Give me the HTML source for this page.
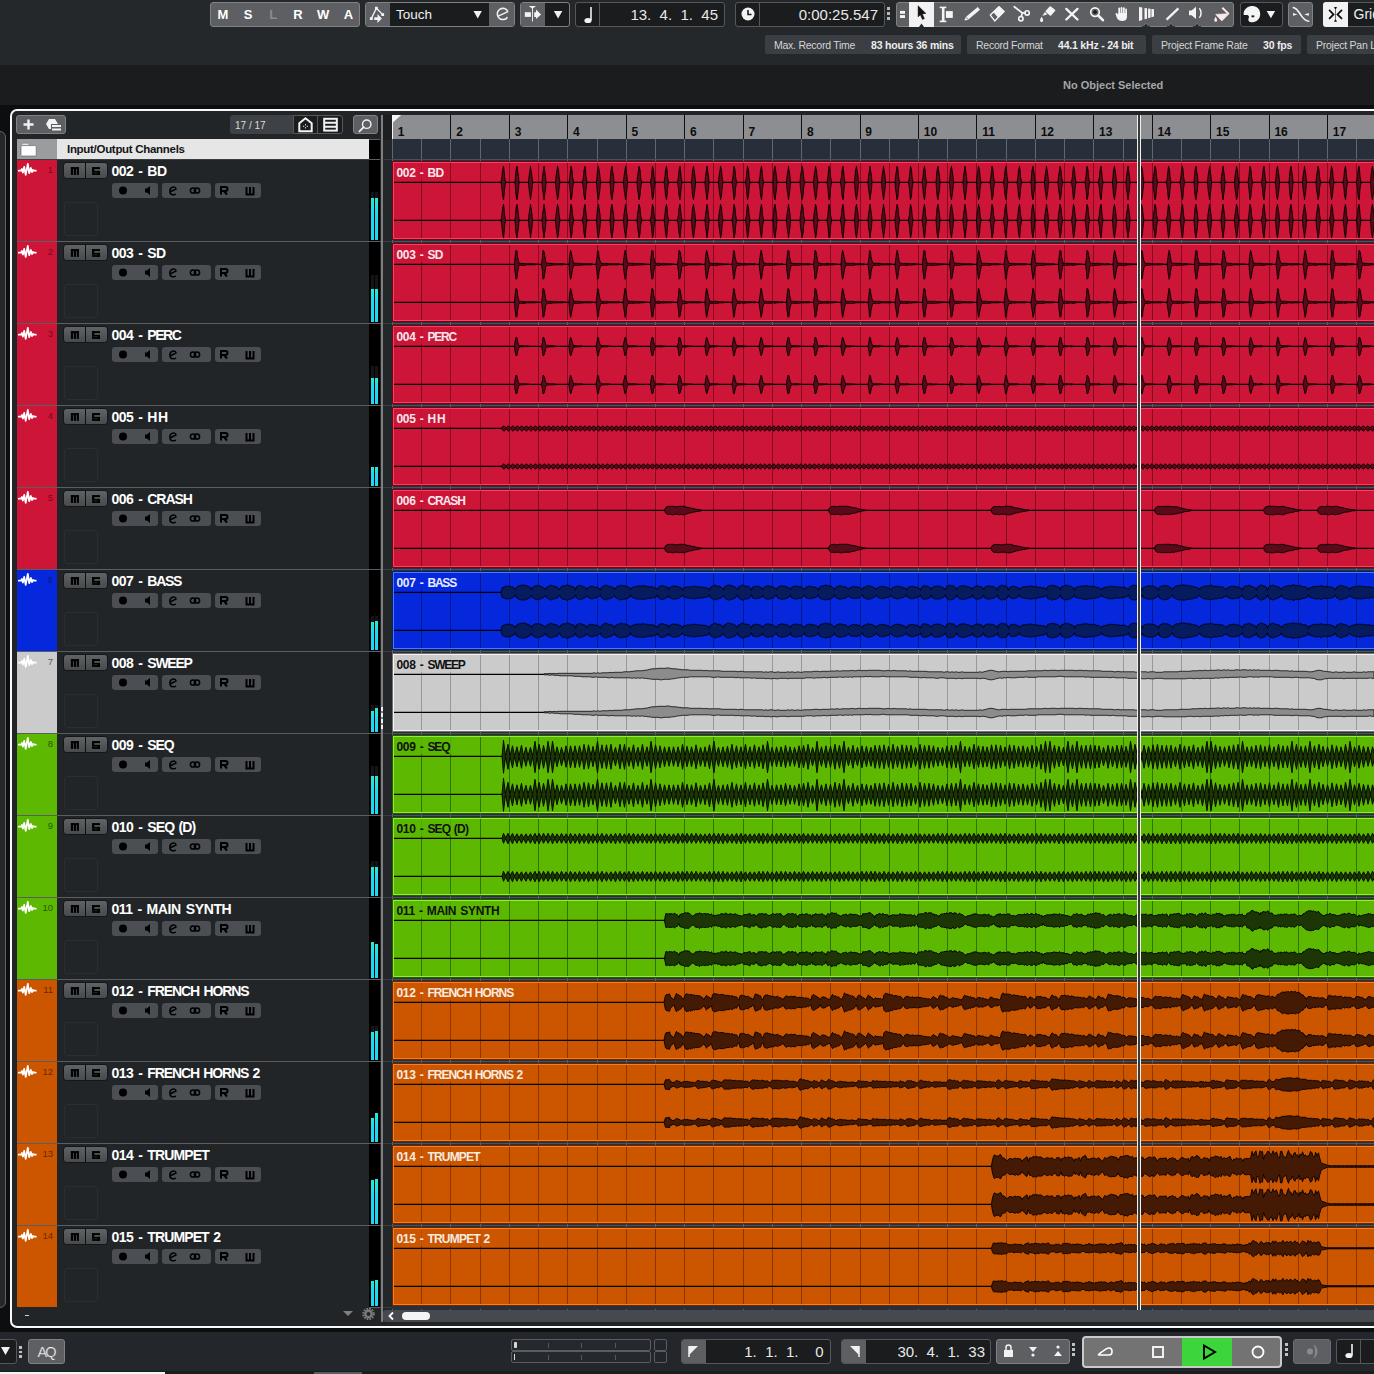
<!DOCTYPE html><html><head><meta charset="utf-8"><style>
html,body{margin:0;padding:0;}
body{width:1374px;height:1374px;position:relative;overflow:hidden;background:#25282b;font-family:"Liberation Sans",sans-serif;}
div{position:absolute;box-sizing:border-box;}
.t{white-space:nowrap;line-height:1;}
svg{position:absolute;}
</style></head><body>
<div style="left:0px;top:0px;width:1374px;height:65px;background:#25282b"></div>
<div style="left:0px;top:65px;width:1374px;height:40px;background:#1b1c1e"></div>
<div style="left:0px;top:105px;width:1374px;height:4px;background:#0d0e0f"></div>
<div class="t" style="left:1063px;top:80px;font-size:11px;font-weight:bold;color:#a6a7a9">No Object Selected</div>
<div style="left:210px;top:2px;width:150px;height:25px;background:#5e5f63;border:1px solid #808185;border-radius:3px"></div>
<div class="t" style="left:216.9px;top:8px;width:12px;text-align:center;font-size:13px;font-weight:bold;color:#fff">M</div>
<div class="t" style="left:242px;top:8px;width:12px;text-align:center;font-size:13px;font-weight:bold;color:#fff">S</div>
<div class="t" style="left:267.3px;top:8px;width:12px;text-align:center;font-size:13px;font-weight:bold;color:#8a8b8e">L</div>
<div class="t" style="left:292px;top:8px;width:12px;text-align:center;font-size:13px;font-weight:bold;color:#fff">R</div>
<div class="t" style="left:317px;top:8px;width:12px;text-align:center;font-size:13px;font-weight:bold;color:#fff">W</div>
<div class="t" style="left:342.4px;top:8px;width:12px;text-align:center;font-size:13px;font-weight:bold;color:#fff">A</div>
<div style="left:365px;top:2px;width:150px;height:25px;background:#1a1c1e;border:1px solid #808185;border-radius:3px"></div>
<div style="left:366px;top:3px;width:24px;height:23px;background:#5e5f63;border-radius:2px 0 0 2px"></div>
<div style="left:489px;top:3px;width:25px;height:23px;background:#5e5f63;border-radius:0 2px 2px 0"></div>
<div class="t" style="left:396px;top:8px;font-size:13.5px;color:#f0f0f0">Touch</div>
<svg style="left:366px;top:3px;" width="24" height="23" viewBox="0 0 24 23"><path d="M5.3 15.6 L10.4 5.2 L16.7 11.6" stroke="#f2f2f2" stroke-width="1.3" fill="none"/><rect x="9" y="3.8" width="2.8" height="2.8" fill="#f2f2f2"/><rect x="15.3" y="10.2" width="2.8" height="2.8" fill="#f2f2f2"/><rect x="3.9" y="14.2" width="2.8" height="2.8" fill="#f2f2f2"/><path d="M8.2 14.3 H11.5 V11 L15.8 15.6 L11.5 19.9 V16.9 H8.2Z" fill="#f2f2f2"/></svg>
<svg style="left:472px;top:9px;" width="12" height="10" viewBox="0 0 12 10"><path d="M1.5 2h8.4l-4.2 7.4z" fill="#f2f2f2"/></svg>
<svg style="left:489px;top:3px;" width="25" height="23" viewBox="0 0 25 23"><path d="M18.98 8.63 A5.6 5.6 0 1 0 18.49 14.21" stroke="#f2f2f2" stroke-width="1.5" fill="none"/><path d="M8.6 13.4 L18.98 8.63" stroke="#f2f2f2" stroke-width="1.5"/></svg>
<div style="left:520px;top:2px;width:50px;height:25px;background:#1a1c1e;border:1px solid #808185;border-radius:3px"></div>
<div style="left:521px;top:3px;width:24px;height:23px;background:#5e5f63;border-radius:2px 0 0 2px"></div>
<svg style="left:521px;top:3px;" width="24" height="23" viewBox="0 0 24 23"><path d="M7.8 3 H15 L11.9 5.6 V18.6 H11 V5.6Z" fill="#f2f2f2"/><rect x="3.8" y="9.2" width="6.1" height="4.7" fill="#f2f2f2"/><path d="M13.2 9.2 H15 V6.6 L20.1 11.5 L15 16.1 V13.9 H13.2Z" fill="#f2f2f2"/></svg>
<svg style="left:552px;top:9px;" width="12" height="10" viewBox="0 0 12 10"><path d="M1.9 2h8.4l-4.2 7.4z" fill="#f2f2f2"/></svg>
<div style="left:575px;top:2px;width:150px;height:25px;background:#1a1c1e;border:1px solid #55575b;border-radius:3px"></div>
<div style="left:599px;top:3px;width:1px;height:23px;background:#55575b"></div>
<svg style="left:580px;top:5px;" width="16" height="19" viewBox="0 0 16 19"><path d="M11 2 V15" stroke="#f2f2f2" stroke-width="1.6"/><ellipse cx="8" cy="15.5" rx="3.6" ry="2.6" fill="#f2f2f2"/></svg>
<div class="t" style="left:600px;top:7px;width:118px;text-align:right;font-size:15px;color:#e8e8e8">13.&nbsp;&nbsp;4.&nbsp;&nbsp;1.&nbsp;&nbsp;45</div>
<div style="left:735px;top:2px;width:150px;height:25px;background:#1a1c1e;border:1px solid #55575b;border-radius:3px"></div>
<div style="left:759px;top:3px;width:1px;height:23px;background:#55575b"></div>
<svg style="left:738px;top:4px;" width="20" height="20" viewBox="0 0 20 20"><circle cx="10" cy="10" r="6.5" fill="#f2f2f2"/><path d="M10 6v4.5h3.5" stroke="#1a1c1e" stroke-width="1.6" fill="none"/></svg>
<div class="t" style="left:760px;top:7px;width:118px;text-align:right;font-size:15px;color:#e8e8e8">0:00:25.547</div>
<div style="left:887px;top:7px;width:3px;height:3px;background:#b8b8b8"></div>
<div style="left:887px;top:12px;width:3px;height:3px;background:#b8b8b8"></div>
<div style="left:887px;top:17px;width:3px;height:3px;background:#b8b8b8"></div>
<div style="left:896px;top:2px;width:338px;height:25px;background:#5e5f63;border:1px solid #808185;border-radius:3px"></div>
<svg style="left:896px;top:2px;" width="338" height="25" viewBox="0 0 338 25"><g transform="translate(-896 -2)">
<rect x="900" y="10.9" width="5" height="2.9" fill="#f4f4f4"/><rect x="900" y="15.1" width="5" height="2.9" fill="#f4f4f4"/>
<rect x="909" y="2" width="25" height="25" fill="#f2f2f2"/>
<path d="M919 27 L921.5 23.6 L924 27Z" fill="#25272a"/>
<path d="M918.1 5.8 L925.9 13.5 L922.2 13.9 L924.4 18.6 L922.5 19.5 L920.3 14.7 L918.1 16.9Z" fill="#111" stroke="#111" stroke-width="0.5" stroke-linejoin="round"/>
<rect x="941.9" y="7.1" width="2.6" height="14.6" fill="#f4f4f4"/><rect x="939.7" y="6.6" width="6.6" height="1.6" fill="#f4f4f4"/><rect x="939.7" y="20.6" width="6.6" height="1.6" fill="#f4f4f4"/><rect x="945.9" y="11.1" width="6.9" height="6.8" fill="#f4f4f4"/>
<path d="M964.8 20.2 L968.07 19.42 L979.67 9.65 L977.73 7.35 L966.13 17.12Z" fill="#f4f4f4" stroke="#f4f4f4" stroke-width="0.6" stroke-linejoin="round"/><path d="M966.3 17.3 L968.2 19.5" stroke="#5e5f63" stroke-width="0.7"/>
<path d="M999 6.7 L1004.1 11.5 L994.7 20.9 L990.3 15.1Z" fill="none" stroke="#f4f4f4" stroke-width="1.4" stroke-linejoin="round"/><path d="M999 6.7 L1004.1 11.5 L998.3 17.3 L993.6 11.9Z" fill="#f4f4f4" stroke="#f4f4f4" stroke-width="1" stroke-linejoin="round"/>
<path d="M1014.3 6.7 L1022.3 12.9 L1025 12.9 M1022.3 12.9 L1021.2 16.5" stroke="#f4f4f4" stroke-width="1.8" stroke-linecap="round" fill="none"/><circle cx="1027.1" cy="12.9" r="2.2" stroke="#f4f4f4" stroke-width="1.6" fill="none"/><circle cx="1020.9" cy="18.7" r="2.2" stroke="#f4f4f4" stroke-width="1.6" fill="none"/>
<path d="M1041.6 16.8 C1040.3 18.8,1040 19.8,1040.1 20.6 A1.5 1.5 0 0 0 1043.1 20.6 C1043.2 19.8,1042.9 18.8,1041.6 16.8Z" fill="#f4f4f4"/><path d="M1042.4 15.9 L1044.8 11.9 L1047.4 14.2Z" fill="#f4f4f4"/><path d="M1046.4 11.3 L1050.3 7.2 L1054.4 10.5 L1050.4 14.8Z" fill="#f4f4f4" stroke="#f4f4f4" stroke-width="1.8" stroke-linejoin="round"/>
<path d="M1066.3 8.9 L1077.5 19.5 M1077.5 8.9 L1066.3 19.5" stroke="#f4f4f4" stroke-width="2.3" stroke-linecap="round"/>
<circle cx="1095" cy="12.1" r="4.3" stroke="#f4f4f4" stroke-width="1.7" fill="none"/><path d="M1098.4 15.6 L1102.9 20.2" stroke="#f4f4f4" stroke-width="2.6" stroke-linecap="round"/><path d="M1093 12.1 H1097 M1095 10.1 V14.1" stroke="#111" stroke-width="1.2"/>
<g fill="#f4f4f4"><rect x="1118.3" y="7.6" width="1.8" height="8" rx="0.9"/><rect x="1120.6" y="6.9" width="1.8" height="8" rx="0.9"/><rect x="1122.9" y="7.3" width="1.8" height="8" rx="0.9"/><rect x="1125.2" y="8.6" width="1.8" height="8" rx="0.9"/><path d="M1118.3 13 H1127 V16.5 C1127 19.5,1125.2 21,1122.3 21 C1119.5 21,1118 19.8,1117 18 L1115.6 14.2 A0.9 0.9 0 0 1 1117.3 13.6 L1118.3 15Z"/></g>
<path d="M1139 7.1 L1142.3 7.6 L1142.3 20 L1139 20.9Z M1144.5 7.9 L1147 8.3 L1147 18.7 L1144.5 19.3Z M1148.1 8.5 L1150.6 8.8 L1150.6 17.6 L1148.1 18.2Z M1151.4 9 L1154 9.3 L1154 16.6 L1151.4 17.2Z" fill="#f4f4f4"/>
<path d="M1166.6 19.6 L1178.4 8.4" stroke="#f4f4f4" stroke-width="2.3"/>
<path d="M1189 10.6 H1191.6 L1196 6.8 V19.1 L1191.6 15.3 H1189Z" fill="#f4f4f4"/><path d="M1199.3 8.3 C1201.6 10.3,1201.6 15.8,1199.3 17.8" stroke="#f4f4f4" stroke-width="1.5" fill="none"/>
<path d="M1215.8 14.4 L1228.9 13.8 L1221.8 20.9Z" fill="#fbeaea" stroke="#fbeaea" stroke-width="0.8" stroke-linejoin="round"/><path d="M1222.3 7.7 L1228.6 13.9" stroke="#fbeaea" stroke-width="2"/><path d="M1215.6 16.8 C1214.5 18.6,1214.2 19.6,1214.3 20.4 A1.4 1.4 0 0 0 1217.1 20.4 C1217.2 19.6,1216.8 18.6,1215.6 16.8Z" fill="#fbeaea"/>
</g></svg>
<svg style="left:1142.3px;top:22px;" width="8" height="5" viewBox="0 0 8 5"><path d="M0.5 5 L4 1.2 L7.5 5Z" fill="#25272a" stroke="#808185" stroke-width="0.9"/><rect x="0" y="4.2" width="8" height="1" fill="#25272a"/></svg>
<svg style="left:1167.4px;top:22px;" width="8" height="5" viewBox="0 0 8 5"><path d="M0.5 5 L4 1.2 L7.5 5Z" fill="#25272a" stroke="#808185" stroke-width="0.9"/><rect x="0" y="4.2" width="8" height="1" fill="#25272a"/></svg>
<svg style="left:1192.5px;top:22px;" width="8" height="5" viewBox="0 0 8 5"><path d="M0.5 5 L4 1.2 L7.5 5Z" fill="#25272a" stroke="#808185" stroke-width="0.9"/><rect x="0" y="4.2" width="8" height="1" fill="#25272a"/></svg>
<div style="left:1240px;top:2px;width:43px;height:25px;background:#1a1c1e;border:1px solid #55575b;border-radius:3px"></div>
<svg style="left:1240px;top:2px;" width="43" height="25" viewBox="0 0 43 25"><path d="M3.6 12.2 C3.6 6.5,8.5 3.9,12.5 3.9 C17.5 3.9,20.2 7.6,20.2 12 C20.2 17.6,15.8 20.3,11.6 20.3 C9.2 20.3,8.4 19.2,8.4 17.8 C8.4 15.8,9.8 14.8,8.2 13.4 C6.8 12.3,3.6 14,3.6 12.2Z" fill="#f4f4f4"/><ellipse cx="12.9" cy="14.3" rx="1.6" ry="1.1" fill="#1a1c1e"/><path d="M26.7 8.9 H35.1 L30.9 16.3Z" fill="#f4f4f4"/></svg>
<div style="left:1288px;top:2px;width:25px;height:25px;background:#5e5f63;border:1px solid #808185;border-radius:3px"></div>
<svg style="left:1288px;top:2px;" width="25" height="25" viewBox="0 0 25 25"><path d="M5.4 5.6 C9 6.6,10 9,12.5 12.5 C15 16,16 18.4,20.6 19.3" stroke="#f4f4f4" stroke-width="1.6" fill="none" stroke-linecap="round"/><path d="M5 10.9 L9.4 12.4 L5 13.8Z M20.8 10.9 L16.3 12.4 L20.8 13.8Z" fill="#f4f4f4"/></svg>
<div style="left:1323px;top:2px;width:60px;height:25px;background:#1a1c1e;border:1px solid #55575b;border-radius:3px"></div>
<div style="left:1323px;top:2px;width:25px;height:25px;background:#f2f2f2;border-radius:3px 0 0 3px"></div>
<svg style="left:1323px;top:2px;" width="25" height="25" viewBox="0 0 25 25"><path d="M6.1 7.9 L10.5 12.4 L6.1 16.8 M19 7.9 L14.5 12.4 L19 16.8" stroke="#111" stroke-width="1.8" fill="none"/><path d="M11 4.9 H14 L12.5 7.9Z M11 19.8 H14 L12.5 16.8Z" fill="#111"/><path d="M12.5 7.9 V16.8" stroke="#111" stroke-width="0.6"/></svg>
<div class="t" style="left:1353.5px;top:7px;font-size:14px;color:#f0f0f0">Grid</div>
<div style="left:765px;top:35px;width:196px;height:19px;background:#3b3e42;border-radius:2px"></div>
<div class="t" style="left:774px;top:39.5px;font-size:10.5px;letter-spacing:-0.25px;color:#d4d5d7">Max. Record Time</div>
<div class="t" style="left:871px;top:39.5px;font-size:10.5px;letter-spacing:-0.2px;font-weight:bold;color:#eeeeee">83 hours 36 mins</div>
<div style="left:967px;top:35px;width:179px;height:19px;background:#3b3e42;border-radius:2px"></div>
<div class="t" style="left:976px;top:39.5px;font-size:10.5px;letter-spacing:-0.25px;color:#d4d5d7">Record Format</div>
<div class="t" style="left:1058px;top:39.5px;font-size:10.5px;letter-spacing:-0.2px;font-weight:bold;color:#eeeeee">44.1 kHz - 24 bit</div>
<div style="left:1152px;top:35px;width:149px;height:19px;background:#3b3e42;border-radius:2px"></div>
<div class="t" style="left:1161px;top:39.5px;font-size:10.5px;letter-spacing:-0.25px;color:#d4d5d7">Project Frame Rate</div>
<div class="t" style="left:1263px;top:39.5px;font-size:10.5px;letter-spacing:-0.2px;font-weight:bold;color:#eeeeee">30 fps</div>
<div style="left:1307px;top:35px;width:80px;height:19px;background:#3b3e42;border-radius:2px"></div>
<div class="t" style="left:1316px;top:39.5px;font-size:10.5px;letter-spacing:-0.25px;color:#d4d5d7">Project Pan Law</div>
<div class="t" style="left:1400px;top:39.5px;font-size:10.5px;letter-spacing:-0.2px;font-weight:bold;color:#eeeeee"></div>
<div style="left:0px;top:109px;width:10px;height:1223px;background:#0d0e0f"></div>
<div style="left:10px;top:105px;width:1374px;height:12px;background:#0d0e0f"></div>
<div style="left:10px;top:1316px;width:1374px;height:16px;background:#0d0e0f"></div>
<div style="left:-20px;top:131px;width:26px;height:1177px;background:#25282b;border:1.6px solid #606266;border-radius:6px"></div>
<div style="left:10px;top:109px;width:1400px;height:1219px;background:#222528;border:2px solid #fafafa;border-radius:7px"></div>
<div style="left:0px;top:1328px;width:1374px;height:4px;background:#0d0e0f"></div>
<div style="left:16px;top:115px;width:50px;height:19px;background:#5e5f63;border:1px solid #808185;border-radius:3px"></div>
<svg style="left:16px;top:115px;" width="50" height="19" viewBox="0 0 50 19"><path d="M12.5 4.5v10M7.5 9.5h10" stroke="#f2f2f2" stroke-width="2.4"/><path d="M33 4 L39 4 L42 9 L39 14 L33 14 L30 9 Z" fill="#f2f2f2"/><rect x="35" y="9" width="12" height="6.5" fill="#5e5f63"/><rect x="36" y="10" width="9" height="2" fill="#f2f2f2"/><rect x="36" y="13.5" width="9" height="2" fill="#f2f2f2"/></svg>
<div style="left:230px;top:115px;width:63px;height:19px;background:#3e4145;border-radius:3px 0 0 3px"></div>
<div class="t" style="left:235px;top:120.5px;font-size:10px;color:#dcdcdc">17 / 17</div>
<div style="left:293px;top:115px;width:50px;height:19px;background:#1a1c1e;border:1px solid #55575b;border-radius:0 3px 3px 0"></div>
<div style="left:317px;top:116px;width:1px;height:17px;background:#55575b"></div>
<svg style="left:293px;top:115px;" width="25" height="19" viewBox="0 0 25 19"><path d="M6.3 8.2 L12.5 3.2 L18.7 8.2 V16.2 H6.3 Z" stroke="#f2f2f2" stroke-width="2" fill="none" stroke-linejoin="miter"/><path d="M12.5 9.2v1.2M12.5 12.2v1.2M10 11.3h1.2M13.8 11.3h1.2" stroke="#f2f2f2" stroke-width="1"/></svg>
<svg style="left:318px;top:115px;" width="25" height="19" viewBox="0 0 25 19"><rect x="6.2" y="3.8" width="12.6" height="11.8" stroke="#f2f2f2" stroke-width="2" fill="none"/><path d="M6.2 7.8h12.6M6.2 11.7h12.6" stroke="#f2f2f2" stroke-width="2"/></svg>
<div style="left:353px;top:115px;width:25px;height:19px;background:#5e5f63;border:1px solid #808185;border-radius:3px"></div>
<svg style="left:353px;top:115px;" width="25" height="19" viewBox="0 0 25 19"><circle cx="13.7" cy="9.2" r="4.2" stroke="#f2f2f2" stroke-width="1.4" fill="none"/><path d="M10.7 12.2 L6.4 16.4" stroke="#f2f2f2" stroke-width="1.8" stroke-linecap="round"/></svg>
<div style="left:17px;top:139px;width:40px;height:20px;background:#9b9c9e"></div>
<svg style="left:17px;top:139px;" width="40" height="20" viewBox="0 0 40 20"><rect x="4" y="6.6" width="15.2" height="10.4" rx="0.8" fill="#fff" stroke="#6a6b6d" stroke-width="0.7"/><path d="M4.8 6.2 V5.2 Q4.8 4.2 5.8 4.2 H10.8 L12 5.6 V6.2Z" fill="#fff" stroke="#6a6b6d" stroke-width="0.6"/></svg>
<div style="left:57px;top:139px;width:312px;height:20px;background:#e6e6e6"></div>
<div class="t" style="left:67px;top:144px;font-size:11.5px;letter-spacing:-0.3px;font-weight:bold;color:#141414">Input/Output Channels</div>
<div style="left:17px;top:159px;width:352px;height:1px;background:#3a3d40"></div>
<div style="left:369px;top:140px;width:11px;height:1168px;background:#000"></div>
<div style="left:381px;top:115px;width:2px;height:1207px;background:#7d7e80"></div>
<div style="left:383px;top:115px;width:9px;height:1195px;background:#23272a"></div>
<div style="left:383px;top:115px;width:9px;height:24.5px;background:#1c1e20"></div>
<div style="left:369px;top:139px;width:11px;height:1px;background:#5b5e61"></div>
<div style="left:369px;top:159px;width:11px;height:1px;background:#5b5e61"></div>
<div style="left:384px;top:159px;width:8px;height:1px;background:#3a3e42"></div>
<div style="left:392px;top:115px;width:1000px;height:25px;background:#8d8e91"></div>
<div style="left:392px;top:139px;width:1000px;height:1171px;background:#27303a"></div>
<div style="left:392.00px;top:115px;width:1px;height:24px;background:#101010"></div>
<div class="t" style="left:397.8px;top:126px;font-size:12px;font-weight:bold;color:#0c0c0c">1</div>
<div style="left:450.44px;top:115px;width:1px;height:24px;background:#101010"></div>
<div class="t" style="left:456.24px;top:126px;font-size:12px;font-weight:bold;color:#0c0c0c">2</div>
<div style="left:508.88px;top:115px;width:1px;height:24px;background:#101010"></div>
<div class="t" style="left:514.68px;top:126px;font-size:12px;font-weight:bold;color:#0c0c0c">3</div>
<div style="left:567.32px;top:115px;width:1px;height:24px;background:#101010"></div>
<div class="t" style="left:573.1199999999999px;top:126px;font-size:12px;font-weight:bold;color:#0c0c0c">4</div>
<div style="left:625.76px;top:115px;width:1px;height:24px;background:#101010"></div>
<div class="t" style="left:631.56px;top:126px;font-size:12px;font-weight:bold;color:#0c0c0c">5</div>
<div style="left:684.20px;top:115px;width:1px;height:24px;background:#101010"></div>
<div class="t" style="left:690.0px;top:126px;font-size:12px;font-weight:bold;color:#0c0c0c">6</div>
<div style="left:742.64px;top:115px;width:1px;height:24px;background:#101010"></div>
<div class="t" style="left:748.4399999999999px;top:126px;font-size:12px;font-weight:bold;color:#0c0c0c">7</div>
<div style="left:801.08px;top:115px;width:1px;height:24px;background:#101010"></div>
<div class="t" style="left:806.8799999999999px;top:126px;font-size:12px;font-weight:bold;color:#0c0c0c">8</div>
<div style="left:859.52px;top:115px;width:1px;height:24px;background:#101010"></div>
<div class="t" style="left:865.3199999999999px;top:126px;font-size:12px;font-weight:bold;color:#0c0c0c">9</div>
<div style="left:917.96px;top:115px;width:1px;height:24px;background:#101010"></div>
<div class="t" style="left:923.76px;top:126px;font-size:12px;font-weight:bold;color:#0c0c0c">10</div>
<div style="left:976.40px;top:115px;width:1px;height:24px;background:#101010"></div>
<div class="t" style="left:982.1999999999999px;top:126px;font-size:12px;font-weight:bold;color:#0c0c0c">11</div>
<div style="left:1034.84px;top:115px;width:1px;height:24px;background:#101010"></div>
<div class="t" style="left:1040.6399999999999px;top:126px;font-size:12px;font-weight:bold;color:#0c0c0c">12</div>
<div style="left:1093.28px;top:115px;width:1px;height:24px;background:#101010"></div>
<div class="t" style="left:1099.08px;top:126px;font-size:12px;font-weight:bold;color:#0c0c0c">13</div>
<div style="left:1151.72px;top:115px;width:1px;height:24px;background:#101010"></div>
<div class="t" style="left:1157.52px;top:126px;font-size:12px;font-weight:bold;color:#0c0c0c">14</div>
<div style="left:1210.16px;top:115px;width:1px;height:24px;background:#101010"></div>
<div class="t" style="left:1215.9599999999998px;top:126px;font-size:12px;font-weight:bold;color:#0c0c0c">15</div>
<div style="left:1268.60px;top:115px;width:1px;height:24px;background:#101010"></div>
<div class="t" style="left:1274.3999999999999px;top:126px;font-size:12px;font-weight:bold;color:#0c0c0c">16</div>
<div style="left:1327.04px;top:115px;width:1px;height:24px;background:#101010"></div>
<div class="t" style="left:1332.84px;top:126px;font-size:12px;font-weight:bold;color:#0c0c0c">17</div>
<div style="left:392px;top:115px;width:1px;height:24.5px;background:#f6f6f6"></div>
<svg style="left:392px;top:115px;" width="10" height="10" viewBox="0 0 10 10"><path d="M0 0 H9.2 L0 8.3 Z" fill="#f6f6f6"/></svg>
<div style="left:392.00px;top:139px;width:1px;height:1171px;background:#62676c"></div>
<div style="left:421.22px;top:139px;width:1px;height:1171px;background:#62676c"></div>
<div style="left:450.44px;top:139px;width:1px;height:1171px;background:#62676c"></div>
<div style="left:479.66px;top:139px;width:1px;height:1171px;background:#62676c"></div>
<div style="left:508.88px;top:139px;width:1px;height:1171px;background:#62676c"></div>
<div style="left:538.10px;top:139px;width:1px;height:1171px;background:#62676c"></div>
<div style="left:567.32px;top:139px;width:1px;height:1171px;background:#62676c"></div>
<div style="left:596.54px;top:139px;width:1px;height:1171px;background:#62676c"></div>
<div style="left:625.76px;top:139px;width:1px;height:1171px;background:#62676c"></div>
<div style="left:654.98px;top:139px;width:1px;height:1171px;background:#62676c"></div>
<div style="left:684.20px;top:139px;width:1px;height:1171px;background:#62676c"></div>
<div style="left:713.42px;top:139px;width:1px;height:1171px;background:#62676c"></div>
<div style="left:742.64px;top:139px;width:1px;height:1171px;background:#62676c"></div>
<div style="left:771.86px;top:139px;width:1px;height:1171px;background:#62676c"></div>
<div style="left:801.08px;top:139px;width:1px;height:1171px;background:#62676c"></div>
<div style="left:830.30px;top:139px;width:1px;height:1171px;background:#62676c"></div>
<div style="left:859.52px;top:139px;width:1px;height:1171px;background:#62676c"></div>
<div style="left:888.74px;top:139px;width:1px;height:1171px;background:#62676c"></div>
<div style="left:917.96px;top:139px;width:1px;height:1171px;background:#62676c"></div>
<div style="left:947.18px;top:139px;width:1px;height:1171px;background:#62676c"></div>
<div style="left:976.40px;top:139px;width:1px;height:1171px;background:#62676c"></div>
<div style="left:1005.62px;top:139px;width:1px;height:1171px;background:#62676c"></div>
<div style="left:1034.84px;top:139px;width:1px;height:1171px;background:#62676c"></div>
<div style="left:1064.06px;top:139px;width:1px;height:1171px;background:#62676c"></div>
<div style="left:1093.28px;top:139px;width:1px;height:1171px;background:#62676c"></div>
<div style="left:1122.50px;top:139px;width:1px;height:1171px;background:#62676c"></div>
<div style="left:1151.72px;top:139px;width:1px;height:1171px;background:#62676c"></div>
<div style="left:1180.94px;top:139px;width:1px;height:1171px;background:#62676c"></div>
<div style="left:1210.16px;top:139px;width:1px;height:1171px;background:#62676c"></div>
<div style="left:1239.38px;top:139px;width:1px;height:1171px;background:#62676c"></div>
<div style="left:1268.60px;top:139px;width:1px;height:1171px;background:#62676c"></div>
<div style="left:1297.82px;top:139px;width:1px;height:1171px;background:#62676c"></div>
<div style="left:1327.04px;top:139px;width:1px;height:1171px;background:#62676c"></div>
<div style="left:1356.26px;top:139px;width:1px;height:1171px;background:#62676c"></div>
<div style="left:392px;top:159px;width:1000px;height:1px;background:#4a5058"></div>
<div style="left:17px;top:160px;width:40px;height:81px;background:#cc1537"></div>
<svg style="left:18.2px;top:161.2px;" width="21" height="17" viewBox="0 0 21 17"><path d="M0.7 9.7H3.2L3.9 8L4.9 11.5L6.2 5.9L7.7 13.9L9.8 2.9L11.2 12.1L12.9 7L14 11.1L15.1 9L16 9.7H17.8" stroke="#fff" stroke-width="1.8" fill="none" stroke-linejoin="round" stroke-linecap="round"/></svg>
<div class="t" style="left:33px;top:165px;width:20px;text-align:right;font-size:9.5px;color:#7a0a1e">1</div>
<div style="left:63px;top:162px;width:45px;height:17px;background:linear-gradient(#606366,#484b4e);border:1px solid #141618;border-radius:3.5px"></div>
<div style="left:85px;top:163px;width:1px;height:15px;background:#0e0f10"></div>
<svg style="left:64px;top:163px;" width="43" height="15" viewBox="0 0 43 15"><g fill="#000"><rect x="6.9" y="4.1" width="8" height="2"/><rect x="6.9" y="4.1" width="2.2" height="7.8"/><rect x="9.9" y="5" width="2.1" height="6.9"/><rect x="12.8" y="4.1" width="2.1" height="7.8"/><rect x="28" y="4.1" width="8" height="2"/><rect x="28" y="4.1" width="2.3" height="5.5"/><rect x="28" y="7.9" width="8" height="1.7"/><rect x="33.7" y="7.9" width="2.3" height="4"/><rect x="28" y="10.1" width="8" height="1.8"/></g></svg>
<div class="t" style="left:111.5px;top:164.3px;font-size:14px;font-weight:bold;color:#ffffff;letter-spacing:-0.5px;word-spacing:1.5px">002 - <span style="letter-spacing:-0.500px">BD</span></div>
<div style="left:112px;top:183px;width:46px;height:15px;background:#4b4e52;border-radius:3px"></div>
<div style="left:162px;top:183px;width:49px;height:15px;background:#4b4e52;border-radius:3px"></div>
<div style="left:215px;top:183px;width:46px;height:15px;background:#4b4e52;border-radius:3px"></div>
<svg style="left:112px;top:183px;" width="150" height="15" viewBox="0 0 150 15"><circle cx="11" cy="7.5" r="4" fill="#000"/><path d="M33 5.5h2l3-2.5v9l-3-2.5h-2z" fill="#000"/><path d="M58 9.5 C57 3,64 3,64 6 L58 9 C58 12,62 12.5,64 11" stroke="#000" stroke-width="1.5" fill="none"/><circle cx="81" cy="7.5" r="2.6" stroke="#000" stroke-width="1.5" fill="none"/><circle cx="85" cy="7.5" r="2.6" stroke="#000" stroke-width="1.5" fill="none"/><path d="M109 11.5V4h4.5a2 2 0 0 1 0 4h-4.5M112 8l3 3.5" stroke="#000" stroke-width="2" fill="none"/><path d="M134.5 4v7.5h7V4M138 4v7" stroke="#000" stroke-width="2" fill="none"/></svg>
<div style="left:64px;top:202px;width:34px;height:34px;border:1px solid #2b2e31;border-radius:3px"></div>
<div style="left:17px;top:241px;width:364px;height:1px;background:#5b5e61"></div>
<div style="left:371px;top:192px;width:3px;height:5.700000000000003px;background:#151515"></div>
<div style="left:375px;top:192px;width:3px;height:5.700000000000003px;background:#151515"></div>
<div style="left:371px;top:197.7px;width:3px;height:42.3px;background:linear-gradient(#2ae8d0,#1ed8f2 40%)"></div>
<div style="left:375px;top:197.7px;width:3px;height:42.3px;background:linear-gradient(#2ae8d0,#1ed8f2 40%)"></div>
<div style="left:383px;top:241px;width:9px;height:1px;background:#3a3e42"></div>
<div style="left:392px;top:241px;width:1000px;height:1px;background:#4a535c"></div>
<div style="left:392px;top:161px;width:1000px;height:79px;background:#6e0618"></div>
<div style="left:393px;top:162px;width:1000px;height:77px;background:#ff3c62"></div>
<div style="left:394px;top:163px;width:1000px;height:75px;background:#cc1537"></div>
<div style="left:421.22px;top:163px;width:1px;height:75px;background:rgba(60,0,10,0.5)"></div>
<div style="left:450.44px;top:163px;width:1px;height:75px;background:rgba(60,0,10,0.5)"></div>
<div style="left:479.66px;top:163px;width:1px;height:75px;background:rgba(60,0,10,0.5)"></div>
<div style="left:508.88px;top:163px;width:1px;height:75px;background:rgba(60,0,10,0.5)"></div>
<div style="left:538.10px;top:163px;width:1px;height:75px;background:rgba(60,0,10,0.5)"></div>
<div style="left:567.32px;top:163px;width:1px;height:75px;background:rgba(60,0,10,0.5)"></div>
<div style="left:596.54px;top:163px;width:1px;height:75px;background:rgba(60,0,10,0.5)"></div>
<div style="left:625.76px;top:163px;width:1px;height:75px;background:rgba(60,0,10,0.5)"></div>
<div style="left:654.98px;top:163px;width:1px;height:75px;background:rgba(60,0,10,0.5)"></div>
<div style="left:684.20px;top:163px;width:1px;height:75px;background:rgba(60,0,10,0.5)"></div>
<div style="left:713.42px;top:163px;width:1px;height:75px;background:rgba(60,0,10,0.5)"></div>
<div style="left:742.64px;top:163px;width:1px;height:75px;background:rgba(60,0,10,0.5)"></div>
<div style="left:771.86px;top:163px;width:1px;height:75px;background:rgba(60,0,10,0.5)"></div>
<div style="left:801.08px;top:163px;width:1px;height:75px;background:rgba(60,0,10,0.5)"></div>
<div style="left:830.30px;top:163px;width:1px;height:75px;background:rgba(60,0,10,0.5)"></div>
<div style="left:859.52px;top:163px;width:1px;height:75px;background:rgba(60,0,10,0.5)"></div>
<div style="left:888.74px;top:163px;width:1px;height:75px;background:rgba(60,0,10,0.5)"></div>
<div style="left:917.96px;top:163px;width:1px;height:75px;background:rgba(60,0,10,0.5)"></div>
<div style="left:947.18px;top:163px;width:1px;height:75px;background:rgba(60,0,10,0.5)"></div>
<div style="left:976.40px;top:163px;width:1px;height:75px;background:rgba(60,0,10,0.5)"></div>
<div style="left:1005.62px;top:163px;width:1px;height:75px;background:rgba(60,0,10,0.5)"></div>
<div style="left:1034.84px;top:163px;width:1px;height:75px;background:rgba(60,0,10,0.5)"></div>
<div style="left:1064.06px;top:163px;width:1px;height:75px;background:rgba(60,0,10,0.5)"></div>
<div style="left:1093.28px;top:163px;width:1px;height:75px;background:rgba(60,0,10,0.5)"></div>
<div style="left:1122.50px;top:163px;width:1px;height:75px;background:rgba(60,0,10,0.5)"></div>
<div style="left:1151.72px;top:163px;width:1px;height:75px;background:rgba(60,0,10,0.5)"></div>
<div style="left:1180.94px;top:163px;width:1px;height:75px;background:rgba(60,0,10,0.5)"></div>
<div style="left:1210.16px;top:163px;width:1px;height:75px;background:rgba(60,0,10,0.5)"></div>
<div style="left:1239.38px;top:163px;width:1px;height:75px;background:rgba(60,0,10,0.5)"></div>
<div style="left:1268.60px;top:163px;width:1px;height:75px;background:rgba(60,0,10,0.5)"></div>
<div style="left:1297.82px;top:163px;width:1px;height:75px;background:rgba(60,0,10,0.5)"></div>
<div style="left:1327.04px;top:163px;width:1px;height:75px;background:rgba(60,0,10,0.5)"></div>
<div style="left:1356.26px;top:163px;width:1px;height:75px;background:rgba(60,0,10,0.5)"></div>
<svg style="left:392px;top:160px;" width="982" height="82" viewBox="0 0 982 82"><defs><path id="w0" d="M501 0l1 -6l.5 -6l1 -4l.5 3.5l.5 6.5l1 6l-1 6.5l-.5 7l-.5 4l-1 -4.5l-.5 -6.5l-1 -6.5ZM515 0l.5 -6l.5 -6l1 -4l.5 3.5l1 6.5l.5 6l-.5 6.5l-1 7l-.5 4l-1 -4.5l-.5 -6.5l-.5 -6.5ZM528.5 0l.5 -6l1 -6l.5 -4l.5 3.5l1 6.5l.5 6l-.5 6.5l-1 7l-.5 4l-.5 -4.5l-1 -6.5l-.5 -6.5ZM542 0l.5 -6l1 -6l.5 -4l.5 3.5l1 6.5l.5 6l-.5 6.5l-1 7l-.5 4l-.5 -4.5l-1 -6.5l-.5 -6.5ZM555.5 0l.5 -6l1 -6l.5 -4l1 3.5l.5 6.5l1 6l-1 6.5l-.5 7l-1 4l-.5 -4.5l-1 -6.5l-.5 -6.5ZM569 0l1 -6l.5 -6l.5 -4l1 3.5l.5 6.5l1 6l-1 6.5l-.5 7l-1 4l-.5 -4.5l-.5 -6.5l-1 -6.5ZM582.5 0l1 -6l.5 -6l1 -4l.5 3.5l.5 6.5l1 6l-1 6.5l-.5 7l-.5 4l-1 -4.5l-.5 -6.5l-1 -6.5ZM596.5 0l.5 -6l.5 -6l1 -4l.5 3.5l1 6.5l.5 6l-.5 6.5l-1 7l-.5 4l-1 -4.5l-.5 -6.5l-.5 -6.5ZM610 0l.5 -6l.5 -6l1 -4l.5 3.5l1 6.5l.5 6l-.5 6.5l-1 7l-.5 4l-1 -4.5l-.5 -6.5l-.5 -6.5ZM623.5 0l.5 -6l1 -6l.5 -4l.5 3.5l1 6.5l.5 6l-.5 6.5l-1 7l-.5 4l-.5 -4.5l-1 -6.5l-.5 -6.5ZM637 0l.5 -6l1 -6l.5 -4l1 3.5l.5 6.5l1 6l-1 6.5l-.5 7l-1 4l-.5 -4.5l-1 -6.5l-.5 -6.5ZM650.5 0l1 -6l.5 -6l.5 -4l1 3.5l.5 6.5l1 6l-1 6.5l-.5 7l-1 4l-.5 -4.5l-.5 -6.5l-1 -6.5ZM664 0l1 -6l.5 -6l1 -4l.5 3.5l.5 6.5l1 6l-1 6.5l-.5 7l-.5 4l-1 -4.5l-.5 -6.5l-1 -6.5ZM677.5 0l1 -6l.5 -6l1 -4l.5 3.5l.5 6.5l1 6l-1 6.5l-.5 7l-.5 4l-1 -4.5l-.5 -6.5l-1 -6.5ZM691.5 0l.5 -6l.5 -6l1 -4l.5 3.5l1 6.5l.5 6l-.5 6.5l-1 7l-.5 4l-1 -4.5l-.5 -6.5l-.5 -6.5ZM705 0l.5 -6l1 -6l.5 -4l.5 3.5l1 6.5l.5 6l-.5 6.5l-1 7l-.5 4l-.5 -4.5l-1 -6.5l-.5 -6.5ZM718.5 0l.5 -6l1 -6l.5 -4l1 3.5l.5 6.5l1 6l-1 6.5l-.5 7l-1 4l-.5 -4.5l-1 -6.5l-.5 -6.5ZM732 0l1 -6l.5 -6l.5 -4l1 3.5l.5 6.5l1 6l-1 6.5l-.5 7l-1 4l-.5 -4.5l-.5 -6.5l-1 -6.5ZM745.5 0l1 -6l.5 -6l.5 -4l1 3.5l.5 6.5l1 6l-1 6.5l-.5 7l-1 4l-.5 -4.5l-.5 -6.5l-1 -6.5ZM759 0l1 -6l.5 -6l1 -4l.5 3.5l.5 6.5l1 6l-1 6.5l-.5 7l-.5 4l-1 -4.5l-.5 -6.5l-1 -6.5ZM773 0l.5 -6l.5 -6l1 -4l.5 3.5l1 6.5l.5 6l-.5 6.5l-1 7l-.5 4l-1 -4.5l-.5 -6.5l-.5 -6.5ZM786.5 0l.5 -6l1 -6l.5 -4l.5 3.5l1 6.5l.5 6l-.5 6.5l-1 7l-.5 4l-.5 -4.5l-1 -6.5l-.5 -6.5ZM800 0l.5 -6l1 -6l.5 -4l1 3.5l.5 6.5l1 6l-1 6.5l-.5 7l-1 4l-.5 -4.5l-1 -6.5l-.5 -6.5ZM813.5 0l.5 -6l1 -6l.5 -4l1 3.5l.5 6.5l1 6l-1 6.5l-.5 7l-1 4l-.5 -4.5l-1 -6.5l-.5 -6.5ZM827 0l1 -6l.5 -6l.5 -4l1 3.5l.5 6.5l1 6l-1 6.5l-.5 7l-1 4l-.5 -4.5l-.5 -6.5l-1 -6.5ZM840.5 0l1 -6l.5 -6l1 -4l.5 3.5l.5 6.5l1 6l-1 6.5l-.5 7l-.5 4l-1 -4.5l-.5 -6.5l-1 -6.5ZM854.5 0l.5 -6l.5 -6l1 -4l.5 3.5l1 6.5l.5 6l-.5 6.5l-1 7l-.5 4l-1 -4.5l-.5 -6.5l-.5 -6.5ZM868 0l.5 -6l1 -6l.5 -4l.5 3.5l1 6.5l.5 6l-.5 6.5l-1 7l-.5 4l-.5 -4.5l-1 -6.5l-.5 -6.5ZM881.5 0l.5 -6l1 -6l.5 -4l.5 3.5l1 6.5l.5 6l-.5 6.5l-1 7l-.5 4l-.5 -4.5l-1 -6.5l-.5 -6.5ZM895 0l.5 -6l1 -6l.5 -4l1 3.5l.5 6.5l1 6l-1 6.5l-.5 7l-1 4l-.5 -4.5l-1 -6.5l-.5 -6.5ZM908.5 0l1 -6l.5 -6l.5 -4l1 3.5l.5 6.5l1 6l-1 6.5l-.5 7l-1 4l-.5 -4.5l-.5 -6.5l-1 -6.5ZM922 0l1 -6l.5 -6l1 -4l.5 3.5l.5 6.5l1 6l-1 6.5l-.5 7l-.5 4l-1 -4.5l-.5 -6.5l-1 -6.5ZM936 0l.5 -6l.5 -6l1 -4l.5 3.5l1 6.5l.5 6l-.5 6.5l-1 7l-.5 4l-1 -4.5l-.5 -6.5l-.5 -6.5ZM949.5 0l.5 -6l.5 -6l1 -4l.5 3.5l1 6.5l.5 6l-.5 6.5l-1 7l-.5 4l-1 -4.5l-.5 -6.5l-.5 -6.5ZM963 0l.5 -6l1 -6l.5 -4l.5 3.5l1 6.5l.5 6l-.5 6.5l-1 7l-.5 4l-.5 -4.5l-1 -6.5l-.5 -6.5ZM976.5 0l.5 -6l1 -6l.5 -4l1 3.5l.5 6.5l1 6l-1 6.5l-.5 7l-1 4l-.5 -4.5l-1 -6.5l-.5 -6.5ZM990 0l1 -6l.5 -6l.5 -4l1 3.5l.5 6.5l1 6l-1 6.5l-.5 7l-1 4l-.5 -4.5l-.5 -6.5l-1 -6.5ZM1003.5 0l1 -6l.5 -6l1 -4l.5 3.5l.5 6.5l1 6l-1 6.5l-.5 7l-.5 4l-1 -4.5l-.5 -6.5l-1 -6.5ZM1017 0l1 -6l.5 -6l1 -4l.5 3.5l.5 6.5l1 6l-1 6.5l-.5 7l-.5 4l-1 -4.5l-.5 -6.5l-1 -6.5ZM1031 0l.5 -6l.5 -6l1 -4l.5 3.5l1 6.5l.5 6l-.5 6.5l-1 7l-.5 4l-1 -4.5l-.5 -6.5l-.5 -6.5ZM1044.5 0l.5 -6l1 -6l.5 -4l.5 3.5l1 6.5l.5 6l-.5 6.5l-1 7l-.5 4l-.5 -4.5l-1 -6.5l-.5 -6.5ZM1058 0l.5 -6l1 -6l.5 -4l1 3.5l.5 6.5l1 6l-1 6.5l-.5 7l-1 4l-.5 -4.5l-1 -6.5l-.5 -6.5ZM1071.5 0l1 -6l.5 -6l.5 -4l1 3.5l.5 6.5l1 6l-1 6.5l-.5 7l-1 4l-.5 -4.5l-.5 -6.5l-1 -6.5ZM1085 0l1 -6l.5 -6l.5 -4l1 3.5l.5 6.5l1 6l-1 6.5l-.5 7l-1 4l-.5 -4.5l-.5 -6.5l-1 -6.5ZM1098.5 0l1 -6l.5 -6l1 -4l.5 3.5l.5 6.5l1 6l-1 6.5l-.5 7l-.5 4l-1 -4.5l-.5 -6.5l-1 -6.5ZM1112.5 0l.5 -6l.5 -6l1 -4l.5 3.5l1 6.5l.5 6l-.5 6.5l-1 7l-.5 4l-1 -4.5l-.5 -6.5l-.5 -6.5ZM1126 0l.5 -6l1 -6l.5 -4l.5 3.5l1 6.5l.5 6l-.5 6.5l-1 7l-.5 4l-.5 -4.5l-1 -6.5l-.5 -6.5ZM1139.5 0l.5 -6l1 -6l.5 -4l1 3.5l.5 6.5l1 6l-1 6.5l-.5 7l-1 4l-.5 -4.5l-1 -6.5l-.5 -6.5ZM1153 0l.5 -6l1 -6l.5 -4l1 3.5l.5 6.5l1 6l-1 6.5l-.5 7l-1 4l-.5 -4.5l-1 -6.5l-.5 -6.5ZM1166.5 0l1 -6l.5 -6l.5 -4l1 3.5l.5 6.5l1 6l-1 6.5l-.5 7l-1 4l-.5 -4.5l-.5 -6.5l-1 -6.5ZM1180 0l1 -6l.5 -6l1 -4l.5 3.5l.5 6.5l1 6l-1 6.5l-.5 7l-.5 4l-1 -4.5l-.5 -6.5l-1 -6.5ZM1194 0l.5 -6l.5 -6l1 -4l.5 3.5l1 6.5l.5 6l-.5 6.5l-1 7l-.5 4l-1 -4.5l-.5 -6.5l-.5 -6.5ZM1207.5 0l.5 -6l1 -6l.5 -4l.5 3.5l1 6.5l.5 6l-.5 6.5l-1 7l-.5 4l-.5 -4.5l-1 -6.5l-.5 -6.5ZM1221 0l.5 -6l1 -6l.5 -4l.5 3.5l1 6.5l.5 6l-.5 6.5l-1 7l-.5 4l-.5 -4.5l-1 -6.5l-.5 -6.5ZM1234.5 0l.5 -6l1 -6l.5 -4l1 3.5l.5 6.5l1 6l-1 6.5l-.5 7l-1 4l-.5 -4.5l-1 -6.5l-.5 -6.5ZM1248 0l1 -6l.5 -6l.5 -4l1 3.5l.5 6.5l1 6l-1 6.5l-.5 7l-1 4l-.5 -4.5l-.5 -6.5l-1 -6.5ZM1261.5 0l1 -6l.5 -6l1 -4l.5 3.5l.5 6.5l1 6l-1 6.5l-.5 7l-.5 4l-1 -4.5l-.5 -6.5l-1 -6.5ZM1275.5 0l.5 -6l.5 -6l1 -4l.5 3.5l1 6.5l.5 6l-.5 6.5l-1 7l-.5 4l-1 -4.5l-.5 -6.5l-.5 -6.5ZM1289 0l.5 -6l.5 -6l1 -4l.5 3.5l1 6.5l.5 6l-.5 6.5l-1 7l-.5 4l-1 -4.5l-.5 -6.5l-.5 -6.5ZM1302.5 0l.5 -6l1 -6l.5 -4l.5 3.5l1 6.5l.5 6l-.5 6.5l-1 7l-.5 4l-.5 -4.5l-1 -6.5l-.5 -6.5ZM1316 0l.5 -6l1 -6l.5 -4l1 3.5l.5 6.5l1 6l-1 6.5l-.5 7l-1 4l-.5 -4.5l-1 -6.5l-.5 -6.5ZM1329.5 0l1 -6l.5 -6l.5 -4l1 3.5l.5 6.5l1 6l-1 6.5l-.5 7l-1 4l-.5 -4.5l-.5 -6.5l-1 -6.5ZM1343 0l1 -6l.5 -6l1 -4l.5 3.5l.5 6.5l1 6l-1 6.5l-.5 7l-.5 4l-1 -4.5l-.5 -6.5l-1 -6.5ZM1356.5 0l1 -6l.5 -6l1 -4l.5 3.5l.5 6.5l1 6l-1 6.5l-.5 7l-.5 4l-1 -4.5l-.5 -6.5l-1 -6.5ZM1370.5 0l.5 -6l.5 -6l1 -4l.5 3.5l1 6.5l.5 6l-.5 6.5l-1 7l-.5 4l-1 -4.5l-.5 -6.5l-.5 -6.5Z"/></defs><path d="M2 22.3H990M2 60.3H990" stroke="#000" stroke-width="1.2"/><g fill="#5a0a18" stroke="#000" stroke-width="0.9" stroke-linejoin="round"><use href="#w0" transform="translate(-392 22.3)"/><use href="#w0" transform="translate(-392 60.3)"/></g></svg>
<div class="t" style="left:394px;top:163px;padding:3.5px 4px 1px 2.5px;height:17px;background:rgba(204,21,55,0.82);font-size:12px;letter-spacing:-0.3px;word-spacing:1px;font-weight:bold;color:#f4e8ec">002 - <span style="letter-spacing:-0.550px">BD</span></div>
<div style="left:17px;top:242px;width:40px;height:81px;background:#cc1537"></div>
<svg style="left:18.2px;top:243.2px;" width="21" height="17" viewBox="0 0 21 17"><path d="M0.7 9.7H3.2L3.9 8L4.9 11.5L6.2 5.9L7.7 13.9L9.8 2.9L11.2 12.1L12.9 7L14 11.1L15.1 9L16 9.7H17.8" stroke="#fff" stroke-width="1.8" fill="none" stroke-linejoin="round" stroke-linecap="round"/></svg>
<div class="t" style="left:33px;top:247px;width:20px;text-align:right;font-size:9.5px;color:#7a0a1e">2</div>
<div style="left:63px;top:244px;width:45px;height:17px;background:linear-gradient(#606366,#484b4e);border:1px solid #141618;border-radius:3.5px"></div>
<div style="left:85px;top:245px;width:1px;height:15px;background:#0e0f10"></div>
<svg style="left:64px;top:245px;" width="43" height="15" viewBox="0 0 43 15"><g fill="#000"><rect x="6.9" y="4.1" width="8" height="2"/><rect x="6.9" y="4.1" width="2.2" height="7.8"/><rect x="9.9" y="5" width="2.1" height="6.9"/><rect x="12.8" y="4.1" width="2.1" height="7.8"/><rect x="28" y="4.1" width="8" height="2"/><rect x="28" y="4.1" width="2.3" height="5.5"/><rect x="28" y="7.9" width="8" height="1.7"/><rect x="33.7" y="7.9" width="2.3" height="4"/><rect x="28" y="10.1" width="8" height="1.8"/></g></svg>
<div class="t" style="left:111.5px;top:246.3px;font-size:14px;font-weight:bold;color:#ffffff;letter-spacing:-0.5px;word-spacing:1.5px">003 - <span style="letter-spacing:-0.650px">SD</span></div>
<div style="left:112px;top:265px;width:46px;height:15px;background:#4b4e52;border-radius:3px"></div>
<div style="left:162px;top:265px;width:49px;height:15px;background:#4b4e52;border-radius:3px"></div>
<div style="left:215px;top:265px;width:46px;height:15px;background:#4b4e52;border-radius:3px"></div>
<svg style="left:112px;top:265px;" width="150" height="15" viewBox="0 0 150 15"><circle cx="11" cy="7.5" r="4" fill="#000"/><path d="M33 5.5h2l3-2.5v9l-3-2.5h-2z" fill="#000"/><path d="M58 9.5 C57 3,64 3,64 6 L58 9 C58 12,62 12.5,64 11" stroke="#000" stroke-width="1.5" fill="none"/><circle cx="81" cy="7.5" r="2.6" stroke="#000" stroke-width="1.5" fill="none"/><circle cx="85" cy="7.5" r="2.6" stroke="#000" stroke-width="1.5" fill="none"/><path d="M109 11.5V4h4.5a2 2 0 0 1 0 4h-4.5M112 8l3 3.5" stroke="#000" stroke-width="2" fill="none"/><path d="M134.5 4v7.5h7V4M138 4v7" stroke="#000" stroke-width="2" fill="none"/></svg>
<div style="left:64px;top:284px;width:34px;height:34px;border:1px solid #2b2e31;border-radius:3px"></div>
<div style="left:17px;top:323px;width:364px;height:1px;background:#5b5e61"></div>
<div style="left:371px;top:275px;width:3px;height:14px;background:#151515"></div>
<div style="left:375px;top:275px;width:3px;height:14px;background:#151515"></div>
<div style="left:371px;top:289px;width:3px;height:33px;background:linear-gradient(#2ae8d0,#1ed8f2 40%)"></div>
<div style="left:375px;top:289px;width:3px;height:33px;background:linear-gradient(#2ae8d0,#1ed8f2 40%)"></div>
<div style="left:383px;top:323px;width:9px;height:1px;background:#3a3e42"></div>
<div style="left:392px;top:323px;width:1000px;height:1px;background:#4a535c"></div>
<div style="left:392px;top:243px;width:1000px;height:79px;background:#6e0618"></div>
<div style="left:393px;top:244px;width:1000px;height:77px;background:#ff3c62"></div>
<div style="left:394px;top:245px;width:1000px;height:75px;background:#cc1537"></div>
<div style="left:421.22px;top:245px;width:1px;height:75px;background:rgba(60,0,10,0.5)"></div>
<div style="left:450.44px;top:245px;width:1px;height:75px;background:rgba(60,0,10,0.5)"></div>
<div style="left:479.66px;top:245px;width:1px;height:75px;background:rgba(60,0,10,0.5)"></div>
<div style="left:508.88px;top:245px;width:1px;height:75px;background:rgba(60,0,10,0.5)"></div>
<div style="left:538.10px;top:245px;width:1px;height:75px;background:rgba(60,0,10,0.5)"></div>
<div style="left:567.32px;top:245px;width:1px;height:75px;background:rgba(60,0,10,0.5)"></div>
<div style="left:596.54px;top:245px;width:1px;height:75px;background:rgba(60,0,10,0.5)"></div>
<div style="left:625.76px;top:245px;width:1px;height:75px;background:rgba(60,0,10,0.5)"></div>
<div style="left:654.98px;top:245px;width:1px;height:75px;background:rgba(60,0,10,0.5)"></div>
<div style="left:684.20px;top:245px;width:1px;height:75px;background:rgba(60,0,10,0.5)"></div>
<div style="left:713.42px;top:245px;width:1px;height:75px;background:rgba(60,0,10,0.5)"></div>
<div style="left:742.64px;top:245px;width:1px;height:75px;background:rgba(60,0,10,0.5)"></div>
<div style="left:771.86px;top:245px;width:1px;height:75px;background:rgba(60,0,10,0.5)"></div>
<div style="left:801.08px;top:245px;width:1px;height:75px;background:rgba(60,0,10,0.5)"></div>
<div style="left:830.30px;top:245px;width:1px;height:75px;background:rgba(60,0,10,0.5)"></div>
<div style="left:859.52px;top:245px;width:1px;height:75px;background:rgba(60,0,10,0.5)"></div>
<div style="left:888.74px;top:245px;width:1px;height:75px;background:rgba(60,0,10,0.5)"></div>
<div style="left:917.96px;top:245px;width:1px;height:75px;background:rgba(60,0,10,0.5)"></div>
<div style="left:947.18px;top:245px;width:1px;height:75px;background:rgba(60,0,10,0.5)"></div>
<div style="left:976.40px;top:245px;width:1px;height:75px;background:rgba(60,0,10,0.5)"></div>
<div style="left:1005.62px;top:245px;width:1px;height:75px;background:rgba(60,0,10,0.5)"></div>
<div style="left:1034.84px;top:245px;width:1px;height:75px;background:rgba(60,0,10,0.5)"></div>
<div style="left:1064.06px;top:245px;width:1px;height:75px;background:rgba(60,0,10,0.5)"></div>
<div style="left:1093.28px;top:245px;width:1px;height:75px;background:rgba(60,0,10,0.5)"></div>
<div style="left:1122.50px;top:245px;width:1px;height:75px;background:rgba(60,0,10,0.5)"></div>
<div style="left:1151.72px;top:245px;width:1px;height:75px;background:rgba(60,0,10,0.5)"></div>
<div style="left:1180.94px;top:245px;width:1px;height:75px;background:rgba(60,0,10,0.5)"></div>
<div style="left:1210.16px;top:245px;width:1px;height:75px;background:rgba(60,0,10,0.5)"></div>
<div style="left:1239.38px;top:245px;width:1px;height:75px;background:rgba(60,0,10,0.5)"></div>
<div style="left:1268.60px;top:245px;width:1px;height:75px;background:rgba(60,0,10,0.5)"></div>
<div style="left:1297.82px;top:245px;width:1px;height:75px;background:rgba(60,0,10,0.5)"></div>
<div style="left:1327.04px;top:245px;width:1px;height:75px;background:rgba(60,0,10,0.5)"></div>
<div style="left:1356.26px;top:245px;width:1px;height:75px;background:rgba(60,0,10,0.5)"></div>
<svg style="left:392px;top:242px;" width="982" height="82" viewBox="0 0 982 82"><defs><path id="w1" d="M514.5 0l.5 -7l1 -7l1 1l.5 5.5l1 4l.5 2.5l1.5 0l1 0l1.5 .5l1 -.5l1 .5l1.5 0l1 0l1.5 0l1 0l1 0l1.5 0l1 0l1.5 0l1 .5l1 0l1.5 0l-1.5 0l-1 0l-1 .5l-1.5 0l-1 0l-1.5 0l-1 0l-1 0l-1.5 0l-1 0l-1.5 .5l-1 0l-1 0l-1.5 0l-1 0l-1.5 0l-.5 2.5l-1 4.5l-.5 6l-1 1l-1 -7.5l-.5 -7.5ZM541.5 0l1 -7l.5 -7l1 1l1 5.5l.5 4l1 2.5l1 0l1.5 0l1 0l1 0l1.5 .5l1 -.5l1.5 .5l1 0l1 0l1.5 0l1 0l1.5 0l1 0l1 0l1.5 .5l1 0l-1 0l-1.5 .5l-1 0l-1 0l-1.5 0l-1 0l-1.5 0l-1 0l-1 0l-1.5 .5l-1 -.5l-1.5 .5l-1 0l-1 0l-1.5 .5l-1 -.5l-1 2.5l-.5 4.5l-1 6l-1 1l-.5 -7.5l-1 -7.5ZM569 0l.5 -7l1 -7l.5 1l1 5.5l1 4l.5 2.5l1.5 0l1 0l1 0l1.5 0l1 0l1.5 .5l1 0l1 0l1.5 0l1 0l1.5 0l1 0l1 0l1.5 0l1 0l1.5 .5l-1.5 .5l-1 0l-1.5 0l-1 0l-1 0l-1.5 0l-1 0l-1.5 0l-1 .5l-1 -.5l-1.5 .5l-1 0l-1.5 0l-1 0l-1 0l-1.5 0l-.5 2.5l-1 4.5l-1 6l-.5 1l-1 -7.5l-.5 -7.5ZM596 0l1 -7l.5 -7l1 1l.5 5.5l1 4l1 2.5l1 0l1 0l1.5 .5l1 -.5l1.5 0l1 .5l1 0l1.5 0l1 0l1.5 0l1 0l1 0l1.5 0l1 0l1.5 0l1 .5l-1 .5l-1.5 0l-1 0l-1.5 0l-1 0l-1 0l-1.5 0l-1 0l-1.5 0l-1 0l-1 .5l-1.5 0l-1 0l-1.5 0l-1 0l-1 0l-1 2.5l-1 4.5l-.5 6l-1 1l-.5 -7.5l-1 -7.5ZM623 0l1 -7l1 -7l.5 1l1 5.5l.5 4l1 2.5l1 0l1.5 0l1 0l1.5 0l1 0l1 .5l1.5 -.5l1 .5l1.5 -.5l1 .5l1 0l1.5 0l1 0l1.5 .5l1 0l1 0l-1 0l-1 0l-1.5 .5l-1 0l-1.5 0l-1 0l-1 .5l-1.5 -.5l-1 .5l-1.5 -.5l-1 .5l-1 0l-1.5 0l-1 0l-1.5 0l-1 0l-1 2.5l-.5 4.5l-1 6l-.5 1l-1 -7.5l-1 -7.5ZM650.5 0l.5 -7l1 -7l1 1l.5 5.5l1 4l.5 2.5l1.5 0l1 0l1.5 0l1 .5l1 0l1.5 0l1 -.5l1.5 .5l1 0l1 0l1.5 0l1 0l1.5 0l1 .5l1 0l1.5 0l-1.5 0l-1 0l-1 .5l-1.5 0l-1 0l-1.5 0l-1 0l-1 0l-1.5 .5l-1 -.5l-1.5 0l-1 .5l-1 0l-1.5 0l-1 0l-1.5 0l-.5 2.5l-1 4.5l-.5 6l-1 1l-1 -7.5l-.5 -7.5ZM677.5 0l1 -7l.5 -7l1 1l1 5.5l.5 4l1 2.5l1 0l1.5 0l1 0l1 .5l1.5 0l1 0l1.5 0l1 0l1 0l1.5 0l1 0l1.5 0l1 0l1 0l1.5 0l1 .5l-1 .5l-1.5 0l-1 0l-1 0l-1.5 0l-1 0l-1.5 0l-1 0l-1 0l-1.5 0l-1 0l-1.5 .5l-1 0l-1 0l-1.5 .5l-1 -.5l-1 2.5l-.5 4.5l-1 6l-1 1l-.5 -7.5l-1 -7.5ZM705 0l.5 -7l1 -7l.5 1l1 5.5l1 4l.5 2.5l1.5 0l1 0l1 .5l1.5 -.5l1 0l1.5 0l1 0l1 .5l1.5 0l1 0l1.5 0l1 .5l1 0l1.5 0l1 0l1.5 0l-1.5 0l-1 0l-1.5 0l-1 .5l-1 0l-1.5 0l-1 0l-1.5 0l-1 .5l-1 0l-1.5 0l-1 0l-1.5 0l-1 0l-1 0l-1.5 0l-.5 2.5l-1 4.5l-1 6l-.5 1l-1 -7.5l-.5 -7.5ZM732 0l1 -7l.5 -7l1 1l.5 5.5l1 4l1 2.5l1 0l1 0l1.5 0l1 .5l1.5 0l1 0l1 -.5l1.5 .5l1 0l1.5 0l1 0l1 0l1.5 .5l1 -.5l1.5 0l1 .5l-1 .5l-1.5 0l-1 -.5l-1.5 .5l-1 0l-1 0l-1.5 0l-1 0l-1.5 .5l-1 -.5l-1 .5l-1.5 -.5l-1 .5l-1.5 0l-1 0l-1 0l-1 2.5l-1 4.5l-.5 6l-1 1l-.5 -7.5l-1 -7.5ZM759 0l1 -7l1 -7l.5 1l1 5.5l.5 4l1 2.5l1 0l1.5 0l1 .5l1.5 -.5l1 .5l1 -.5l1.5 .5l1 0l1.5 -.5l1 .5l1 0l1.5 0l1 .5l1.5 -.5l1 0l1 .5l-1 .5l-1 0l-1.5 -.5l-1 .5l-1.5 0l-1 0l-1 .5l-1.5 -.5l-1 0l-1.5 .5l-1 0l-1 0l-1.5 0l-1 0l-1.5 0l-1 0l-1 2.5l-.5 4.5l-1 6l-.5 1l-1 -7.5l-1 -7.5ZM786.5 0l.5 -7l1 -7l1 1l.5 5.5l1 4l.5 2.5l1.5 0l1 0l1.5 0l1 .5l1 -.5l1.5 .5l1 -.5l1.5 .5l1 0l1 0l1.5 0l1 0l1.5 0l1 0l1 0l1.5 .5l-1.5 .5l-1 0l-1 0l-1.5 0l-1 0l-1.5 0l-1 0l-1 0l-1.5 .5l-1 0l-1.5 0l-1 0l-1 0l-1.5 0l-1 0l-1.5 .5l-.5 2l-1 4.5l-.5 6l-1 1l-1 -7.5l-.5 -7.5ZM813.5 0l1 -7l.5 -7l1 1l1 5.5l.5 4l1 2.5l1 0l1.5 0l1 .5l1 0l1.5 0l1 0l1.5 -.5l1 0l1 .5l1.5 0l1 0l1.5 0l1 0l1 .5l1.5 0l1 0l-1 0l-1.5 0l-1 .5l-1 0l-1.5 0l-1 0l-1.5 0l-1 .5l-1 0l-1.5 -.5l-1 .5l-1.5 -.5l-1 .5l-1 0l-1.5 0l-1 0l-1 2.5l-.5 4.5l-1 6l-1 1l-.5 -7.5l-1 -7.5ZM841 0l.5 -7l1 -7l.5 1l1 5.5l1 4l.5 2.5l1.5 0l1 0l1 0l1.5 0l1 0l1.5 0l1 0l1 .5l1.5 0l1 0l1.5 0l1 0l1 0l1.5 .5l1 -.5l1.5 .5l-1.5 .5l-1 -.5l-1.5 .5l-1 0l-1 0l-1.5 0l-1 0l-1.5 0l-1 .5l-1 0l-1.5 0l-1 0l-1.5 0l-1 0l-1 0l-1.5 0l-.5 2.5l-1 4.5l-1 6l-.5 1l-1 -7.5l-.5 -7.5ZM868 0l1 -7l.5 -7l1 1l.5 5.5l1 4l1 2.5l1 0l1 0l1.5 0l1 0l1.5 0l1 0l1 .5l1.5 0l1 0l1.5 0l1 0l1 0l1.5 0l1 0l1.5 0l1 .5l-1 .5l-1.5 0l-1 0l-1.5 0l-1 0l-1 0l-1.5 0l-1 0l-1.5 0l-1 .5l-1 0l-1.5 0l-1 0l-1.5 0l-1 0l-1 0l-1 2.5l-1 4.5l-.5 6l-1 1l-.5 -7.5l-1 -7.5ZM895 0l1 -7l1 -7l.5 1l1 5.5l.5 4l1 2.5l1 0l1.5 0l1 .5l1.5 -.5l1 0l1 .5l1.5 -.5l1 .5l1.5 0l1 0l1 0l1.5 0l1 0l1.5 .5l1 -.5l1 .5l-1 .5l-1 -.5l-1.5 .5l-1 0l-1.5 0l-1 0l-1 .5l-1.5 -.5l-1 .5l-1.5 0l-1 0l-1 0l-1.5 0l-1 0l-1.5 0l-1 0l-1 2.5l-.5 4.5l-1 6l-.5 1l-1 -7.5l-1 -7.5ZM922.5 0l.5 -7l1 -7l1 1l.5 5.5l1 4l.5 2.5l1.5 0l1 0l1.5 0l1 0l1 0l1.5 0l1 0l1.5 .5l1 0l1 0l1.5 0l1 0l1.5 .5l1 -.5l1 .5l1.5 0l-1.5 0l-1 .5l-1 -.5l-1.5 .5l-1 0l-1.5 0l-1 .5l-1 -.5l-1.5 .5l-1 0l-1.5 0l-1 0l-1 0l-1.5 0l-1 0l-1.5 0l-.5 2.5l-1 4.5l-.5 6l-1 1l-1 -7.5l-.5 -7.5ZM949.5 0l1 -7l.5 -7l1 1l1 5.5l.5 4l1 2.5l1 0l1.5 0l1 0l1 0l1.5 0l1 .5l1.5 0l1 0l1 0l1.5 0l1 0l1.5 0l1 0l1 0l1.5 .5l1 0l-1 .5l-1.5 0l-1 0l-1 0l-1.5 0l-1 0l-1.5 0l-1 0l-1 0l-1.5 0l-1 .5l-1.5 0l-1 0l-1 0l-1.5 0l-1 0l-1 2.5l-.5 4.5l-1 6l-1 1l-.5 -7.5l-1 -7.5ZM977 0l.5 -7l1 -7l.5 1l1 5.5l1 4l.5 2.5l1.5 0l1 0l1 0l1.5 0l1 0l1.5 .5l1 -.5l1 .5l1.5 0l1 0l1.5 0l1 0l1 0l1.5 0l1 .5l1.5 0l-1.5 0l-1 .5l-1.5 0l-1 0l-1 0l-1.5 0l-1 0l-1.5 0l-1 .5l-1 0l-1.5 0l-1 0l-1.5 0l-1 0l-1 0l-1.5 0l-.5 2.5l-1 4.5l-1 6l-.5 1l-1 -7.5l-.5 -7.5ZM1004 0l1 -7l.5 -7l1 1l.5 5.5l1 4l1 2.5l1 0l1 0l1.5 0l1 .5l1.5 -.5l1 .5l1 0l1.5 0l1 0l1.5 0l1 0l1 0l1.5 0l1 0l1.5 .5l1 0l-1 0l-1.5 .5l-1 0l-1.5 0l-1 0l-1 0l-1.5 0l-1 0l-1.5 0l-1 0l-1 .5l-1.5 -.5l-1 .5l-1.5 0l-1 .5l-1 -.5l-1 2.5l-1 4.5l-.5 6l-1 1l-.5 -7.5l-1 -7.5ZM1031 0l1 -7l1 -7l.5 1l1 5.5l.5 4l1 2.5l1 0l1.5 0l1 0l1.5 0l1 0l1 0l1.5 0l1 .5l1.5 0l1 0l1 0l1.5 0l1 0l1.5 0l1 .5l1 0l-1 0l-1 .5l-1.5 0l-1 0l-1.5 0l-1 0l-1 0l-1.5 0l-1 .5l-1.5 0l-1 0l-1 0l-1.5 0l-1 0l-1.5 .5l-1 0l-1 2l-.5 4.5l-1 6l-.5 1l-1 -7.5l-1 -7.5ZM1058.5 0l.5 -7l1 -7l1 1l.5 5.5l1 4l.5 2.5l1.5 0l1 0l1.5 0l1 0l1 0l1.5 .5l1 -.5l1.5 .5l1 -.5l1 .5l1.5 0l1 .5l1.5 -.5l1 .5l1 0l1.5 0l-1.5 0l-1 0l-1 .5l-1.5 -.5l-1 .5l-1.5 0l-1 .5l-1 0l-1.5 0l-1 -.5l-1.5 .5l-1 0l-1 0l-1.5 0l-1 0l-1.5 0l-.5 2.5l-1 4.5l-.5 6l-1 1l-1 -7.5l-.5 -7.5ZM1085.5 0l1 -7l.5 -7l1 1l1 5.5l.5 4l1 2.5l1 0l1.5 0l1 0l1 .5l1.5 -.5l1 0l1.5 0l1 .5l1 0l1.5 0l1 0l1.5 .5l1 -.5l1 0l1.5 0l1 .5l-1 .5l-1.5 0l-1 0l-1 0l-1.5 0l-1 0l-1.5 0l-1 0l-1 .5l-1.5 0l-1 0l-1.5 0l-1 0l-1 0l-1.5 .5l-1 -.5l-1 2.5l-.5 4.5l-1 6l-1 1l-.5 -7.5l-1 -7.5ZM1113 0l.5 -7l1 -7l.5 1l1 5.5l1 4l.5 2.5l1.5 0l1 0l1 0l1.5 0l1 .5l1.5 -.5l1 0l1 .5l1.5 0l1 0l1.5 0l1 0l1 .5l1.5 0l1 0l1.5 0l-1.5 0l-1 0l-1.5 0l-1 .5l-1 0l-1.5 0l-1 0l-1.5 0l-1 .5l-1 0l-1.5 0l-1 0l-1.5 0l-1 0l-1 0l-1.5 0l-.5 2.5l-1 4.5l-1 6l-.5 1l-1 -7.5l-.5 -7.5ZM1140 0l1 -7l.5 -7l1 1l.5 5.5l1 4l1 2.5l1 0l1 0l1.5 0l1 0l1.5 .5l1 0l1 0l1.5 0l1 0l1.5 0l1 0l1 0l1.5 0l1 0l1.5 .5l1 0l-1 0l-1.5 .5l-1 0l-1.5 0l-1 0l-1 0l-1.5 0l-1 0l-1.5 0l-1 0l-1 0l-1.5 .5l-1 0l-1.5 0l-1 0l-1 0l-1 2.5l-1 4.5l-.5 6l-1 1l-.5 -7.5l-1 -7.5ZM1167 0l1 -7l1 -7l.5 1l1 5.5l.5 4l1 2.5l1 0l1.5 0l1 0l1.5 0l1 0l1 0l1.5 0l1 .5l1.5 0l1 0l1 0l1.5 0l1 0l1.5 .5l1 0l1 0l-1 0l-1 0l-1.5 .5l-1 0l-1.5 0l-1 0l-1 .5l-1.5 -.5l-1 .5l-1.5 0l-1 0l-1 0l-1.5 0l-1 0l-1.5 0l-1 .5l-1 2l-.5 4.5l-1 6l-.5 1l-1 -7.5l-1 -7.5ZM1194.5 0l.5 -7l1 -7l1 1l.5 5.5l1 4l.5 2.5l1.5 0l1 0l1.5 0l1 .5l1 -.5l1.5 0l1 0l1.5 .5l1 0l1 0l1.5 0l1 0l1.5 0l1 .5l1 -.5l1.5 .5l-1.5 .5l-1 -.5l-1 .5l-1.5 0l-1 0l-1.5 0l-1 0l-1 0l-1.5 .5l-1 0l-1.5 0l-1 -.5l-1 .5l-1.5 0l-1 0l-1.5 0l-.5 2.5l-1 4.5l-.5 6l-1 1l-1 -7.5l-.5 -7.5ZM1221.5 0l1 -7l.5 -7l1 1l1 5.5l.5 4l1 2l1 .5l1.5 0l1 0l1 0l1.5 .5l1 0l1.5 0l1 0l1 0l1.5 0l1 0l1.5 .5l1 -.5l1 .5l1.5 0l1 0l-1 0l-1.5 0l-1 .5l-1 -.5l-1.5 .5l-1 0l-1.5 0l-1 0l-1 0l-1.5 0l-1 .5l-1.5 0l-1 0l-1 0l-1.5 0l-1 .5l-1 2l-.5 4.5l-1 6l-1 1l-.5 -7.5l-1 -7.5ZM1249 0l.5 -7l1 -7l.5 1l1 5.5l1 4l.5 2.5l1.5 0l1 0l1 0l1.5 0l1 0l1.5 0l1 .5l1 0l1.5 0l1 0l1.5 0l1 0l1 .5l1.5 -.5l1 0l1.5 .5l-1.5 .5l-1 0l-1.5 -.5l-1 .5l-1 0l-1.5 0l-1 .5l-1.5 0l-1 0l-1 0l-1.5 0l-1 0l-1.5 0l-1 0l-1 0l-1.5 0l-.5 2.5l-1 4.5l-1 6l-.5 1l-1 -7.5l-.5 -7.5ZM1276 0l1 -7l.5 -7l1 1l.5 5.5l1 4l1 2.5l1 0l1 0l1.5 0l1 0l1.5 0l1 .5l1 0l1.5 0l1 0l1.5 0l1 0l1 0l1.5 0l1 0l1.5 0l1 .5l-1 .5l-1.5 0l-1 0l-1.5 0l-1 0l-1 0l-1.5 .5l-1 -.5l-1.5 0l-1 0l-1 .5l-1.5 0l-1 0l-1.5 0l-1 0l-1 0l-1 2.5l-1 4.5l-.5 6l-1 1l-.5 -7.5l-1 -7.5ZM1303 0l1 -7l1 -7l.5 1l1 5.5l.5 4l1 2.5l1 0l1.5 0l1 0l1.5 .5l1 -.5l1 0l1.5 .5l1 0l1.5 0l1 0l1 0l1.5 0l1 0l1.5 0l1 0l1 .5l-1 .5l-1 0l-1.5 0l-1 0l-1.5 0l-1 0l-1 0l-1.5 0l-1 .5l-1.5 0l-1 0l-1 -.5l-1.5 .5l-1 0l-1.5 0l-1 0l-1 2.5l-.5 4.5l-1 6l-.5 1l-1 -7.5l-1 -7.5ZM1330.5 0l.5 -7l1 -7l1 1l.5 5.5l1 4l.5 2.5l1.5 0l1 0l1.5 0l1 .5l1 0l1.5 -.5l1 .5l1.5 0l1 -.5l1 .5l1.5 0l1 0l1.5 0l1 0l1 0l1.5 .5l-1.5 .5l-1 0l-1 0l-1.5 0l-1 0l-1.5 0l-1 .5l-1 0l-1.5 -.5l-1 .5l-1.5 0l-1 -.5l-1 .5l-1.5 0l-1 0l-1.5 0l-.5 2.5l-1 4.5l-.5 6l-1 1l-1 -7.5l-.5 -7.5ZM1357.5 0l1 -7l.5 -7l1 1l1 5.5l.5 4l1 2.5l1 0l1.5 0l1 0l1 0l1.5 .5l1 -.5l1.5 .5l1 0l1 0l1.5 0l1 0l1.5 .5l-1.5 .5l-1 0l-1.5 0l-1 0l-1 0l-1.5 .5l-1 0l-1.5 0l-1 0l-1 0l-1.5 0l-1 0l-1 2.5l-.5 4.5l-1 6l-1 1l-.5 -7.5l-1 -7.5Z"/></defs><path d="M2 22.3H990M2 60.3H990" stroke="#000" stroke-width="1.2"/><g fill="#5a0a18" stroke="#000" stroke-width="0.9" stroke-linejoin="round"><use href="#w1" transform="translate(-392 22.3)"/><use href="#w1" transform="translate(-392 60.3)"/></g></svg>
<div class="t" style="left:394px;top:245px;padding:3.5px 4px 1px 2.5px;height:17px;background:rgba(204,21,55,0.82);font-size:12px;letter-spacing:-0.3px;word-spacing:1px;font-weight:bold;color:#f4e8ec">003 - <span style="letter-spacing:-0.600px">SD</span></div>
<div style="left:17px;top:324px;width:40px;height:81px;background:#cc1537"></div>
<svg style="left:18.2px;top:325.2px;" width="21" height="17" viewBox="0 0 21 17"><path d="M0.7 9.7H3.2L3.9 8L4.9 11.5L6.2 5.9L7.7 13.9L9.8 2.9L11.2 12.1L12.9 7L14 11.1L15.1 9L16 9.7H17.8" stroke="#fff" stroke-width="1.8" fill="none" stroke-linejoin="round" stroke-linecap="round"/></svg>
<div class="t" style="left:33px;top:329px;width:20px;text-align:right;font-size:9.5px;color:#7a0a1e">3</div>
<div style="left:63px;top:326px;width:45px;height:17px;background:linear-gradient(#606366,#484b4e);border:1px solid #141618;border-radius:3.5px"></div>
<div style="left:85px;top:327px;width:1px;height:15px;background:#0e0f10"></div>
<svg style="left:64px;top:327px;" width="43" height="15" viewBox="0 0 43 15"><g fill="#000"><rect x="6.9" y="4.1" width="8" height="2"/><rect x="6.9" y="4.1" width="2.2" height="7.8"/><rect x="9.9" y="5" width="2.1" height="6.9"/><rect x="12.8" y="4.1" width="2.1" height="7.8"/><rect x="28" y="4.1" width="8" height="2"/><rect x="28" y="4.1" width="2.3" height="5.5"/><rect x="28" y="7.9" width="8" height="1.7"/><rect x="33.7" y="7.9" width="2.3" height="4"/><rect x="28" y="10.1" width="8" height="1.8"/></g></svg>
<div class="t" style="left:111.5px;top:328.3px;font-size:14px;font-weight:bold;color:#ffffff;letter-spacing:-0.5px;word-spacing:1.5px">004 - <span style="letter-spacing:-1.450px">PERC</span></div>
<div style="left:112px;top:347px;width:46px;height:15px;background:#4b4e52;border-radius:3px"></div>
<div style="left:162px;top:347px;width:49px;height:15px;background:#4b4e52;border-radius:3px"></div>
<div style="left:215px;top:347px;width:46px;height:15px;background:#4b4e52;border-radius:3px"></div>
<svg style="left:112px;top:347px;" width="150" height="15" viewBox="0 0 150 15"><circle cx="11" cy="7.5" r="4" fill="#000"/><path d="M33 5.5h2l3-2.5v9l-3-2.5h-2z" fill="#000"/><path d="M58 9.5 C57 3,64 3,64 6 L58 9 C58 12,62 12.5,64 11" stroke="#000" stroke-width="1.5" fill="none"/><circle cx="81" cy="7.5" r="2.6" stroke="#000" stroke-width="1.5" fill="none"/><circle cx="85" cy="7.5" r="2.6" stroke="#000" stroke-width="1.5" fill="none"/><path d="M109 11.5V4h4.5a2 2 0 0 1 0 4h-4.5M112 8l3 3.5" stroke="#000" stroke-width="2" fill="none"/><path d="M134.5 4v7.5h7V4M138 4v7" stroke="#000" stroke-width="2" fill="none"/></svg>
<div style="left:64px;top:366px;width:34px;height:34px;border:1px solid #2b2e31;border-radius:3px"></div>
<div style="left:17px;top:405px;width:364px;height:1px;background:#5b5e61"></div>
<div style="left:371px;top:366px;width:3px;height:12px;background:#151515"></div>
<div style="left:375px;top:366px;width:3px;height:12px;background:#151515"></div>
<div style="left:371px;top:378px;width:3px;height:26px;background:linear-gradient(#2ae8d0,#1ed8f2 40%)"></div>
<div style="left:375px;top:378px;width:3px;height:26px;background:linear-gradient(#2ae8d0,#1ed8f2 40%)"></div>
<div style="left:383px;top:405px;width:9px;height:1px;background:#3a3e42"></div>
<div style="left:392px;top:405px;width:1000px;height:1px;background:#4a535c"></div>
<div style="left:392px;top:325px;width:1000px;height:79px;background:#6e0618"></div>
<div style="left:393px;top:326px;width:1000px;height:77px;background:#ff3c62"></div>
<div style="left:394px;top:327px;width:1000px;height:75px;background:#cc1537"></div>
<div style="left:421.22px;top:327px;width:1px;height:75px;background:rgba(60,0,10,0.5)"></div>
<div style="left:450.44px;top:327px;width:1px;height:75px;background:rgba(60,0,10,0.5)"></div>
<div style="left:479.66px;top:327px;width:1px;height:75px;background:rgba(60,0,10,0.5)"></div>
<div style="left:508.88px;top:327px;width:1px;height:75px;background:rgba(60,0,10,0.5)"></div>
<div style="left:538.10px;top:327px;width:1px;height:75px;background:rgba(60,0,10,0.5)"></div>
<div style="left:567.32px;top:327px;width:1px;height:75px;background:rgba(60,0,10,0.5)"></div>
<div style="left:596.54px;top:327px;width:1px;height:75px;background:rgba(60,0,10,0.5)"></div>
<div style="left:625.76px;top:327px;width:1px;height:75px;background:rgba(60,0,10,0.5)"></div>
<div style="left:654.98px;top:327px;width:1px;height:75px;background:rgba(60,0,10,0.5)"></div>
<div style="left:684.20px;top:327px;width:1px;height:75px;background:rgba(60,0,10,0.5)"></div>
<div style="left:713.42px;top:327px;width:1px;height:75px;background:rgba(60,0,10,0.5)"></div>
<div style="left:742.64px;top:327px;width:1px;height:75px;background:rgba(60,0,10,0.5)"></div>
<div style="left:771.86px;top:327px;width:1px;height:75px;background:rgba(60,0,10,0.5)"></div>
<div style="left:801.08px;top:327px;width:1px;height:75px;background:rgba(60,0,10,0.5)"></div>
<div style="left:830.30px;top:327px;width:1px;height:75px;background:rgba(60,0,10,0.5)"></div>
<div style="left:859.52px;top:327px;width:1px;height:75px;background:rgba(60,0,10,0.5)"></div>
<div style="left:888.74px;top:327px;width:1px;height:75px;background:rgba(60,0,10,0.5)"></div>
<div style="left:917.96px;top:327px;width:1px;height:75px;background:rgba(60,0,10,0.5)"></div>
<div style="left:947.18px;top:327px;width:1px;height:75px;background:rgba(60,0,10,0.5)"></div>
<div style="left:976.40px;top:327px;width:1px;height:75px;background:rgba(60,0,10,0.5)"></div>
<div style="left:1005.62px;top:327px;width:1px;height:75px;background:rgba(60,0,10,0.5)"></div>
<div style="left:1034.84px;top:327px;width:1px;height:75px;background:rgba(60,0,10,0.5)"></div>
<div style="left:1064.06px;top:327px;width:1px;height:75px;background:rgba(60,0,10,0.5)"></div>
<div style="left:1093.28px;top:327px;width:1px;height:75px;background:rgba(60,0,10,0.5)"></div>
<div style="left:1122.50px;top:327px;width:1px;height:75px;background:rgba(60,0,10,0.5)"></div>
<div style="left:1151.72px;top:327px;width:1px;height:75px;background:rgba(60,0,10,0.5)"></div>
<div style="left:1180.94px;top:327px;width:1px;height:75px;background:rgba(60,0,10,0.5)"></div>
<div style="left:1210.16px;top:327px;width:1px;height:75px;background:rgba(60,0,10,0.5)"></div>
<div style="left:1239.38px;top:327px;width:1px;height:75px;background:rgba(60,0,10,0.5)"></div>
<div style="left:1268.60px;top:327px;width:1px;height:75px;background:rgba(60,0,10,0.5)"></div>
<div style="left:1297.82px;top:327px;width:1px;height:75px;background:rgba(60,0,10,0.5)"></div>
<div style="left:1327.04px;top:327px;width:1px;height:75px;background:rgba(60,0,10,0.5)"></div>
<div style="left:1356.26px;top:327px;width:1px;height:75px;background:rgba(60,0,10,0.5)"></div>
<svg style="left:392px;top:324px;" width="982" height="82" viewBox="0 0 982 82"><defs><path id="w2" d="M514.5 0l.5 -4.5l1 -4.5l1 .5l.5 3.5l1 3l.5 1.5l1.5 0l1 0l1.5 0l1 0l1 .5l1.5 -.5l1 .5l1.5 0l-1.5 0l-1 .5l-1.5 -.5l-1 .5l-1 0l-1.5 0l-1 0l-1.5 .5l-.5 1.5l-1 3l-.5 3.5l-1 .5l-1 -4.5l-.5 -5ZM541.5 0l1 -4.5l.5 -4.5l1 .5l1 3.5l.5 3l1 1l1 0l1.5 .5l1 0l1 0l1.5 0l1 0l1.5 .5l1 0l-1 0l-1.5 .5l-1 0l-1.5 0l-1 0l-1 0l-1.5 .5l-1 0l-1 1.5l-.5 3l-1 3.5l-1 .5l-.5 -4.5l-1 -5ZM569 0l.5 -4.5l1 -4.5l.5 .5l1 3.5l1 3l.5 1.5l1.5 -.5l1 .5l1 0l1.5 0l1 0l1.5 0l1 .5l1 0l-1 0l-1 .5l-1.5 0l-1 0l-1.5 0l-1 0l-1 .5l-1.5 -.5l-.5 2l-1 3l-1 3.5l-.5 .5l-1 -4.5l-.5 -5ZM596 0l1 -4.5l.5 -4.5l1 .5l.5 3.5l1 3l1 1l1 .5l1 0l1.5 0l1 0l1.5 0l1 0l1 .5l1.5 0l-1.5 0l-1 .5l-1 0l-1.5 0l-1 0l-1.5 0l-1 0l-1 .5l-1 1.5l-1 3l-.5 3.5l-1 .5l-.5 -4.5l-1 -5ZM623 0l1 -4.5l1 -4.5l.5 .5l1 3.5l.5 3l1 1.5l1 0l1.5 0l1 0l1.5 0l1 0l1 .5l1.5 -.5l1 .5l-1 .5l-1.5 -.5l-1 .5l-1 0l-1.5 0l-1 0l-1.5 0l-1 0l-1 2l-.5 3l-1 3.5l-.5 .5l-1 -4.5l-1 -5ZM650.5 0l.5 -4.5l1 -4.5l1 .5l.5 3.5l1 3l.5 1.5l1.5 0l1 0l1.5 0l1 0l1 0l1.5 0l1 .5l1.5 0l-1.5 0l-1 .5l-1.5 0l-1 0l-1 0l-1.5 0l-1 0l-1.5 0l-.5 2l-1 3l-.5 3.5l-1 .5l-1 -4.5l-.5 -5ZM677.5 0l1 -4.5l.5 -4.5l1 .5l1 3.5l.5 3l1 1.5l1 0l1.5 0l1 0l1 0l1.5 0l1 .5l1.5 0l1 0l-1 0l-1.5 0l-1 .5l-1.5 0l-1 0l-1 .5l-1.5 -.5l-1 0l-1 2l-.5 3l-1 3.5l-1 .5l-.5 -4.5l-1 -5ZM705 0l.5 -4.5l1 -4.5l.5 .5l1 3.5l1 3l.5 1.5l1.5 0l1 0l1 0l1.5 0l1 0l1.5 0l1 .5l1 0l-1 0l-1 .5l-1.5 0l-1 0l-1.5 0l-1 0l-1 .5l-1.5 -.5l-.5 2l-1 3l-1 3.5l-.5 .5l-1 -4.5l-.5 -5ZM732 0l1 -4.5l.5 -4.5l1 .5l.5 3.5l1 3l1 1.5l1 -.5l1 .5l1.5 0l1 0l1.5 0l1 0l1 .5l1.5 0l-1.5 .5l-1 0l-1 0l-1.5 0l-1 0l-1.5 0l-1 .5l-1 -.5l-1 2l-1 3l-.5 3.5l-1 .5l-.5 -4.5l-1 -5ZM759 0l1 -4.5l1 -4.5l.5 .5l1 3.5l.5 3l1 1.5l1 0l1.5 0l1 0l1.5 0l1 0l1 .5l1.5 0l1 0l-1 0l-1.5 0l-1 .5l-1 0l-1.5 0l-1 0l-1.5 0l-1 .5l-1 1.5l-.5 3l-1 3.5l-.5 .5l-1 -4.5l-1 -5ZM786.5 0l.5 -4.5l1 -4.5l1 .5l.5 3.5l1 3l.5 1l1.5 .5l1 0l1.5 0l1 0l1 0l1.5 0l1 .5l1.5 0l-1.5 0l-1 .5l-1.5 0l-1 0l-1 0l-1.5 0l-1 0l-1.5 .5l-.5 1.5l-1 3l-.5 3.5l-1 .5l-1 -4.5l-.5 -5ZM813.5 0l1 -4.5l.5 -4.5l1 .5l1 3.5l.5 3l1 1.5l1 0l1.5 0l1 0l1 0l1.5 .5l1 0l1.5 -.5l1 .5l-1 .5l-1.5 -.5l-1 0l-1.5 .5l-1 0l-1 0l-1.5 0l-1 .5l-1 1.5l-.5 3l-1 3.5l-1 .5l-.5 -4.5l-1 -5ZM841 0l.5 -4.5l1 -4.5l.5 .5l1 3.5l1 3l.5 1.5l1.5 0l1 0l1 0l1.5 0l1 .5l1.5 0l1 0l1 0l-1 0l-1 0l-1.5 0l-1 .5l-1.5 0l-1 0l-1 0l-1.5 0l-.5 2l-1 3l-1 3.5l-.5 .5l-1 -4.5l-.5 -5ZM868 0l1 -4.5l.5 -4.5l1 .5l.5 3.5l1 3l1 1.5l1 0l1 0l1.5 0l1 0l1.5 0l1 0l1 .5l1.5 0l-1.5 0l-1 .5l-1 0l-1.5 0l-1 0l-1.5 0l-1 0l-1 0l-1 2l-1 3l-.5 3.5l-1 .5l-.5 -4.5l-1 -5ZM895 0l1 -4.5l1 -4.5l.5 .5l1 3.5l.5 3l1 1.5l1 0l1.5 0l1 0l1.5 .5l1 -.5l1 0l1.5 .5l1 0l-1 0l-1.5 .5l-1 0l-1 0l-1.5 0l-1 0l-1.5 0l-1 0l-1 2l-.5 3l-1 3.5l-.5 .5l-1 -4.5l-1 -5ZM922.5 0l.5 -4.5l1 -4.5l1 .5l.5 3.5l1 3l.5 1.5l1.5 0l1 0l1.5 0l1 0l1 .5l1.5 0l1 0l1.5 0l-1.5 0l-1 .5l-1.5 0l-1 0l-1 0l-1.5 0l-1 0l-1.5 0l-.5 2l-1 3l-.5 3.5l-1 .5l-1 -4.5l-.5 -5ZM949.5 0l1 -4.5l.5 -4.5l1 .5l1 3.5l.5 3l1 1l1 .5l1.5 0l1 0l1 .5l1.5 -.5l1 0l1.5 .5l1 0l-1 0l-1.5 .5l-1 0l-1.5 -.5l-1 .5l-1 0l-1.5 .5l-1 0l-1 1.5l-.5 3l-1 3.5l-1 .5l-.5 -4.5l-1 -5ZM977 0l.5 -4.5l1 -4.5l.5 .5l1 3.5l1 3l.5 1.5l1.5 0l1 0l1 0l1.5 0l1 0l1.5 0l1 .5l1 0l-1 0l-1 .5l-1.5 0l-1 0l-1.5 0l-1 0l-1 0l-1.5 0l-.5 2l-1 3l-1 3.5l-.5 .5l-1 -4.5l-.5 -5ZM1004 0l1 -4.5l.5 -4.5l1 .5l.5 3.5l1 3l1 1.5l1 0l1 0l1.5 0l1 0l1.5 0l1 0l1 0l1.5 .5l-1.5 .5l-1 0l-1 0l-1.5 0l-1 0l-1.5 0l-1 0l-1 0l-1 2l-1 3l-.5 3.5l-1 .5l-.5 -4.5l-1 -5ZM1031 0l1 -4.5l1 -4.5l.5 .5l1 3.5l.5 3l1 1.5l1 0l1.5 0l1 0l1.5 0l1 0l1 0l1.5 .5l1 0l-1 0l-1.5 .5l-1 0l-1 0l-1.5 0l-1 0l-1.5 0l-1 0l-1 2l-.5 3l-1 3.5l-.5 .5l-1 -4.5l-1 -5ZM1058.5 0l.5 -4.5l1 -4.5l1 .5l.5 3.5l1 3l.5 1.5l1.5 0l1 0l1.5 0l1 0l1 .5l1.5 -.5l1 0l1.5 .5l-1.5 .5l-1 0l-1.5 -.5l-1 .5l-1 0l-1.5 0l-1 0l-1.5 0l-.5 2l-1 3l-.5 3.5l-1 .5l-1 -4.5l-.5 -5ZM1085.5 0l1 -4.5l.5 -4.5l1 .5l1 3.5l.5 3l1 1.5l1 0l1.5 0l1 0l1 0l1.5 0l1 0l1.5 0l1 .5l-1 .5l-1.5 0l-1 0l-1.5 0l-1 0l-1 0l-1.5 0l-1 0l-1 2l-.5 3l-1 3.5l-1 .5l-.5 -4.5l-1 -5ZM1113 0l.5 -4.5l1 -4.5l.5 .5l1 3.5l1 3l.5 1l1.5 .5l1 0l1 0l1.5 0l1 0l1.5 .5l1 0l1 0l-1 0l-1 0l-1.5 .5l-1 0l-1.5 0l-1 0l-1 0l-1.5 .5l-.5 1.5l-1 3l-1 3.5l-.5 .5l-1 -4.5l-.5 -5ZM1140 0l1 -4.5l.5 -4.5l1 .5l.5 3.5l1 3l1 1.5l1 0l1 0l1.5 0l1 0l1.5 0l1 .5l1 0l1.5 0l-1.5 0l-1 0l-1 .5l-1.5 0l-1 0l-1.5 0l-1 0l-1 0l-1 2l-1 3l-.5 3.5l-1 .5l-.5 -4.5l-1 -5ZM1167 0l1 -4.5l1 -4.5l.5 .5l1 3.5l.5 3l1 1.5l1 0l1.5 0l1 0l1.5 0l1 0l1 0l1.5 .5l1 0l-1 0l-1.5 .5l-1 0l-1 0l-1.5 0l-1 0l-1.5 0l-1 0l-1 2l-.5 3l-1 3.5l-.5 .5l-1 -4.5l-1 -5ZM1194.5 0l.5 -4.5l1 -4.5l1 .5l.5 3.5l1 3l.5 1l1.5 .5l1 0l1.5 0l1 0l1 0l1.5 .5l1 -.5l1.5 .5l-1.5 .5l-1 -.5l-1.5 .5l-1 0l-1 0l-1.5 0l-1 0l-1.5 .5l-.5 1.5l-1 3l-.5 3.5l-1 .5l-1 -4.5l-.5 -5ZM1221.5 0l1 -4.5l.5 -4.5l1 .5l1 3.5l.5 3l1 1.5l1 0l1.5 0l1 0l1 0l1.5 0l1 .5l1.5 0l1 0l-1 0l-1.5 0l-1 .5l-1.5 0l-1 0l-1 0l-1.5 0l-1 0l-1 2l-.5 3l-1 3.5l-1 .5l-.5 -4.5l-1 -5ZM1249 0l.5 -4.5l1 -4.5l.5 .5l1 3.5l1 3l.5 1.5l1.5 -.5l1 .5l1 0l1.5 .5l1 -.5l1.5 0l1 0l1 .5l-1 .5l-1 0l-1.5 0l-1 0l-1.5 0l-1 0l-1 .5l-1.5 -.5l-.5 2l-1 3l-1 3.5l-.5 .5l-1 -4.5l-.5 -5ZM1276 0l1 -4.5l.5 -4.5l1 .5l.5 3.5l1 3l1 1.5l1 -.5l1 .5l1.5 0l1 0l1.5 0l1 0l1 .5l1.5 0l-1.5 0l-1 .5l-1 0l-1.5 0l-1 0l-1.5 .5l-1 0l-1 0l-1 1.5l-1 3l-.5 3.5l-1 .5l-.5 -4.5l-1 -5ZM1303 0l1 -4.5l1 -4.5l.5 .5l1 3.5l.5 3l1 1.5l1 0l1.5 0l1 0l1.5 0l1 .5l1 0l1.5 0l1 0l-1 0l-1.5 0l-1 0l-1 .5l-1.5 0l-1 0l-1.5 0l-1 .5l-1 1.5l-.5 3l-1 3.5l-.5 .5l-1 -4.5l-1 -5ZM1330.5 0l.5 -4.5l1 -4.5l1 .5l.5 3.5l1 3l.5 1l1.5 .5l1 0l1.5 0l1 0l1 0l1.5 0l1 .5l1.5 0l-1.5 0l-1 .5l-1.5 0l-1 0l-1 0l-1.5 .5l-1 -.5l-1.5 .5l-.5 1.5l-1 3l-.5 3.5l-1 .5l-1 -4.5l-.5 -5ZM1357.5 0l1 -4.5l.5 -4.5l1 .5l1 3.5l.5 3l1 1.5l1 0l1.5 0l1 0l1 0l1.5 0l1 0l1.5 .5l1 0l-1 0l-1.5 .5l-1 0l-1.5 0l-1 0l-1 0l-1.5 0l-1 0l-1 2l-.5 3l-1 3.5l-1 .5l-.5 -4.5l-1 -5Z"/></defs><path d="M2 22.3H990M2 60.3H990" stroke="#000" stroke-width="1.2"/><g fill="#5a0a18" stroke="#000" stroke-width="0.9" stroke-linejoin="round"><use href="#w2" transform="translate(-392 22.3)"/><use href="#w2" transform="translate(-392 60.3)"/></g></svg>
<div class="t" style="left:394px;top:327px;padding:3.5px 4px 1px 2.5px;height:17px;background:rgba(204,21,55,0.82);font-size:12px;letter-spacing:-0.3px;word-spacing:1px;font-weight:bold;color:#f4e8ec">004 - <span style="letter-spacing:-1.225px">PERC</span></div>
<div style="left:17px;top:406px;width:40px;height:81px;background:#cc1537"></div>
<svg style="left:18.2px;top:407.2px;" width="21" height="17" viewBox="0 0 21 17"><path d="M0.7 9.7H3.2L3.9 8L4.9 11.5L6.2 5.9L7.7 13.9L9.8 2.9L11.2 12.1L12.9 7L14 11.1L15.1 9L16 9.7H17.8" stroke="#fff" stroke-width="1.8" fill="none" stroke-linejoin="round" stroke-linecap="round"/></svg>
<div class="t" style="left:33px;top:411px;width:20px;text-align:right;font-size:9.5px;color:#7a0a1e">4</div>
<div style="left:63px;top:408px;width:45px;height:17px;background:linear-gradient(#606366,#484b4e);border:1px solid #141618;border-radius:3.5px"></div>
<div style="left:85px;top:409px;width:1px;height:15px;background:#0e0f10"></div>
<svg style="left:64px;top:409px;" width="43" height="15" viewBox="0 0 43 15"><g fill="#000"><rect x="6.9" y="4.1" width="8" height="2"/><rect x="6.9" y="4.1" width="2.2" height="7.8"/><rect x="9.9" y="5" width="2.1" height="6.9"/><rect x="12.8" y="4.1" width="2.1" height="7.8"/><rect x="28" y="4.1" width="8" height="2"/><rect x="28" y="4.1" width="2.3" height="5.5"/><rect x="28" y="7.9" width="8" height="1.7"/><rect x="33.7" y="7.9" width="2.3" height="4"/><rect x="28" y="10.1" width="8" height="1.8"/></g></svg>
<div class="t" style="left:111.5px;top:410.3px;font-size:14px;font-weight:bold;color:#ffffff;letter-spacing:-0.5px;word-spacing:1.5px">005 - <span style="letter-spacing:0.600px">HH</span></div>
<div style="left:112px;top:429px;width:46px;height:15px;background:#4b4e52;border-radius:3px"></div>
<div style="left:162px;top:429px;width:49px;height:15px;background:#4b4e52;border-radius:3px"></div>
<div style="left:215px;top:429px;width:46px;height:15px;background:#4b4e52;border-radius:3px"></div>
<svg style="left:112px;top:429px;" width="150" height="15" viewBox="0 0 150 15"><circle cx="11" cy="7.5" r="4" fill="#000"/><path d="M33 5.5h2l3-2.5v9l-3-2.5h-2z" fill="#000"/><path d="M58 9.5 C57 3,64 3,64 6 L58 9 C58 12,62 12.5,64 11" stroke="#000" stroke-width="1.5" fill="none"/><circle cx="81" cy="7.5" r="2.6" stroke="#000" stroke-width="1.5" fill="none"/><circle cx="85" cy="7.5" r="2.6" stroke="#000" stroke-width="1.5" fill="none"/><path d="M109 11.5V4h4.5a2 2 0 0 1 0 4h-4.5M112 8l3 3.5" stroke="#000" stroke-width="2" fill="none"/><path d="M134.5 4v7.5h7V4M138 4v7" stroke="#000" stroke-width="2" fill="none"/></svg>
<div style="left:64px;top:448px;width:34px;height:34px;border:1px solid #2b2e31;border-radius:3px"></div>
<div style="left:17px;top:487px;width:364px;height:1px;background:#5b5e61"></div>
<div style="left:371px;top:467px;width:3px;height:19px;background:linear-gradient(#2ae8d0,#1ed8f2 40%)"></div>
<div style="left:375px;top:467px;width:3px;height:19px;background:linear-gradient(#2ae8d0,#1ed8f2 40%)"></div>
<div style="left:383px;top:487px;width:9px;height:1px;background:#3a3e42"></div>
<div style="left:392px;top:487px;width:1000px;height:1px;background:#4a535c"></div>
<div style="left:392px;top:407px;width:1000px;height:79px;background:#6e0618"></div>
<div style="left:393px;top:408px;width:1000px;height:77px;background:#ff3c62"></div>
<div style="left:394px;top:409px;width:1000px;height:75px;background:#cc1537"></div>
<div style="left:421.22px;top:409px;width:1px;height:75px;background:rgba(60,0,10,0.5)"></div>
<div style="left:450.44px;top:409px;width:1px;height:75px;background:rgba(60,0,10,0.5)"></div>
<div style="left:479.66px;top:409px;width:1px;height:75px;background:rgba(60,0,10,0.5)"></div>
<div style="left:508.88px;top:409px;width:1px;height:75px;background:rgba(60,0,10,0.5)"></div>
<div style="left:538.10px;top:409px;width:1px;height:75px;background:rgba(60,0,10,0.5)"></div>
<div style="left:567.32px;top:409px;width:1px;height:75px;background:rgba(60,0,10,0.5)"></div>
<div style="left:596.54px;top:409px;width:1px;height:75px;background:rgba(60,0,10,0.5)"></div>
<div style="left:625.76px;top:409px;width:1px;height:75px;background:rgba(60,0,10,0.5)"></div>
<div style="left:654.98px;top:409px;width:1px;height:75px;background:rgba(60,0,10,0.5)"></div>
<div style="left:684.20px;top:409px;width:1px;height:75px;background:rgba(60,0,10,0.5)"></div>
<div style="left:713.42px;top:409px;width:1px;height:75px;background:rgba(60,0,10,0.5)"></div>
<div style="left:742.64px;top:409px;width:1px;height:75px;background:rgba(60,0,10,0.5)"></div>
<div style="left:771.86px;top:409px;width:1px;height:75px;background:rgba(60,0,10,0.5)"></div>
<div style="left:801.08px;top:409px;width:1px;height:75px;background:rgba(60,0,10,0.5)"></div>
<div style="left:830.30px;top:409px;width:1px;height:75px;background:rgba(60,0,10,0.5)"></div>
<div style="left:859.52px;top:409px;width:1px;height:75px;background:rgba(60,0,10,0.5)"></div>
<div style="left:888.74px;top:409px;width:1px;height:75px;background:rgba(60,0,10,0.5)"></div>
<div style="left:917.96px;top:409px;width:1px;height:75px;background:rgba(60,0,10,0.5)"></div>
<div style="left:947.18px;top:409px;width:1px;height:75px;background:rgba(60,0,10,0.5)"></div>
<div style="left:976.40px;top:409px;width:1px;height:75px;background:rgba(60,0,10,0.5)"></div>
<div style="left:1005.62px;top:409px;width:1px;height:75px;background:rgba(60,0,10,0.5)"></div>
<div style="left:1034.84px;top:409px;width:1px;height:75px;background:rgba(60,0,10,0.5)"></div>
<div style="left:1064.06px;top:409px;width:1px;height:75px;background:rgba(60,0,10,0.5)"></div>
<div style="left:1093.28px;top:409px;width:1px;height:75px;background:rgba(60,0,10,0.5)"></div>
<div style="left:1122.50px;top:409px;width:1px;height:75px;background:rgba(60,0,10,0.5)"></div>
<div style="left:1151.72px;top:409px;width:1px;height:75px;background:rgba(60,0,10,0.5)"></div>
<div style="left:1180.94px;top:409px;width:1px;height:75px;background:rgba(60,0,10,0.5)"></div>
<div style="left:1210.16px;top:409px;width:1px;height:75px;background:rgba(60,0,10,0.5)"></div>
<div style="left:1239.38px;top:409px;width:1px;height:75px;background:rgba(60,0,10,0.5)"></div>
<div style="left:1268.60px;top:409px;width:1px;height:75px;background:rgba(60,0,10,0.5)"></div>
<div style="left:1297.82px;top:409px;width:1px;height:75px;background:rgba(60,0,10,0.5)"></div>
<div style="left:1327.04px;top:409px;width:1px;height:75px;background:rgba(60,0,10,0.5)"></div>
<div style="left:1356.26px;top:409px;width:1px;height:75px;background:rgba(60,0,10,0.5)"></div>
<svg style="left:392px;top:406px;" width="982" height="82" viewBox="0 0 982 82"><defs><path id="w3" d="M501.5 -.5l2.5 -2l2 2l2.5 -2l2 2l2.5 -2l2 2l2.5 -2l2 2l2.5 -2l2 2l2.5 -2l2 2l2.5 -2l2 2l2.5 -2l2 2l2.5 -2l2 2l2.5 -2l2 2l2.5 -2l2 2l2.5 -2l2 2l2.5 -2l2 2l2.5 -2l2 2l2.5 -2l2 2l2.5 -2l2 2l2.5 -2l2 2l2.5 -2l2 2l2.5 -2l2 2l2.5 -2l2 2l2.5 -2l2 2l2.5 -2l2 2l2.5 -2l2 2l2.5 -2l2 2l2.5 -2l2 2l2.5 -2l2 2l2.5 -2l2 2l2.5 -2l2 2l2.5 -2l2 2l2.5 -2l2 2l2.5 -2l2 2l2.5 -2l2 2l2.5 -2l2 2l2.5 -2l2 2l2.5 -2l2 2l2.5 -2l2 2l2.5 -2l2 2l2.5 -2l2 2l2.5 -2l2 2l2.5 -2l2 2l2.5 -2l2 2l2.5 -2l2 2l2.5 -2l2 2l2.5 -2l2 2l2.5 -2l2 2l2.5 -2l2 2l2.5 -2l2 2l2.5 -2l2 2l2.5 -2l2 2l2.5 -2l2 2l2.5 -2l2 2l2.5 -2l2 2l2.5 -2l2 2l2.5 -2l2 2l2.5 -2l2 2l2.5 -2l2 2l2.5 -2l2 2l2.5 -2l2 2l2.5 -2l2 2l2.5 -2l2 2l2.5 -2l2 2l2.5 -2l2 2l2.5 -2l2 2l2.5 -2l2 2l2.5 -2l2 2l2.5 -2l2 2l2.5 -2l2 2l2.5 -2l2 2l2.5 -2l2 2l2.5 -2l2 2l2.5 -2l2 2l2.5 -2l2 2l2.5 -2l2 2l2.5 -2l2 2l2.5 -2l2 2l2.5 -2l2 2l2.5 -2l2 2l2.5 -2l2 2l2.5 -2l2 2l2.5 -2l2 2l2.5 -2l2 2l2.5 -2l2 2l2.5 -2l2 2l2.5 -2l2 2l2.5 -2l2 2l2.5 -2l2 2l2.5 -2l2 2l2.5 -2l2 2l2.5 -2l2 2l2.5 -2l2 2l2.5 -2l2 2l2.5 -2l2 2l2.5 -2l2 2l2.5 -2l2 2l2.5 -2l2 2l2.5 -2l2 2l2.5 -2l2 2l2.5 -2l2 2l2.5 -2l2 2l2.5 -2l2 2l2.5 -2l2 2l2.5 -2l2 2l2.5 -2l2 2l2.5 -2l2 2l2.5 -2l2 2l2.5 -2l2 2l2.5 -2l2 2l2.5 -2l2 2l2.5 -2l2 2l2.5 -2l2 2l2.5 -2l2 2l2.5 -2l2 2l2.5 -2l2 2l2.5 -2l2 2l2.5 -2l2 2l2.5 -2l2 2l2.5 -2l2 2l2.5 -2l2 2l2.5 -2l2 2l2.5 -2l2 2l2.5 -2l2 2l2.5 -2l2 2l2.5 -2l2 2l2.5 -2l2 2l2.5 -2l2 2l2.5 -2l2 2l2.5 -2l2 2l2.5 -2l2 2l2.5 -2l2 2l2.5 -2l2 2l2.5 -2l2 2l2.5 -2l2 2l2.5 -2l2 2l2.5 -2l2 2l2.5 -2l2 2l2.5 -2l2 2l2.5 -2l2 2l2.5 -2l2 2l2.5 -2l2 2l2.5 -2l2 2l2.5 -2l2 2l2.5 -2l2 2l2.5 -2l2 2l2.5 -2l2 2l2.5 -2l2 2l2.5 -2l2 2l2.5 -2l2 2l2.5 -2l2 2l2.5 -2l2 2l2.5 -2l2 2l2.5 -2l2 2l2.5 -2l2 2l2.5 -2l2 2l2.5 -2l2 2l2.5 -2l2 2l2.5 -2l2 2l2.5 -2l2 2l2.5 -2l2 2l2.5 -2l2 2l2.5 -2l2 2l2.5 -2l2 2l2.5 -2l2 2l2.5 -2l2 2l2.5 -2l2 2l2.5 -2l2 2l2.5 -2l2 2l2.5 -2l2 2l2.5 -2l2 2l2.5 -2l2 2l2.5 -2l2 2l2.5 -2l2 2l2.5 -2l2 2l2.5 -2l2 2l2.5 -2l2 2l2.5 -2l2 2l2.5 -2l2 2l2.5 -2l2 2l2.5 -2l2 2l2.5 -2l2 2l2.5 -2l2 2l2.5 -2l2 2l2.5 -2l2 2l2.5 -2l2 2l2.5 -2l2 2l2.5 -2l2 2l2.5 -2l2 2l2.5 -2l2 2l2.5 -2l2 2l2.5 -2l2 2l2.5 -2l2 2l2.5 -2l2 2l2.5 -2l2 2l2.5 -2l2 2l2.5 -2l2 2l2.5 -2l0 5.5l-2.5 -2.5l-2 2.5l-2.5 -2.5l-2 2.5l-2.5 -2.5l-2 2.5l-2.5 -2.5l-2 2.5l-2.5 -2.5l-2 2.5l-2.5 -2.5l-2 2.5l-2.5 -2.5l-2 2.5l-2.5 -2.5l-2 2.5l-2.5 -2.5l-2 2.5l-2.5 -2.5l-2 2.5l-2.5 -2.5l-2 2.5l-2.5 -2.5l-2 2.5l-2.5 -2.5l-2 2.5l-2.5 -2.5l-2 2.5l-2.5 -2.5l-2 2.5l-2.5 -2.5l-2 2.5l-2.5 -2.5l-2 2.5l-2.5 -2.5l-2 2.5l-2.5 -2.5l-2 2.5l-2.5 -2.5l-2 2.5l-2.5 -2.5l-2 2.5l-2.5 -2.5l-2 2.5l-2.5 -2.5l-2 2.5l-2.5 -2.5l-2 2.5l-2.5 -2.5l-2 2.5l-2.5 -2.5l-2 2.5l-2.5 -2.5l-2 2.5l-2.5 -2.5l-2 2.5l-2.5 -2.5l-2 2.5l-2.5 -2.5l-2 2.5l-2.5 -2.5l-2 2.5l-2.5 -2.5l-2 2.5l-2.5 -2.5l-2 2.5l-2.5 -2.5l-2 2.5l-2.5 -2.5l-2 2.5l-2.5 -2.5l-2 2.5l-2.5 -2.5l-2 2.5l-2.5 -2.5l-2 2.5l-2.5 -2.5l-2 2.5l-2.5 -2.5l-2 2.5l-2.5 -2.5l-2 2.5l-2.5 -2.5l-2 2.5l-2.5 -2.5l-2 2.5l-2.5 -2.5l-2 2.5l-2.5 -2.5l-2 2.5l-2.5 -2.5l-2 2.5l-2.5 -2.5l-2 2.5l-2.5 -2.5l-2 2.5l-2.5 -2.5l-2 2.5l-2.5 -2.5l-2 2.5l-2.5 -2.5l-2 2.5l-2.5 -2.5l-2 2.5l-2.5 -2.5l-2 2.5l-2.5 -2.5l-2 2.5l-2.5 -2.5l-2 2.5l-2.5 -2.5l-2 2.5l-2.5 -2.5l-2 2.5l-2.5 -2.5l-2 2.5l-2.5 -2.5l-2 2.5l-2.5 -2.5l-2 2.5l-2.5 -2.5l-2 2.5l-2.5 -2.5l-2 2.5l-2.5 -2.5l-2 2.5l-2.5 -2.5l-2 2.5l-2.5 -2.5l-2 2.5l-2.5 -2.5l-2 2.5l-2.5 -2.5l-2 2.5l-2.5 -2.5l-2 2.5l-2.5 -2.5l-2 2.5l-2.5 -2.5l-2 2.5l-2.5 -2.5l-2 2.5l-2.5 -2.5l-2 2.5l-2.5 -2.5l-2 2.5l-2.5 -2.5l-2 2.5l-2.5 -2.5l-2 2.5l-2.5 -2.5l-2 2.5l-2.5 -2.5l-2 2.5l-2.5 -2.5l-2 2.5l-2.5 -2.5l-2 2.5l-2.5 -2.5l-2 2.5l-2.5 -2.5l-2 2.5l-2.5 -2.5l-2 2.5l-2.5 -2.5l-2 2.5l-2.5 -2.5l-2 2.5l-2.5 -2.5l-2 2.5l-2.5 -2.5l-2 2.5l-2.5 -2.5l-2 2.5l-2.5 -2.5l-2 2.5l-2.5 -2.5l-2 2.5l-2.5 -2.5l-2 2.5l-2.5 -2.5l-2 2.5l-2.5 -2.5l-2 2.5l-2.5 -2.5l-2 2.5l-2.5 -2.5l-2 2.5l-2.5 -2.5l-2 2.5l-2.5 -2.5l-2 2.5l-2.5 -2.5l-2 2.5l-2.5 -2.5l-2 2.5l-2.5 -2.5l-2 2.5l-2.5 -2.5l-2 2.5l-2.5 -2.5l-2 2.5l-2.5 -2.5l-2 2.5l-2.5 -2.5l-2 2.5l-2.5 -2.5l-2 2.5l-2.5 -2.5l-2 2.5l-2.5 -2.5l-2 2.5l-2.5 -2.5l-2 2.5l-2.5 -2.5l-2 2.5l-2.5 -2.5l-2 2.5l-2.5 -2.5l-2 2.5l-2.5 -2.5l-2 2.5l-2.5 -2.5l-2 2.5l-2.5 -2.5l-2 2.5l-2.5 -2.5l-2 2.5l-2.5 -2.5l-2 2.5l-2.5 -2.5l-2 2.5l-2.5 -2.5l-2 2.5l-2.5 -2.5l-2 2.5l-2.5 -2.5l-2 2.5l-2.5 -2.5l-2 2.5l-2.5 -2.5l-2 2.5l-2.5 -2.5l-2 2.5l-2.5 -2.5l-2 2.5l-2.5 -2.5l-2 2.5l-2.5 -2.5l-2 2.5l-2.5 -2.5l-2 2.5l-2.5 -2.5l-2 2.5l-2.5 -2.5l-2 2.5l-2.5 -2.5l-2 2.5l-2.5 -2.5l-2 2.5l-2.5 -2.5l-2 2.5l-2.5 -2.5l-2 2.5l-2.5 -2.5l-2 2.5l-2.5 -2.5l-2 2.5l-2.5 -2.5l-2 2.5l-2.5 -2.5l-2 2.5l-2.5 -2.5l-2 2.5l-2.5 -2.5l-2 2.5l-2.5 -2.5l-2 2.5l-2.5 -2.5l-2 2.5l-2.5 -2.5l-2 2.5l-2.5 -2.5l-2 2.5l-2.5 -2.5l-2 2.5l-2.5 -2.5l-2 2.5l-2.5 -2.5l-2 2.5l-2.5 -2.5l-2 2.5l-2.5 -2.5l-2 2.5l-2.5 -2.5l-2 2.5l-2.5 -2.5l-2 2.5l-2.5 -2.5l-2 2.5l-2.5 -2.5l-2 2.5l-2.5 -2.5l-2 2.5l-2.5 -2.5l-2 2.5l-2.5 -2.5l-2 2.5l-2.5 -2.5l-2 2.5l-2.5 -2.5l-2 2.5l-2.5 -2.5l-2 2.5l-2.5 -2.5l-2 2.5l-2.5 -2.5l-2 2.5l-2.5 -2.5l-2 2.5l-2.5 -2.5l-2 2.5l-2.5 -2.5l-2 2.5l-2.5 -2.5l-2 2.5l-2.5 -2.5l-2 2.5l-2.5 -2.5l-2 2.5l-2.5 -2.5l-2 2.5l-2.5 -2.5l-2 2.5l-2.5 -2.5l-2 2.5l-2.5 -2.5l-2 2.5l-2.5 -2.5l-2 2.5l-2.5 -2.5l-2 2.5l-2.5 -2.5l-2 2.5l-2.5 -2.5l-2 2.5l-2.5 -2.5l-2 2.5l-2.5 -2.5l-2 2.5l-2.5 -2.5l-2 2.5l-2.5 -2.5l-2 2.5l-2.5 -2.5l-2 2.5l-2.5 -2.5l-2 2.5l-2.5 -2.5l-2 2.5l-2.5 -2.5l-2 2.5l-2.5 -2.5l-2 2.5l-2.5 -2.5l-2 2.5l-2.5 -2.5l-2 2.5l-2.5 -2.5l-2 2.5l-2.5 -2.5l-2 2.5l-2.5 -2.5l-2 2.5l-2.5 -2.5l-2 2.5l-2.5 -2.5l-2 2.5l-2.5 -2.5l-2 2.5l-2.5 -2.5l-2 2.5l-2.5 -2.5l-2 2.5l-2.5 -2.5l-2 2.5l-2.5 -2.5l-2 2.5l-2.5 -2.5Z"/></defs><path d="M2 22.3H990M2 60.3H990" stroke="#000" stroke-width="1.2"/><g fill="#5a0a18" stroke="#000" stroke-width="0.9" stroke-linejoin="round"><use href="#w3" transform="translate(-392 22.3)"/><use href="#w3" transform="translate(-392 60.3)"/></g></svg>
<div class="t" style="left:394px;top:409px;padding:3.5px 4px 1px 2.5px;height:17px;background:rgba(204,21,55,0.82);font-size:12px;letter-spacing:-0.3px;word-spacing:1px;font-weight:bold;color:#f4e8ec">005 - <span style="letter-spacing:0.900px">HH</span></div>
<div style="left:17px;top:488px;width:40px;height:81px;background:#cc1537"></div>
<svg style="left:18.2px;top:489.2px;" width="21" height="17" viewBox="0 0 21 17"><path d="M0.7 9.7H3.2L3.9 8L4.9 11.5L6.2 5.9L7.7 13.9L9.8 2.9L11.2 12.1L12.9 7L14 11.1L15.1 9L16 9.7H17.8" stroke="#fff" stroke-width="1.8" fill="none" stroke-linejoin="round" stroke-linecap="round"/></svg>
<div class="t" style="left:33px;top:493px;width:20px;text-align:right;font-size:9.5px;color:#7a0a1e">5</div>
<div style="left:63px;top:490px;width:45px;height:17px;background:linear-gradient(#606366,#484b4e);border:1px solid #141618;border-radius:3.5px"></div>
<div style="left:85px;top:491px;width:1px;height:15px;background:#0e0f10"></div>
<svg style="left:64px;top:491px;" width="43" height="15" viewBox="0 0 43 15"><g fill="#000"><rect x="6.9" y="4.1" width="8" height="2"/><rect x="6.9" y="4.1" width="2.2" height="7.8"/><rect x="9.9" y="5" width="2.1" height="6.9"/><rect x="12.8" y="4.1" width="2.1" height="7.8"/><rect x="28" y="4.1" width="8" height="2"/><rect x="28" y="4.1" width="2.3" height="5.5"/><rect x="28" y="7.9" width="8" height="1.7"/><rect x="33.7" y="7.9" width="2.3" height="4"/><rect x="28" y="10.1" width="8" height="1.8"/></g></svg>
<div class="t" style="left:111.5px;top:492.3px;font-size:14px;font-weight:bold;color:#ffffff;letter-spacing:-0.5px;word-spacing:1.5px">006 - <span style="letter-spacing:-1.060px">CRASH</span></div>
<div style="left:112px;top:511px;width:46px;height:15px;background:#4b4e52;border-radius:3px"></div>
<div style="left:162px;top:511px;width:49px;height:15px;background:#4b4e52;border-radius:3px"></div>
<div style="left:215px;top:511px;width:46px;height:15px;background:#4b4e52;border-radius:3px"></div>
<svg style="left:112px;top:511px;" width="150" height="15" viewBox="0 0 150 15"><circle cx="11" cy="7.5" r="4" fill="#000"/><path d="M33 5.5h2l3-2.5v9l-3-2.5h-2z" fill="#000"/><path d="M58 9.5 C57 3,64 3,64 6 L58 9 C58 12,62 12.5,64 11" stroke="#000" stroke-width="1.5" fill="none"/><circle cx="81" cy="7.5" r="2.6" stroke="#000" stroke-width="1.5" fill="none"/><circle cx="85" cy="7.5" r="2.6" stroke="#000" stroke-width="1.5" fill="none"/><path d="M109 11.5V4h4.5a2 2 0 0 1 0 4h-4.5M112 8l3 3.5" stroke="#000" stroke-width="2" fill="none"/><path d="M134.5 4v7.5h7V4M138 4v7" stroke="#000" stroke-width="2" fill="none"/></svg>
<div style="left:64px;top:530px;width:34px;height:34px;border:1px solid #2b2e31;border-radius:3px"></div>
<div style="left:17px;top:569px;width:364px;height:1px;background:#5b5e61"></div>
<div style="left:383px;top:569px;width:9px;height:1px;background:#3a3e42"></div>
<div style="left:392px;top:569px;width:1000px;height:1px;background:#4a535c"></div>
<div style="left:392px;top:489px;width:1000px;height:79px;background:#6e0618"></div>
<div style="left:393px;top:490px;width:1000px;height:77px;background:#ff3c62"></div>
<div style="left:394px;top:491px;width:1000px;height:75px;background:#cc1537"></div>
<div style="left:421.22px;top:491px;width:1px;height:75px;background:rgba(60,0,10,0.5)"></div>
<div style="left:450.44px;top:491px;width:1px;height:75px;background:rgba(60,0,10,0.5)"></div>
<div style="left:479.66px;top:491px;width:1px;height:75px;background:rgba(60,0,10,0.5)"></div>
<div style="left:508.88px;top:491px;width:1px;height:75px;background:rgba(60,0,10,0.5)"></div>
<div style="left:538.10px;top:491px;width:1px;height:75px;background:rgba(60,0,10,0.5)"></div>
<div style="left:567.32px;top:491px;width:1px;height:75px;background:rgba(60,0,10,0.5)"></div>
<div style="left:596.54px;top:491px;width:1px;height:75px;background:rgba(60,0,10,0.5)"></div>
<div style="left:625.76px;top:491px;width:1px;height:75px;background:rgba(60,0,10,0.5)"></div>
<div style="left:654.98px;top:491px;width:1px;height:75px;background:rgba(60,0,10,0.5)"></div>
<div style="left:684.20px;top:491px;width:1px;height:75px;background:rgba(60,0,10,0.5)"></div>
<div style="left:713.42px;top:491px;width:1px;height:75px;background:rgba(60,0,10,0.5)"></div>
<div style="left:742.64px;top:491px;width:1px;height:75px;background:rgba(60,0,10,0.5)"></div>
<div style="left:771.86px;top:491px;width:1px;height:75px;background:rgba(60,0,10,0.5)"></div>
<div style="left:801.08px;top:491px;width:1px;height:75px;background:rgba(60,0,10,0.5)"></div>
<div style="left:830.30px;top:491px;width:1px;height:75px;background:rgba(60,0,10,0.5)"></div>
<div style="left:859.52px;top:491px;width:1px;height:75px;background:rgba(60,0,10,0.5)"></div>
<div style="left:888.74px;top:491px;width:1px;height:75px;background:rgba(60,0,10,0.5)"></div>
<div style="left:917.96px;top:491px;width:1px;height:75px;background:rgba(60,0,10,0.5)"></div>
<div style="left:947.18px;top:491px;width:1px;height:75px;background:rgba(60,0,10,0.5)"></div>
<div style="left:976.40px;top:491px;width:1px;height:75px;background:rgba(60,0,10,0.5)"></div>
<div style="left:1005.62px;top:491px;width:1px;height:75px;background:rgba(60,0,10,0.5)"></div>
<div style="left:1034.84px;top:491px;width:1px;height:75px;background:rgba(60,0,10,0.5)"></div>
<div style="left:1064.06px;top:491px;width:1px;height:75px;background:rgba(60,0,10,0.5)"></div>
<div style="left:1093.28px;top:491px;width:1px;height:75px;background:rgba(60,0,10,0.5)"></div>
<div style="left:1122.50px;top:491px;width:1px;height:75px;background:rgba(60,0,10,0.5)"></div>
<div style="left:1151.72px;top:491px;width:1px;height:75px;background:rgba(60,0,10,0.5)"></div>
<div style="left:1180.94px;top:491px;width:1px;height:75px;background:rgba(60,0,10,0.5)"></div>
<div style="left:1210.16px;top:491px;width:1px;height:75px;background:rgba(60,0,10,0.5)"></div>
<div style="left:1239.38px;top:491px;width:1px;height:75px;background:rgba(60,0,10,0.5)"></div>
<div style="left:1268.60px;top:491px;width:1px;height:75px;background:rgba(60,0,10,0.5)"></div>
<div style="left:1297.82px;top:491px;width:1px;height:75px;background:rgba(60,0,10,0.5)"></div>
<div style="left:1327.04px;top:491px;width:1px;height:75px;background:rgba(60,0,10,0.5)"></div>
<div style="left:1356.26px;top:491px;width:1px;height:75px;background:rgba(60,0,10,0.5)"></div>
<svg style="left:392px;top:488px;" width="982" height="82" viewBox="0 0 982 82"><defs><path id="w4" d="M664.5 0l1 -2.5l1.5 -1l2.5 -.5l1 0l1.5 0l1.5 0l1.5 .5l1.5 0l1.5 0l1.5 -.5l1.5 0l1.5 0l1.5 0l1.5 .5l1.5 .5l1.5 0l1.5 .5l1.5 .5l1.5 0l1.5 .5l1.5 .5l1.5 0l1.5 .5l1.5 0l1.5 .5l.5 0l-.5 .5l-1.5 0l-1.5 .5l-1.5 0l-1.5 .5l-1.5 0l-1.5 .5l-1.5 .5l-1.5 0l-1.5 .5l-1.5 .5l-1.5 .5l-1.5 .5l-1.5 0l-1.5 -.5l-1.5 .5l-1.5 -.5l-1.5 0l-1.5 0l-1.5 .5l-1.5 0l-1.5 -.5l-1 0l-2.5 0l-1.5 -1.5l-1 -2.5ZM828.5 0l1 -2.5l1.5 -1l2.5 -.5l1 0l1.5 .5l1.5 0l1.5 -.5l1.5 0l1.5 0l1.5 0l1.5 0l1.5 0l1.5 0l1.5 .5l1.5 .5l1.5 0l1.5 .5l1.5 0l1.5 .5l1.5 .5l1.5 .5l1.5 0l1.5 .5l1.5 0l1.5 .5l.5 0l-.5 0l-1.5 .5l-1.5 0l-1.5 .5l-1.5 .5l-1.5 0l-1.5 .5l-1.5 .5l-1.5 .5l-1.5 0l-1.5 .5l-1.5 .5l-1.5 0l-1.5 0l-1.5 0l-1.5 0l-1.5 .5l-1.5 0l-1.5 -.5l-1.5 0l-1.5 0l-1.5 .5l-1 -.5l-2.5 0l-1.5 -1.5l-1 -2.5ZM991 0l1 -2.5l1.5 -1l2.5 -.5l1 .5l1.5 -.5l1.5 .5l1.5 0l1.5 0l1.5 -.5l1.5 0l1.5 0l1.5 0l1.5 0l1.5 .5l1.5 .5l1.5 .5l1.5 0l1.5 .5l1.5 0l1.5 .5l1.5 .5l1.5 0l1.5 .5l1.5 0l1.5 0l.5 .5l-.5 .5l-1.5 0l-1.5 .5l-1.5 0l-1.5 .5l-1.5 0l-1.5 .5l-1.5 .5l-1.5 0l-1.5 .5l-1.5 .5l-1.5 .5l-1.5 .5l-1.5 0l-1.5 0l-1.5 -.5l-1.5 0l-1.5 0l-1.5 0l-1.5 0l-1.5 .5l-1.5 -.5l-1 0l-2.5 0l-1.5 -1.5l-1 -2.5ZM1154.5 0l1 -2.5l1.5 -1l2.5 -.5l1 0l1.5 .5l1.5 -.5l1.5 0l1.5 0l1.5 0l1.5 0l1.5 .5l1.5 0l1.5 -.5l1.5 .5l1.5 0l1.5 .5l1.5 .5l1.5 .5l1.5 0l1.5 .5l1.5 .5l1.5 0l1.5 .5l1.5 0l1.5 .5l.5 0l-.5 0l-1.5 .5l-1.5 .5l-1.5 0l-1.5 0l-1.5 .5l-1.5 .5l-1.5 .5l-1.5 0l-1.5 .5l-1.5 .5l-1.5 0l-1.5 .5l-1.5 0l-1.5 0l-1.5 .5l-1.5 -.5l-1.5 .5l-1.5 -.5l-1.5 .5l-1.5 -.5l-1.5 .5l-1 -.5l-2.5 0l-1.5 -1.5l-1 -2.5ZM1263.5 0l1 -2.5l1.5 -1l2.5 -.5l1 0l1.5 0l1.5 0l1.5 0l1.5 .5l1.5 -.5l1.5 .5l1.5 0l1.5 -.5l1.5 0l1.5 .5l1.5 .5l1.5 0l1.5 .5l1.5 .5l1.5 0l1.5 .5l1.5 .5l1.5 0l1.5 .5l1.5 0l1.5 .5l.5 0l-.5 0l-1.5 .5l-1.5 .5l-1.5 0l-1.5 0l-1.5 1l-1.5 0l-1.5 .5l-1.5 0l-1.5 .5l-1.5 .5l-1.5 .5l-1.5 .5l-1.5 0l-1.5 -.5l-1.5 0l-1.5 0l-1.5 0l-1.5 .5l-1.5 0l-1.5 0l-1.5 -.5l-1 0l-2.5 0l-1.5 -1.5l-1 -2.5ZM1317.5 0l1 -2.5l1.5 -1l2.5 -.5l1 .5l1.5 0l1.5 -.5l1.5 0l1.5 0l1.5 .5l1.5 0l1.5 -.5l1.5 0l1.5 0l1.5 .5l1.5 .5l1.5 0l1.5 .5l1.5 .5l1.5 .5l1.5 0l1.5 .5l1.5 0l1.5 .5l1.5 0l1.5 0l.5 .5l-.5 .5l-1.5 0l-1.5 0l-1.5 .5l-1.5 .5l-1.5 0l-1.5 .5l-1.5 0l-1.5 .5l-1.5 .5l-1.5 .5l-1.5 .5l-1.5 0l-1.5 .5l-1.5 -.5l-1.5 0l-1.5 0l-1.5 .5l-1.5 0l-1.5 -.5l-1.5 0l-1.5 0l-1 0l-2.5 0l-1.5 -1.5l-1 -2.5Z"/></defs><path d="M2 22.3H990M2 60.3H990" stroke="#000" stroke-width="1.2"/><g fill="#5a0a18" stroke="#000" stroke-width="0.9" stroke-linejoin="round"><use href="#w4" transform="translate(-392 22.3)"/><use href="#w4" transform="translate(-392 60.3)"/></g></svg>
<div class="t" style="left:394px;top:491px;padding:3.5px 4px 1px 2.5px;height:17px;background:rgba(204,21,55,0.82);font-size:12px;letter-spacing:-0.3px;word-spacing:1px;font-weight:bold;color:#f4e8ec">006 - <span style="letter-spacing:-1.040px">CRASH</span></div>
<div style="left:17px;top:570px;width:40px;height:81px;background:#0628dd"></div>
<svg style="left:18.2px;top:571.2px;" width="21" height="17" viewBox="0 0 21 17"><path d="M0.7 9.7H3.2L3.9 8L4.9 11.5L6.2 5.9L7.7 13.9L9.8 2.9L11.2 12.1L12.9 7L14 11.1L15.1 9L16 9.7H17.8" stroke="#fff" stroke-width="1.8" fill="none" stroke-linejoin="round" stroke-linecap="round"/></svg>
<div class="t" style="left:33px;top:575px;width:20px;text-align:right;font-size:9.5px;color:#06206e">6</div>
<div style="left:63px;top:572px;width:45px;height:17px;background:linear-gradient(#606366,#484b4e);border:1px solid #141618;border-radius:3.5px"></div>
<div style="left:85px;top:573px;width:1px;height:15px;background:#0e0f10"></div>
<svg style="left:64px;top:573px;" width="43" height="15" viewBox="0 0 43 15"><g fill="#000"><rect x="6.9" y="4.1" width="8" height="2"/><rect x="6.9" y="4.1" width="2.2" height="7.8"/><rect x="9.9" y="5" width="2.1" height="6.9"/><rect x="12.8" y="4.1" width="2.1" height="7.8"/><rect x="28" y="4.1" width="8" height="2"/><rect x="28" y="4.1" width="2.3" height="5.5"/><rect x="28" y="7.9" width="8" height="1.7"/><rect x="33.7" y="7.9" width="2.3" height="4"/><rect x="28" y="10.1" width="8" height="1.8"/></g></svg>
<div class="t" style="left:111.5px;top:574.3px;font-size:14px;font-weight:bold;color:#ffffff;letter-spacing:-0.5px;word-spacing:1.5px">007 - <span style="letter-spacing:-1.250px">BASS</span></div>
<div style="left:112px;top:593px;width:46px;height:15px;background:#4b4e52;border-radius:3px"></div>
<div style="left:162px;top:593px;width:49px;height:15px;background:#4b4e52;border-radius:3px"></div>
<div style="left:215px;top:593px;width:46px;height:15px;background:#4b4e52;border-radius:3px"></div>
<svg style="left:112px;top:593px;" width="150" height="15" viewBox="0 0 150 15"><circle cx="11" cy="7.5" r="4" fill="#000"/><path d="M33 5.5h2l3-2.5v9l-3-2.5h-2z" fill="#000"/><path d="M58 9.5 C57 3,64 3,64 6 L58 9 C58 12,62 12.5,64 11" stroke="#000" stroke-width="1.5" fill="none"/><circle cx="81" cy="7.5" r="2.6" stroke="#000" stroke-width="1.5" fill="none"/><circle cx="85" cy="7.5" r="2.6" stroke="#000" stroke-width="1.5" fill="none"/><path d="M109 11.5V4h4.5a2 2 0 0 1 0 4h-4.5M112 8l3 3.5" stroke="#000" stroke-width="2" fill="none"/><path d="M134.5 4v7.5h7V4M138 4v7" stroke="#000" stroke-width="2" fill="none"/></svg>
<div style="left:64px;top:612px;width:34px;height:34px;border:1px solid #2b2e31;border-radius:3px"></div>
<div style="left:17px;top:651px;width:364px;height:1px;background:#5b5e61"></div>
<div style="left:371px;top:616px;width:3px;height:6px;background:#151515"></div>
<div style="left:375px;top:616px;width:3px;height:5px;background:#151515"></div>
<div style="left:371px;top:622px;width:3px;height:28px;background:linear-gradient(#2ae8d0,#1ed8f2 40%)"></div>
<div style="left:375px;top:621px;width:3px;height:29px;background:linear-gradient(#2ae8d0,#1ed8f2 40%)"></div>
<div style="left:383px;top:651px;width:9px;height:1px;background:#3a3e42"></div>
<div style="left:392px;top:651px;width:1000px;height:1px;background:#4a535c"></div>
<div style="left:392px;top:571px;width:1000px;height:79px;background:#06206e"></div>
<div style="left:393px;top:572px;width:1000px;height:77px;background:#4a78ff"></div>
<div style="left:394px;top:573px;width:1000px;height:75px;background:#0628dd"></div>
<div style="left:421.22px;top:573px;width:1px;height:75px;background:rgba(0,10,60,0.5)"></div>
<div style="left:450.44px;top:573px;width:1px;height:75px;background:rgba(0,10,60,0.5)"></div>
<div style="left:479.66px;top:573px;width:1px;height:75px;background:rgba(0,10,60,0.5)"></div>
<div style="left:508.88px;top:573px;width:1px;height:75px;background:rgba(0,10,60,0.5)"></div>
<div style="left:538.10px;top:573px;width:1px;height:75px;background:rgba(0,10,60,0.5)"></div>
<div style="left:567.32px;top:573px;width:1px;height:75px;background:rgba(0,10,60,0.5)"></div>
<div style="left:596.54px;top:573px;width:1px;height:75px;background:rgba(0,10,60,0.5)"></div>
<div style="left:625.76px;top:573px;width:1px;height:75px;background:rgba(0,10,60,0.5)"></div>
<div style="left:654.98px;top:573px;width:1px;height:75px;background:rgba(0,10,60,0.5)"></div>
<div style="left:684.20px;top:573px;width:1px;height:75px;background:rgba(0,10,60,0.5)"></div>
<div style="left:713.42px;top:573px;width:1px;height:75px;background:rgba(0,10,60,0.5)"></div>
<div style="left:742.64px;top:573px;width:1px;height:75px;background:rgba(0,10,60,0.5)"></div>
<div style="left:771.86px;top:573px;width:1px;height:75px;background:rgba(0,10,60,0.5)"></div>
<div style="left:801.08px;top:573px;width:1px;height:75px;background:rgba(0,10,60,0.5)"></div>
<div style="left:830.30px;top:573px;width:1px;height:75px;background:rgba(0,10,60,0.5)"></div>
<div style="left:859.52px;top:573px;width:1px;height:75px;background:rgba(0,10,60,0.5)"></div>
<div style="left:888.74px;top:573px;width:1px;height:75px;background:rgba(0,10,60,0.5)"></div>
<div style="left:917.96px;top:573px;width:1px;height:75px;background:rgba(0,10,60,0.5)"></div>
<div style="left:947.18px;top:573px;width:1px;height:75px;background:rgba(0,10,60,0.5)"></div>
<div style="left:976.40px;top:573px;width:1px;height:75px;background:rgba(0,10,60,0.5)"></div>
<div style="left:1005.62px;top:573px;width:1px;height:75px;background:rgba(0,10,60,0.5)"></div>
<div style="left:1034.84px;top:573px;width:1px;height:75px;background:rgba(0,10,60,0.5)"></div>
<div style="left:1064.06px;top:573px;width:1px;height:75px;background:rgba(0,10,60,0.5)"></div>
<div style="left:1093.28px;top:573px;width:1px;height:75px;background:rgba(0,10,60,0.5)"></div>
<div style="left:1122.50px;top:573px;width:1px;height:75px;background:rgba(0,10,60,0.5)"></div>
<div style="left:1151.72px;top:573px;width:1px;height:75px;background:rgba(0,10,60,0.5)"></div>
<div style="left:1180.94px;top:573px;width:1px;height:75px;background:rgba(0,10,60,0.5)"></div>
<div style="left:1210.16px;top:573px;width:1px;height:75px;background:rgba(0,10,60,0.5)"></div>
<div style="left:1239.38px;top:573px;width:1px;height:75px;background:rgba(0,10,60,0.5)"></div>
<div style="left:1268.60px;top:573px;width:1px;height:75px;background:rgba(0,10,60,0.5)"></div>
<div style="left:1297.82px;top:573px;width:1px;height:75px;background:rgba(0,10,60,0.5)"></div>
<div style="left:1327.04px;top:573px;width:1px;height:75px;background:rgba(0,10,60,0.5)"></div>
<div style="left:1356.26px;top:573px;width:1px;height:75px;background:rgba(0,10,60,0.5)"></div>
<svg style="left:392px;top:570px;" width="982" height="82" viewBox="0 0 982 82"><defs><path id="w5" d="M501 0l.5 -2l1 -3l1 0l1 -.5l1 -.5l1 0l1 0l1 0l1 0l1 0l1 1l1 -.5l1 1l1 .5l1 1.5l1 -2.5l1 -.5l1 -1l1 0l1 -.5l1 0l1 0l1 -.5l1 .5l1 0l1 .5l1 .5l1 .5l1 0l1 1l1 2l1 -2.5l1 -.5l1 -.5l1 -.5l1 0l1 0l1 0l1 0l1 .5l1 .5l1 0l1 1l1 .5l1 1.5l1 -2.5l1 -.5l1 -.5l1 -.5l1 -.5l1 0l1 .5l1 .5l1 0l1 .5l1 0l1 .5l1 1.5l1 1l1 -2.5l1 -.5l1 -1l1 0l1 0l1 0l1 -.5l1 -.5l1 .5l1 .5l1 0l1 1l1 0l1 0l1 1l1 2.5l1 -3.5l1 -.5l1 -.5l1 -.5l1 .5l1 0l1 .5l1 .5l1 0l1 1l1 2l1 -2l1 -.5l1 -.5l1 -.5l1 0l1 0l1 .5l1 .5l1 -.5l1 1l1 -.5l1 1l1 .5l1 1.5l1 -3l1 -.5l1 -1l1 0l1 -.5l1 0l1 .5l1 .5l1 0l1 .5l1 0l1 .5l1 .5l1 2l1 -2l1 -1l1 -.5l1 0l1 -.5l1 -.5l1 0l1 .5l1 0l1 0l1 .5l1 0l1 .5l1 .5l1 .5l1 2l1 -2l1 -.5l1 0l1 -.5l1 -.5l1 0l1 0l1 0l1 -.5l1 .5l1 -.5l1 0l1 0l1 0l1 .5l1 0l1 0l1 .5l1 0l1 0l1 0l1 0l1 .5l1 .5l1 .5l1 0l1 1.5l1 -2.5l1 -1l1 -.5l1 0l1 0l1 0l1 .5l1 .5l1 0l1 .5l1 2.5l1 -2.5l1 0l1 -.5l1 -.5l1 -.5l1 .5l1 0l1 0l1 0l1 .5l1 .5l1 0l1 1l1 2l1 -2.5l1 0l1 -.5l1 0l1 -.5l1 .5l1 -.5l1 -.5l1 .5l1 0l1 -.5l1 0l1 0l1 .5l1 0l1 0l1 0l1 .5l1 -.5l1 .5l1 0l1 0l1 .5l1 0l1 .5l1 .5l1 1.5l1 -3l1 -.5l1 -.5l1 -.5l1 -.5l1 0l1 .5l1 .5l1 0l1 0l1 .5l1 .5l1 1l1 1.5l1 -3l1 -.5l1 -.5l1 -.5l1 0l1 -.5l1 1l1 0l1 0l1 .5l1 .5l1 .5l1 1l1 1.5l1 -3l1 0l1 -1l1 -.5l1 0l1 0l1 .5l1 .5l1 0l1 0l1 0l1 1l1 1l1 2l1 -3l1 -1l1 .5l1 -.5l1 0l1 0l1 .5l1 0l1 .5l1 .5l1 2l1 -2l1 -.5l1 -1l1 0l1 -.5l1 0l1 .5l1 0l1 .5l1 0l1 .5l1 .5l1 1l1 1l1 -2.5l1 -.5l1 -.5l1 0l1 -.5l1 0l1 .5l1 0l1 0l1 .5l1 .5l1 0l1 1l1 1.5l1 -2.5l1 -.5l1 0l1 -.5l1 0l1 -.5l1 .5l1 .5l1 0l1 0l1 .5l1 .5l1 1l1 1l1 -2l1 -1l1 0l1 -.5l1 0l1 0l1 .5l1 0l1 0l1 .5l1 0l1 .5l1 .5l1 2l1 -3l1 -1l1 0l1 -.5l1 0l1 -.5l1 0l1 0l1 .5l1 0l1 0l1 .5l1 .5l1 .5l1 1l1 1.5l1 -2l1 -1l1 0l1 -.5l1 -.5l1 0l1 .5l1 0l1 .5l1 0l1 0l1 .5l1 1.5l1 1l1 -2l1 -.5l1 0l1 -.5l1 -.5l1 .5l1 0l1 0l1 0l1 .5l1 0l1 1l1 .5l1 1l1 -2.5l1 0l1 -.5l1 -.5l1 -.5l1 0l1 .5l1 0l1 0l1 .5l1 .5l1 .5l1 .5l1 1.5l1 -2l1 -.5l1 -.5l1 0l1 -.5l1 0l1 .5l1 0l1 0l1 .5l1 .5l1 0l1 1l1 1l1 -1.5l1 -.5l1 -.5l1 -.5l1 0l1 -.5l1 0l1 0l1 .5l1 0l1 0l1 .5l1 .5l1 0l1 1l1 1.5l1 -2.5l1 -.5l1 -.5l1 0l1 -.5l1 0l1 .5l1 0l1 .5l1 -.5l1 1l1 .5l1 .5l1 1.5l1 -3l1 -1l1 -.5l1 0l1 0l1 .5l1 0l1 .5l1 .5l1 .5l1 2l1 -2.5l1 -.5l1 -.5l1 0l1 0l1 -.5l1 .5l1 0l1 0l1 1l1 0l1 .5l1 1l1 1l1 -3l1 -1l1 0l1 -.5l1 0l1 .5l1 0l1 0l1 1l1 1l1 2l1 -2l1 -.5l1 -1l1 0l1 -.5l1 0l1 0l1 0l1 .5l1 0l1 .5l1 0l1 .5l1 .5l1 0l1 2l1 -2.5l1 -.5l1 -.5l1 0l1 -.5l1 .5l1 0l1 .5l1 0l1 1l1 2l1 -2.5l1 -.5l1 -.5l1 0l1 -.5l1 0l1 1l1 -.5l1 0l1 .5l1 .5l1 .5l1 .5l1 2l1 -3.5l1 -.5l1 -.5l1 -.5l1 0l1 .5l1 0l1 0l1 1l1 .5l1 3l1 -2.5l1 -1l1 0l1 -.5l1 0l1 0l1 .5l1 .5l1 0l1 .5l1 2l1 -1.5l1 -1l1 0l1 -.5l1 0l1 0l1 0l1 -.5l1 0l1 0l1 -.5l1 .5l1 0l1 .5l1 0l1 -.5l1 .5l1 .5l1 0l1 0l1 0l1 .5l1 0l1 .5l1 -.5l1 1l1 1l1 -3l1 -.5l1 -.5l1 0l1 -.5l1 0l1 .5l1 0l1 0l1 .5l1 .5l1 .5l1 .5l1 2.5l1 -3.5l1 -.5l1 0l1 -.5l1 -.5l1 0l1 .5l1 -.5l1 1l1 0l1 .5l1 .5l1 .5l1 2.5l1 -2.5l1 -.5l1 -.5l1 0l1 0l1 -.5l1 0l1 0l1 -.5l1 0l1 0l1 0l1 0l1 .5l1 0l1 0l1 0l1 .5l1 -.5l1 .5l1 0l1 .5l1 0l1 0l1 1l1 .5l1 1l1 -2l1 .5l1 -1l1 0l1 0l1 -.5l1 -.5l1 .5l1 -.5l1 0l1 0l1 .5l1 -.5l1 .5l1 0l1 0l1 0l1 .5l1 0l1 0l1 0l1 0l1 0l1 .5l1 .5l1 .5l1 1l1 -2.5l1 -1l1 -.5l1 -.5l1 0l1 0l1 0l1 .5l1 0l1 .5l1 .5l1 0l1 1.5l1 2l1 -3l1 0l1 -1l1 0l1 -.5l1 .5l1 -.5l1 0l1 .5l1 0l1 0l1 .5l1 .5l1 .5l1 .5l1 2l1 -3l1 -1l1 0l1 -.5l1 -.5l1 .5l1 0l1 0l1 0l1 .5l1 .5l1 .5l1 1l1 1.5l1 -2l1 -1l1 -.5l1 -.5l1 0l1 0l1 -.5l1 0l1 0l1 0l1 -.5l1 .5l1 -.5l1 1l1 0l1 0l1 0l1 0l1 .5l1 0l1 .5l1 0l1 .5l1 0l1 .5l1 .5l1 1.5l1 -2l1 -.5l1 0l1 -1l1 0l1 -.5l1 .5l1 -.5l1 0l1 0l1 -.5l1 .5l1 -.5l1 1l1 0l1 0l1 0l1 0l1 .5l1 0l1 0l1 0l1 0l1 1l1 .5l1 .5l1 1l1 -2l1 -.5l1 -.5l1 0l1 -.5l1 0l1 0l1 0l1 .5l1 0l1 0l1 .5l1 .5l1 0l1 1l1 1.5l1 -3l1 -1l1 -.5l1 .5l1 -.5l1 -.5l1 .5l1 0l1 .5l1 .5l1 .5l1 0l1 1l1 2l1 -3.5l1 -.5l1 -.5l1 -.5l1 -.5l1 1l1 0l1 .5l1 0l1 1.5l1 2.5l1 -3l1 -.5l1 -1l1 0l1 -.5l1 0l1 .5l1 .5l1 0l1 .5l1 0l1 .5l1 1l1 1.5l1 -2l1 -.5l1 -1l1 0l1 0l1 -.5l1 0l1 -.5l1 .5l1 -.5l1 0l1 -.5l1 0l1 1l1 -.5l1 .5l1 0l1 0l1 0l1 0l1 1l1 0l1 0l1 0l1 .5l1 1l1 2l1 -2.5l1 0l1 -.5l1 -.5l1 0l1 -.5l1 0l1 0l1 0l1 0l1 0l1 -.5l1 0l1 .5l1 0l1 .5l1 -.5l1 .5l1 0l1 0l1 0l1 0l1 .5l1 .5l1 0l1 1l1 1.5l1 -3l1 -.5l1 -.5l1 -.5l1 -.5l1 .5l1 0l1 .5l1 .5l1 -.5l1 1l1 0l1 1l1 1.5l1 -2l1 0l1 -.5l1 -.5l1 0l1 0l1 -.5l1 0l1 .5l1 -1l1 .5l1 0l1 0l1 .5l1 0l1 0l1 0l1 0l1 0l1 0l1 .5l1 0l1 0l1 .5l1 .5l1 .5l0 7.5l-1 .5l-1 .5l-1 .5l-1 -.5l-1 .5l-1 .5l-1 -.5l-1 .5l-1 -.5l-1 .5l-1 0l-1 0l-1 .5l-1 0l-1 0l-1 .5l-1 -1l-1 .5l-1 -.5l-1 0l-1 0l-1 0l-1 -1l-1 0l-1 -.5l-1 -1.5l-1 1l-1 1.5l-1 0l-1 1l-1 -.5l-1 .5l-1 .5l-1 .5l-1 0l-1 -.5l-1 -.5l-1 -.5l-1 -.5l-1 -3l-1 1.5l-1 1l-1 0l-1 .5l-1 .5l-1 0l-1 0l-1 0l-1 0l-1 .5l-1 -.5l-1 0l-1 .5l-1 .5l-1 .5l-1 -1l-1 0l-1 0l-1 0l-1 0l-1 0l-1 -.5l-1 -.5l-1 0l-1 -.5l-1 0l-1 -2.5l-1 2l-1 1l-1 0l-1 .5l-1 0l-1 0l-1 1l-1 0l-1 0l-1 0l-1 0l-1 .5l-1 -.5l-1 1l-1 0l-1 -.5l-1 0l-1 -.5l-1 .5l-1 -.5l-1 0l-1 -.5l-1 0l-1 0l-1 -1l-1 -.5l-1 -2.5l-1 2l-1 .5l-1 .5l-1 .5l-1 .5l-1 0l-1 .5l-1 .5l-1 0l-1 -.5l-1 0l-1 -1l-1 -.5l-1 -3l-1 2.5l-1 1l-1 .5l-1 .5l-1 0l-1 1l-1 -.5l-1 -.5l-1 -.5l-1 -.5l-1 -3.5l-1 2l-1 .5l-1 .5l-1 .5l-1 .5l-1 .5l-1 0l-1 .5l-1 -.5l-1 -.5l-1 .5l-1 -.5l-1 -1l-1 -3l-1 1.5l-1 .5l-1 .5l-1 .5l-1 .5l-1 0l-1 0l-1 .5l-1 0l-1 0l-1 0l-1 -.5l-1 0l-1 -.5l-1 -.5l-1 -2l-1 1l-1 .5l-1 .5l-1 .5l-1 .5l-1 0l-1 0l-1 0l-1 .5l-1 0l-1 0l-1 0l-1 0l-1 1l-1 -.5l-1 .5l-1 -.5l-1 0l-1 0l-1 -.5l-1 .5l-1 -.5l-1 0l-1 -1l-1 -.5l-1 -.5l-1 -2l-1 1.5l-1 1l-1 .5l-1 0l-1 .5l-1 0l-1 .5l-1 0l-1 .5l-1 0l-1 0l-1 0l-1 0l-1 1l-1 -.5l-1 .5l-1 -.5l-1 0l-1 0l-1 0l-1 0l-1 -.5l-1 0l-1 -1l-1 0l-1 -1l-1 -2.5l-1 1.5l-1 1l-1 1l-1 .5l-1 .5l-1 0l-1 0l-1 .5l-1 0l-1 -.5l-1 -.5l-1 0l-1 -1l-1 -3l-1 2l-1 .5l-1 .5l-1 .5l-1 .5l-1 0l-1 0l-1 .5l-1 0l-1 -.5l-1 .5l-1 -.5l-1 -.5l-1 -.5l-1 0l-1 -3l-1 2l-1 1l-1 .5l-1 .5l-1 .5l-1 0l-1 .5l-1 0l-1 0l-1 0l-1 -.5l-1 -.5l-1 -1l-1 -3l-1 1.5l-1 .5l-1 0l-1 .5l-1 0l-1 .5l-1 0l-1 0l-1 0l-1 .5l-1 0l-1 -.5l-1 0l-1 1l-1 -.5l-1 .5l-1 0l-1 0l-1 -.5l-1 .5l-1 -.5l-1 -.5l-1 0l-1 -.5l-1 -.5l-1 0l-1 -2l-1 1.5l-1 .5l-1 1l-1 -.5l-1 .5l-1 .5l-1 -.5l-1 1l-1 -.5l-1 .5l-1 0l-1 0l-1 0l-1 .5l-1 0l-1 0l-1 0l-1 0l-1 -.5l-1 0l-1 -.5l-1 0l-1 0l-1 -.5l-1 0l-1 -.5l-1 -2.5l-1 2l-1 .5l-1 1l-1 .5l-1 0l-1 1l-1 -.5l-1 .5l-1 0l-1 -.5l-1 -.5l-1 0l-1 -.5l-1 -3.5l-1 2l-1 1l-1 .5l-1 .5l-1 .5l-1 0l-1 0l-1 1l-1 -.5l-1 -.5l-1 0l-1 -.5l-1 -.5l-1 -3.5l-1 1l-1 1l-1 0l-1 .5l-1 0l-1 0l-1 .5l-1 0l-1 0l-1 .5l-1 .5l-1 -.5l-1 0l-1 .5l-1 0l-1 .5l-1 -.5l-1 0l-1 0l-1 -.5l-1 0l-1 0l-1 -.5l-1 0l-1 0l-1 -1l-1 -2l-1 2l-1 .5l-1 .5l-1 .5l-1 0l-1 0l-1 .5l-1 -.5l-1 -.5l-1 -.5l-1 -2.5l-1 3l-1 .5l-1 1l-1 .5l-1 -.5l-1 .5l-1 0l-1 -.5l-1 -.5l-1 -.5l-1 -3.5l-1 2l-1 0l-1 1l-1 .5l-1 0l-1 .5l-1 -.5l-1 1l-1 0l-1 -.5l-1 0l-1 -.5l-1 -.5l-1 -3l-1 2.5l-1 .5l-1 .5l-1 .5l-1 0l-1 .5l-1 -.5l-1 0l-1 -.5l-1 -.5l-1 -3l-1 2.5l-1 0l-1 .5l-1 0l-1 .5l-1 .5l-1 0l-1 .5l-1 0l-1 0l-1 0l-1 -.5l-1 0l-1 -1l-1 -.5l-1 -2.5l-1 2.5l-1 1l-1 1l-1 0l-1 0l-1 .5l-1 0l-1 -.5l-1 0l-1 -1.5l-1 -3l-1 1.5l-1 1l-1 .5l-1 0l-1 1l-1 0l-1 0l-1 .5l-1 -.5l-1 0l-1 0l-1 -.5l-1 -.5l-1 -3l-1 2.5l-1 .5l-1 .5l-1 .5l-1 0l-1 .5l-1 0l-1 0l-1 -.5l-1 -1l-1 -3l-1 1.5l-1 .5l-1 .5l-1 .5l-1 0l-1 .5l-1 0l-1 .5l-1 0l-1 -.5l-1 0l-1 -1l-1 0l-1 -2.5l-1 1.5l-1 .5l-1 .5l-1 .5l-1 0l-1 .5l-1 0l-1 .5l-1 0l-1 0l-1 -.5l-1 0l-1 -.5l-1 -.5l-1 -.5l-1 -2l-1 1l-1 1.5l-1 0l-1 .5l-1 0l-1 .5l-1 0l-1 .5l-1 0l-1 -.5l-1 0l-1 -.5l-1 -1l-1 -2l-1 1.5l-1 1l-1 0l-1 1l-1 .5l-1 0l-1 0l-1 .5l-1 0l-1 -.5l-1 -.5l-1 -.5l-1 0l-1 -3l-1 1l-1 1l-1 1l-1 0l-1 .5l-1 0l-1 0l-1 0l-1 0l-1 0l-1 -.5l-1 0l-1 -.5l-1 -2l-1 1l-1 1.5l-1 .5l-1 0l-1 0l-1 .5l-1 0l-1 .5l-1 0l-1 -.5l-1 -.5l-1 0l-1 -1l-1 -2.5l-1 2l-1 1l-1 .5l-1 .5l-1 .5l-1 0l-1 0l-1 .5l-1 0l-1 0l-1 -.5l-1 0l-1 -.5l-1 0l-1 -1l-1 -3l-1 1.5l-1 .5l-1 1l-1 -.5l-1 1l-1 0l-1 0l-1 .5l-1 -.5l-1 .5l-1 -.5l-1 -.5l-1 -.5l-1 -2.5l-1 1.5l-1 1l-1 .5l-1 .5l-1 0l-1 0l-1 .5l-1 .5l-1 -.5l-1 0l-1 -.5l-1 0l-1 -.5l-1 -3l-1 2l-1 .5l-1 .5l-1 .5l-1 .5l-1 0l-1 0l-1 .5l-1 0l-1 -.5l-1 0l-1 -.5l-1 -.5l-1 -3l-1 1l-1 1l-1 1l-1 .5l-1 0l-1 .5l-1 0l-1 .5l-1 0l-1 -.5l-1 0l-1 -1l-1 -.5l-1 -2.5l-1 2.5l-1 0l-1 1l-1 0l-1 0l-1 .5l-1 0l-1 -.5l-1 0l-1 -.5l-1 -3l-1 2l-1 1l-1 1l-1 0l-1 0l-1 0l-1 .5l-1 1l-1 -.5l-1 0l-1 -.5l-1 -1l-1 -.5l-1 -3l-1 1.5l-1 1.5l-1 .5l-1 .5l-1 .5l-1 0l-1 0l-1 1l-1 -.5l-1 0l-1 -.5l-1 -.5l-1 -1l-1 -2.5l-1 1l-1 1.5l-1 .5l-1 .5l-1 0l-1 0l-1 .5l-1 .5l-1 0l-1 -.5l-1 -.5l-1 -.5l-1 -.5l-1 -3l-1 1.5l-1 .5l-1 .5l-1 0l-1 0l-1 .5l-1 0l-1 .5l-1 -.5l-1 0l-1 .5l-1 0l-1 0l-1 .5l-1 0l-1 0l-1 -.5l-1 0l-1 .5l-1 -.5l-1 -.5l-1 .5l-1 -1l-1 0l-1 0l-1 -.5l-1 -2l-1 1.5l-1 1l-1 .5l-1 .5l-1 .5l-1 0l-1 0l-1 0l-1 .5l-1 -.5l-1 -.5l-1 -.5l-1 0l-1 -2.5l-1 2l-1 .5l-1 .5l-1 .5l-1 .5l-1 0l-1 0l-1 0l-1 -.5l-1 -1l-1 -3l-1 2l-1 0l-1 .5l-1 .5l-1 0l-1 .5l-1 0l-1 0l-1 0l-1 .5l-1 0l-1 0l-1 .5l-1 0l-1 0l-1 0l-1 -.5l-1 .5l-1 -.5l-1 0l-1 0l-1 0l-1 -.5l-1 -.5l-1 0l-1 -1l-1 -2l-1 2.5l-1 .5l-1 .5l-1 .5l-1 0l-1 .5l-1 0l-1 0l-1 .5l-1 0l-1 0l-1 -1l-1 0l-1 -.5l-1 -1l-1 -2l-1 1.5l-1 .5l-1 1l-1 0l-1 .5l-1 0l-1 .5l-1 .5l-1 0l-1 -.5l-1 0l-1 -1l-1 -.5l-1 -3l-1 1l-1 1l-1 .5l-1 0l-1 1l-1 -.5l-1 .5l-1 .5l-1 0l-1 0l-1 -1l-1 0l-1 -1l-1 -1.5l-1 2l-1 1l-1 0l-1 .5l-1 .5l-1 0l-1 .5l-1 -.5l-1 -.5l-1 -1l-1 -3l-1 2.5l-1 .5l-1 .5l-1 0l-1 1l-1 0l-1 .5l-1 .5l-1 0l-1 -1l-1 0l-1 0l-1 0l-1 -1l-1 -1l-1 -2.5l-1 1.5l-1 1.5l-1 .5l-1 0l-1 .5l-1 0l-1 .5l-1 .5l-1 0l-1 -.5l-1 -.5l-1 -.5l-1 -.5l-1 -2.5l-1 1.5l-1 .5l-1 1l-1 0l-1 .5l-1 .5l-1 0l-1 0l-1 .5l-1 -.5l-1 -.5l-1 -.5l-1 -1l-1 -2l-1 2l-1 1l-1 0l-1 .5l-1 .5l-1 .5l-1 0l-1 .5l-1 -.5l-1 0l-1 0l-1 -.5l-1 0l-1 -1l-1 -.5l-1 -3l-1 1.5l-1 .5l-1 1l-1 0l-1 1l-1 -.5l-1 .5l-1 0l-1 0l-1 0l-1 -.5l-1 -.5l-1 0l-1 -3l-.5 -2.5Z"/></defs><path d="M2 22.3H990M2 60.3H990" stroke="#000" stroke-width="1.2"/><g fill="#061c5e" stroke="#000" stroke-width="0.9" stroke-linejoin="round"><use href="#w5" transform="translate(-392 22.3)"/><use href="#w5" transform="translate(-392 60.3)"/></g></svg>
<div class="t" style="left:394px;top:573px;padding:3.5px 4px 1px 2.5px;height:17px;background:rgba(6,40,221,0.82);font-size:12px;letter-spacing:-0.3px;word-spacing:1px;font-weight:bold;color:#e8ecff">007 - <span style="letter-spacing:-1.175px">BASS</span></div>
<div style="left:17px;top:652px;width:40px;height:81px;background:#cbcbcb"></div>
<svg style="left:18.2px;top:653.2px;" width="21" height="17" viewBox="0 0 21 17"><path d="M0.7 9.7H3.2L3.9 8L4.9 11.5L6.2 5.9L7.7 13.9L9.8 2.9L11.2 12.1L12.9 7L14 11.1L15.1 9L16 9.7H17.8" stroke="#fff" stroke-width="1.8" fill="none" stroke-linejoin="round" stroke-linecap="round"/></svg>
<div class="t" style="left:33px;top:657px;width:20px;text-align:right;font-size:9.5px;color:#5a5a5a">7</div>
<div style="left:63px;top:654px;width:45px;height:17px;background:linear-gradient(#606366,#484b4e);border:1px solid #141618;border-radius:3.5px"></div>
<div style="left:85px;top:655px;width:1px;height:15px;background:#0e0f10"></div>
<svg style="left:64px;top:655px;" width="43" height="15" viewBox="0 0 43 15"><g fill="#000"><rect x="6.9" y="4.1" width="8" height="2"/><rect x="6.9" y="4.1" width="2.2" height="7.8"/><rect x="9.9" y="5" width="2.1" height="6.9"/><rect x="12.8" y="4.1" width="2.1" height="7.8"/><rect x="28" y="4.1" width="8" height="2"/><rect x="28" y="4.1" width="2.3" height="5.5"/><rect x="28" y="7.9" width="8" height="1.7"/><rect x="33.7" y="7.9" width="2.3" height="4"/><rect x="28" y="10.1" width="8" height="1.8"/></g></svg>
<div class="t" style="left:111.5px;top:656.3px;font-size:14px;font-weight:bold;color:#ffffff;letter-spacing:-0.5px;word-spacing:1.5px">008 - <span style="letter-spacing:-1.260px">SWEEP</span></div>
<div style="left:112px;top:675px;width:46px;height:15px;background:#4b4e52;border-radius:3px"></div>
<div style="left:162px;top:675px;width:49px;height:15px;background:#4b4e52;border-radius:3px"></div>
<div style="left:215px;top:675px;width:46px;height:15px;background:#4b4e52;border-radius:3px"></div>
<svg style="left:112px;top:675px;" width="150" height="15" viewBox="0 0 150 15"><circle cx="11" cy="7.5" r="4" fill="#000"/><path d="M33 5.5h2l3-2.5v9l-3-2.5h-2z" fill="#000"/><path d="M58 9.5 C57 3,64 3,64 6 L58 9 C58 12,62 12.5,64 11" stroke="#000" stroke-width="1.5" fill="none"/><circle cx="81" cy="7.5" r="2.6" stroke="#000" stroke-width="1.5" fill="none"/><circle cx="85" cy="7.5" r="2.6" stroke="#000" stroke-width="1.5" fill="none"/><path d="M109 11.5V4h4.5a2 2 0 0 1 0 4h-4.5M112 8l3 3.5" stroke="#000" stroke-width="2" fill="none"/><path d="M134.5 4v7.5h7V4M138 4v7" stroke="#000" stroke-width="2" fill="none"/></svg>
<div style="left:64px;top:694px;width:34px;height:34px;border:1px solid #2b2e31;border-radius:3px"></div>
<div style="left:17px;top:733px;width:364px;height:1px;background:#5b5e61"></div>
<div style="left:371px;top:705px;width:3px;height:6px;background:#151515"></div>
<div style="left:375px;top:705px;width:3px;height:3px;background:#151515"></div>
<div style="left:371px;top:711px;width:3px;height:21px;background:linear-gradient(#2ae8d0,#1ed8f2 40%)"></div>
<div style="left:375px;top:708px;width:3px;height:24px;background:linear-gradient(#2ae8d0,#1ed8f2 40%)"></div>
<div style="left:383px;top:733px;width:9px;height:1px;background:#3a3e42"></div>
<div style="left:392px;top:733px;width:1000px;height:1px;background:#4a535c"></div>
<div style="left:392px;top:653px;width:1000px;height:79px;background:#707070"></div>
<div style="left:393px;top:654px;width:1000px;height:77px;background:#f6f2f2"></div>
<div style="left:394px;top:655px;width:1000px;height:75px;background:#cbcbcb"></div>
<div style="left:421.22px;top:655px;width:1px;height:75px;background:rgba(0,0,0,0.25)"></div>
<div style="left:450.44px;top:655px;width:1px;height:75px;background:rgba(0,0,0,0.25)"></div>
<div style="left:479.66px;top:655px;width:1px;height:75px;background:rgba(0,0,0,0.25)"></div>
<div style="left:508.88px;top:655px;width:1px;height:75px;background:rgba(0,0,0,0.25)"></div>
<div style="left:538.10px;top:655px;width:1px;height:75px;background:rgba(0,0,0,0.25)"></div>
<div style="left:567.32px;top:655px;width:1px;height:75px;background:rgba(0,0,0,0.25)"></div>
<div style="left:596.54px;top:655px;width:1px;height:75px;background:rgba(0,0,0,0.25)"></div>
<div style="left:625.76px;top:655px;width:1px;height:75px;background:rgba(0,0,0,0.25)"></div>
<div style="left:654.98px;top:655px;width:1px;height:75px;background:rgba(0,0,0,0.25)"></div>
<div style="left:684.20px;top:655px;width:1px;height:75px;background:rgba(0,0,0,0.25)"></div>
<div style="left:713.42px;top:655px;width:1px;height:75px;background:rgba(0,0,0,0.25)"></div>
<div style="left:742.64px;top:655px;width:1px;height:75px;background:rgba(0,0,0,0.25)"></div>
<div style="left:771.86px;top:655px;width:1px;height:75px;background:rgba(0,0,0,0.25)"></div>
<div style="left:801.08px;top:655px;width:1px;height:75px;background:rgba(0,0,0,0.25)"></div>
<div style="left:830.30px;top:655px;width:1px;height:75px;background:rgba(0,0,0,0.25)"></div>
<div style="left:859.52px;top:655px;width:1px;height:75px;background:rgba(0,0,0,0.25)"></div>
<div style="left:888.74px;top:655px;width:1px;height:75px;background:rgba(0,0,0,0.25)"></div>
<div style="left:917.96px;top:655px;width:1px;height:75px;background:rgba(0,0,0,0.25)"></div>
<div style="left:947.18px;top:655px;width:1px;height:75px;background:rgba(0,0,0,0.25)"></div>
<div style="left:976.40px;top:655px;width:1px;height:75px;background:rgba(0,0,0,0.25)"></div>
<div style="left:1005.62px;top:655px;width:1px;height:75px;background:rgba(0,0,0,0.25)"></div>
<div style="left:1034.84px;top:655px;width:1px;height:75px;background:rgba(0,0,0,0.25)"></div>
<div style="left:1064.06px;top:655px;width:1px;height:75px;background:rgba(0,0,0,0.25)"></div>
<div style="left:1093.28px;top:655px;width:1px;height:75px;background:rgba(0,0,0,0.25)"></div>
<div style="left:1122.50px;top:655px;width:1px;height:75px;background:rgba(0,0,0,0.25)"></div>
<div style="left:1151.72px;top:655px;width:1px;height:75px;background:rgba(0,0,0,0.25)"></div>
<div style="left:1180.94px;top:655px;width:1px;height:75px;background:rgba(0,0,0,0.25)"></div>
<div style="left:1210.16px;top:655px;width:1px;height:75px;background:rgba(0,0,0,0.25)"></div>
<div style="left:1239.38px;top:655px;width:1px;height:75px;background:rgba(0,0,0,0.25)"></div>
<div style="left:1268.60px;top:655px;width:1px;height:75px;background:rgba(0,0,0,0.25)"></div>
<div style="left:1297.82px;top:655px;width:1px;height:75px;background:rgba(0,0,0,0.25)"></div>
<div style="left:1327.04px;top:655px;width:1px;height:75px;background:rgba(0,0,0,0.25)"></div>
<div style="left:1356.26px;top:655px;width:1px;height:75px;background:rgba(0,0,0,0.25)"></div>
<svg style="left:392px;top:652px;" width="982" height="82" viewBox="0 0 982 82"><defs><path id="w6" d="M544 -.5l2 0l2 0l2 -.5l2 .5l2 -.5l2 .5l2 -.5l2 0l2 0l2 0l2 0l2 0l2 0l2 0l2 0l2 0l2 0l2 0l2 0l2 0l2 0l2 0l2 0l2 0l2 -.5l2 .5l2 -.5l2 .5l2 -.5l2 0l2 0l2 0l2 -.5l2 .5l2 -.5l2 0l2 0l2 0l2 0l2 -.5l2 0l2 0l2 0l2 -.5l2 0l2 -.5l2 0l2 0l2 0l2 -.5l2 0l2 -.5l2 -.5l2 -.5l2 0l2 0l2 -.5l2 0l2 0l2 0l2 0l2 -.5l2 .5l2 .5l2 0l2 0l2 .5l2 0l2 .5l2 0l2 0l2 0l2 .5l2 0l2 0l2 0l2 0l2 0l2 0l2 .5l2 -.5l2 .5l2 0l2 0l2 0l2 0l2 0l2 0l2 .5l2 0l2 0l2 0l2 0l2 0l2 0l2 0l2 .5l2 -.5l2 0l2 .5l2 0l2 0l2 0l2 0l2 0l2 0l2 0l2 0l2 0l2 .5l2 -.5l2 .5l2 -.5l2 0l2 .5l2 0l2 -.5l2 .5l2 0l2 0l2 0l2 -.5l2 .5l2 -.5l2 .5l2 0l2 -.5l2 .5l2 0l2 -.5l2 0l2 0l2 0l2 0l2 -.5l2 0l2 0l2 .5l2 -.5l2 0l2 0l2 0l2 0l2 -.5l2 .5l2 -.5l2 0l2 .5l2 -.5l2 0l2 0l2 0l2 0l2 -.5l2 .5l2 0l2 -.5l2 0l2 .5l2 -.5l2 .5l2 -.5l2 0l2 0l2 0l2 0l2 0l2 0l2 .5l2 0l2 0l2 -.5l2 .5l2 0l2 -.5l2 .5l2 0l2 0l2 0l2 0l2 0l2 .5l2 -.5l2 .5l2 0l2 0l2 0l2 0l2 0l2 0l2 0l2 .5l2 0l2 0l2 0l2 0l2 0l2 0l2 0l2 .5l2 -.5l2 0l2 .5l2 -.5l2 .5l2 -.5l2 .5l2 0l2 -.5l2 .5l2 0l2 0l2 0l2 0l2 0l2 0l2 0l2 -.5l2 .5l2 -.5l2 -.5l2 -.5l2 -.5l2 0l2 .5l2 .5l2 .5l2 0l2 -.5l2 0l2 0l2 .5l2 -.5l2 0l2 0l2 0l2 0l2 0l2 0l2 0l2 0l2 -.5l2 0l2 0l2 0l2 0l2 0l2 0l2 0l2 -.5l2 0l2 .5l2 -.5l2 0l2 0l2 0l2 .5l2 -.5l2 0l2 0l2 0l2 0l2 0l2 0l2 0l2 .5l2 -.5l2 0l2 0l2 .5l2 -.5l2 .5l2 0l2 0l2 0l2 0l2 0l2 0l2 .5l2 0l2 0l2 0l2 0l2 0l2 .5l2 0l2 -.5l2 .5l2 0l2 0l2 0l2 0l2 0l2 0l2 0l2 .5l2 -.5l2 0l2 0l2 0l2 0l2 .5l2 -.5l2 0l2 0l2 .5l2 0l2 0l2 0l2 -.5l2 0l2 0l2 0l2 0l2 0l2 0l2 0l2 -.5l2 0l2 0l2 0l2 0l2 0l2 -.5l2 0l2 0l2 0l2 -.5l2 .5l2 -.5l2 0l2 .5l2 -.5l2 0l2 0l2 0l2 -.5l2 .5l2 0l2 -.5l2 .5l2 -.5l2 .5l2 0l2 0l2 -.5l2 0l2 .5l2 -.5l2 0l2 0l2 .5l2 -.5l2 .5l2 -.5l2 .5l2 -.5l2 .5l2 0l2 0l2 0l2 0l2 0l2 .5l2 -.5l2 0l2 0l2 .5l2 0l2 0l2 0l2 0l2 .5l2 -.5l2 .5l2 0l2 0l2 0l2 0l2 0l2 0l2 .5l2 0l2 0l2 -.5l2 -.5l2 -.5l2 0l2 .5l2 .5l2 0l2 .5l2 0l2 .5l2 0l2 -.5l2 .5l2 0l2 0l2 -.5l2 .5l2 0l2 0l2 0l2 -.5l2 .5l2 0l2 0l2 0l2 -.5l2 .5l2 -.5l2 0l2 0l2 0l0 6.5l-2 0l-2 -.5l-2 .5l-2 0l-2 0l-2 0l-2 0l-2 0l-2 0l-2 0l-2 0l-2 0l-2 0l-2 0l-2 .5l-2 -.5l-2 0l-2 0l-2 0l-2 0l-2 0l-2 0l-2 0l-2 .5l-2 0l-2 1l-2 0l-2 0l-2 -.5l-2 -1l-2 0l-2 -.5l-2 0l-2 0l-2 0l-2 0l-2 0l-2 -.5l-2 0l-2 0l-2 .5l-2 -.5l-2 0l-2 0l-2 0l-2 0l-2 0l-2 0l-2 0l-2 0l-2 -.5l-2 0l-2 0l-2 0l-2 0l-2 0l-2 0l-2 .5l-2 -.5l-2 .5l-2 -.5l-2 0l-2 0l-2 .5l-2 0l-2 0l-2 -.5l-2 .5l-2 0l-2 0l-2 0l-2 0l-2 .5l-2 -.5l-2 .5l-2 0l-2 0l-2 .5l-2 -.5l-2 .5l-2 0l-2 0l-2 0l-2 0l-2 0l-2 0l-2 .5l-2 -.5l-2 0l-2 .5l-2 -.5l-2 0l-2 0l-2 .5l-2 0l-2 0l-2 0l-2 0l-2 0l-2 0l-2 0l-2 0l-2 0l-2 0l-2 0l-2 -.5l-2 0l-2 0l-2 0l-2 .5l-2 0l-2 0l-2 -.5l-2 .5l-2 0l-2 0l-2 -.5l-2 0l-2 0l-2 0l-2 0l-2 0l-2 0l-2 -.5l-2 0l-2 0l-2 0l-2 0l-2 0l-2 -.5l-2 0l-2 .5l-2 -.5l-2 0l-2 0l-2 0l-2 0l-2 0l-2 0l-2 0l-2 0l-2 0l-2 -.5l-2 .5l-2 -.5l-2 0l-2 0l-2 0l-2 0l-2 0l-2 0l-2 0l-2 0l-2 0l-2 0l-2 -.5l-2 0l-2 0l-2 .5l-2 0l-2 0l-2 0l-2 0l-2 0l-2 0l-2 0l-2 0l-2 0l-2 .5l-2 0l-2 0l-2 0l-2 0l-2 -.5l-2 .5l-2 0l-2 0l-2 0l-2 .5l-2 0l-2 0l-2 0l-2 -.5l-2 .5l-2 0l-2 .5l-2 -.5l-2 .5l-2 .5l-2 .5l-2 .5l-2 0l-2 -.5l-2 -.5l-2 -.5l-2 0l-2 .5l-2 -.5l-2 0l-2 0l-2 0l-2 0l-2 0l-2 0l-2 0l-2 .5l-2 -.5l-2 0l-2 .5l-2 -.5l-2 0l-2 0l-2 0l-2 0l-2 -.5l-2 0l-2 0l-2 .5l-2 0l-2 -.5l-2 0l-2 0l-2 0l-2 0l-2 -.5l-2 .5l-2 0l-2 -.5l-2 0l-2 0l-2 0l-2 0l-2 -.5l-2 0l-2 0l-2 0l-2 0l-2 0l-2 0l-2 0l-2 0l-2 0l-2 0l-2 0l-2 -.5l-2 0l-2 .5l-2 0l-2 0l-2 0l-2 0l-2 -.5l-2 .5l-2 -.5l-2 .5l-2 0l-2 0l-2 0l-2 0l-2 0l-2 .5l-2 -.5l-2 .5l-2 -.5l-2 .5l-2 0l-2 -.5l-2 .5l-2 0l-2 0l-2 0l-2 0l-2 .5l-2 0l-2 -.5l-2 .5l-2 0l-2 0l-2 0l-2 .5l-2 -.5l-2 0l-2 0l-2 0l-2 .5l-2 0l-2 0l-2 0l-2 0l-2 0l-2 0l-2 0l-2 .5l-2 -.5l-2 0l-2 0l-2 0l-2 .5l-2 0l-2 -.5l-2 .5l-2 0l-2 -.5l-2 .5l-2 -.5l-2 0l-2 0l-2 0l-2 0l-2 -.5l-2 .5l-2 -.5l-2 0l-2 0l-2 0l-2 0l-2 0l-2 -.5l-2 .5l-2 -.5l-2 0l-2 0l-2 0l-2 0l-2 0l-2 0l-2 0l-2 -.5l-2 .5l-2 0l-2 0l-2 -.5l-2 0l-2 0l-2 0l-2 0l-2 0l-2 0l-2 0l-2 0l-2 0l-2 0l-2 .5l-2 0l-2 0l-2 0l-2 .5l-2 0l-2 .5l-2 .5l-2 0l-2 .5l-2 0l-2 0l-2 0l-2 .5l-2 0l-2 -.5l-2 0l-2 0l-2 0l-2 -.5l-2 0l-2 -.5l-2 0l-2 -.5l-2 .5l-2 -.5l-2 .5l-2 -.5l-2 .5l-2 -.5l-2 0l-2 0l-2 0l-2 0l-2 0l-2 0l-2 0l-2 0l-2 -.5l-2 .5l-2 0l-2 -.5l-2 0l-2 0l-2 0l-2 0l-2 -.5l-2 .5l-2 0l-2 -.5l-2 0l-2 0l-2 0l-2 0l-2 -.5l-2 0l-2 0l-2 0l-2 -.5l-2 0l-2 0l-2 0l-2 0l-2 0l-2 0l-2 -.5l-2 0l-2 0l-2 -.5l-2 .5l-2 -.5l-2 0l-2 0Z"/></defs><path d="M2 22.3H990M2 60.3H990" stroke="#000" stroke-width="1.2"/><g fill="#8c8c8c" stroke="#1e1e1e" stroke-width="0.9" stroke-linejoin="round"><use href="#w6" transform="translate(-392 22.3)"/><use href="#w6" transform="translate(-392 60.3)"/></g></svg>
<div class="t" style="left:394px;top:655px;padding:3.5px 4px 1px 2.5px;height:17px;background:rgba(203,203,203,0.82);font-size:12px;letter-spacing:-0.3px;word-spacing:1px;font-weight:bold;color:#101010">008 - <span style="letter-spacing:-1.220px">SWEEP</span></div>
<div style="left:17px;top:734px;width:40px;height:81px;background:#5cb800"></div>
<svg style="left:18.2px;top:735.2px;" width="21" height="17" viewBox="0 0 21 17"><path d="M0.7 9.7H3.2L3.9 8L4.9 11.5L6.2 5.9L7.7 13.9L9.8 2.9L11.2 12.1L12.9 7L14 11.1L15.1 9L16 9.7H17.8" stroke="#fff" stroke-width="1.8" fill="none" stroke-linejoin="round" stroke-linecap="round"/></svg>
<div class="t" style="left:33px;top:739px;width:20px;text-align:right;font-size:9.5px;color:#2a5a00">8</div>
<div style="left:63px;top:736px;width:45px;height:17px;background:linear-gradient(#606366,#484b4e);border:1px solid #141618;border-radius:3.5px"></div>
<div style="left:85px;top:737px;width:1px;height:15px;background:#0e0f10"></div>
<svg style="left:64px;top:737px;" width="43" height="15" viewBox="0 0 43 15"><g fill="#000"><rect x="6.9" y="4.1" width="8" height="2"/><rect x="6.9" y="4.1" width="2.2" height="7.8"/><rect x="9.9" y="5" width="2.1" height="6.9"/><rect x="12.8" y="4.1" width="2.1" height="7.8"/><rect x="28" y="4.1" width="8" height="2"/><rect x="28" y="4.1" width="2.3" height="5.5"/><rect x="28" y="7.9" width="8" height="1.7"/><rect x="33.7" y="7.9" width="2.3" height="4"/><rect x="28" y="10.1" width="8" height="1.8"/></g></svg>
<div class="t" style="left:111.5px;top:738.3px;font-size:14px;font-weight:bold;color:#ffffff;letter-spacing:-0.5px;word-spacing:1.5px">009 - <span style="letter-spacing:-1.067px">SEQ</span></div>
<div style="left:112px;top:757px;width:46px;height:15px;background:#4b4e52;border-radius:3px"></div>
<div style="left:162px;top:757px;width:49px;height:15px;background:#4b4e52;border-radius:3px"></div>
<div style="left:215px;top:757px;width:46px;height:15px;background:#4b4e52;border-radius:3px"></div>
<svg style="left:112px;top:757px;" width="150" height="15" viewBox="0 0 150 15"><circle cx="11" cy="7.5" r="4" fill="#000"/><path d="M33 5.5h2l3-2.5v9l-3-2.5h-2z" fill="#000"/><path d="M58 9.5 C57 3,64 3,64 6 L58 9 C58 12,62 12.5,64 11" stroke="#000" stroke-width="1.5" fill="none"/><circle cx="81" cy="7.5" r="2.6" stroke="#000" stroke-width="1.5" fill="none"/><circle cx="85" cy="7.5" r="2.6" stroke="#000" stroke-width="1.5" fill="none"/><path d="M109 11.5V4h4.5a2 2 0 0 1 0 4h-4.5M112 8l3 3.5" stroke="#000" stroke-width="2" fill="none"/><path d="M134.5 4v7.5h7V4M138 4v7" stroke="#000" stroke-width="2" fill="none"/></svg>
<div style="left:64px;top:776px;width:34px;height:34px;border:1px solid #2b2e31;border-radius:3px"></div>
<div style="left:17px;top:815px;width:364px;height:1px;background:#5b5e61"></div>
<div style="left:371px;top:766px;width:3px;height:10px;background:#151515"></div>
<div style="left:375px;top:766px;width:3px;height:10px;background:#151515"></div>
<div style="left:371px;top:776px;width:3px;height:38px;background:linear-gradient(#2ae8d0,#1ed8f2 40%)"></div>
<div style="left:375px;top:776px;width:3px;height:38px;background:linear-gradient(#2ae8d0,#1ed8f2 40%)"></div>
<div style="left:383px;top:815px;width:9px;height:1px;background:#3a3e42"></div>
<div style="left:392px;top:815px;width:1000px;height:1px;background:#4a535c"></div>
<div style="left:392px;top:735px;width:1000px;height:79px;background:#2a5a00"></div>
<div style="left:393px;top:736px;width:1000px;height:77px;background:#8cf030"></div>
<div style="left:394px;top:737px;width:1000px;height:75px;background:#5cb800"></div>
<div style="left:421.22px;top:737px;width:1px;height:75px;background:rgba(0,30,0,0.45)"></div>
<div style="left:450.44px;top:737px;width:1px;height:75px;background:rgba(0,30,0,0.45)"></div>
<div style="left:479.66px;top:737px;width:1px;height:75px;background:rgba(0,30,0,0.45)"></div>
<div style="left:508.88px;top:737px;width:1px;height:75px;background:rgba(0,30,0,0.45)"></div>
<div style="left:538.10px;top:737px;width:1px;height:75px;background:rgba(0,30,0,0.45)"></div>
<div style="left:567.32px;top:737px;width:1px;height:75px;background:rgba(0,30,0,0.45)"></div>
<div style="left:596.54px;top:737px;width:1px;height:75px;background:rgba(0,30,0,0.45)"></div>
<div style="left:625.76px;top:737px;width:1px;height:75px;background:rgba(0,30,0,0.45)"></div>
<div style="left:654.98px;top:737px;width:1px;height:75px;background:rgba(0,30,0,0.45)"></div>
<div style="left:684.20px;top:737px;width:1px;height:75px;background:rgba(0,30,0,0.45)"></div>
<div style="left:713.42px;top:737px;width:1px;height:75px;background:rgba(0,30,0,0.45)"></div>
<div style="left:742.64px;top:737px;width:1px;height:75px;background:rgba(0,30,0,0.45)"></div>
<div style="left:771.86px;top:737px;width:1px;height:75px;background:rgba(0,30,0,0.45)"></div>
<div style="left:801.08px;top:737px;width:1px;height:75px;background:rgba(0,30,0,0.45)"></div>
<div style="left:830.30px;top:737px;width:1px;height:75px;background:rgba(0,30,0,0.45)"></div>
<div style="left:859.52px;top:737px;width:1px;height:75px;background:rgba(0,30,0,0.45)"></div>
<div style="left:888.74px;top:737px;width:1px;height:75px;background:rgba(0,30,0,0.45)"></div>
<div style="left:917.96px;top:737px;width:1px;height:75px;background:rgba(0,30,0,0.45)"></div>
<div style="left:947.18px;top:737px;width:1px;height:75px;background:rgba(0,30,0,0.45)"></div>
<div style="left:976.40px;top:737px;width:1px;height:75px;background:rgba(0,30,0,0.45)"></div>
<div style="left:1005.62px;top:737px;width:1px;height:75px;background:rgba(0,30,0,0.45)"></div>
<div style="left:1034.84px;top:737px;width:1px;height:75px;background:rgba(0,30,0,0.45)"></div>
<div style="left:1064.06px;top:737px;width:1px;height:75px;background:rgba(0,30,0,0.45)"></div>
<div style="left:1093.28px;top:737px;width:1px;height:75px;background:rgba(0,30,0,0.45)"></div>
<div style="left:1122.50px;top:737px;width:1px;height:75px;background:rgba(0,30,0,0.45)"></div>
<div style="left:1151.72px;top:737px;width:1px;height:75px;background:rgba(0,30,0,0.45)"></div>
<div style="left:1180.94px;top:737px;width:1px;height:75px;background:rgba(0,30,0,0.45)"></div>
<div style="left:1210.16px;top:737px;width:1px;height:75px;background:rgba(0,30,0,0.45)"></div>
<div style="left:1239.38px;top:737px;width:1px;height:75px;background:rgba(0,30,0,0.45)"></div>
<div style="left:1268.60px;top:737px;width:1px;height:75px;background:rgba(0,30,0,0.45)"></div>
<div style="left:1297.82px;top:737px;width:1px;height:75px;background:rgba(0,30,0,0.45)"></div>
<div style="left:1327.04px;top:737px;width:1px;height:75px;background:rgba(0,30,0,0.45)"></div>
<div style="left:1356.26px;top:737px;width:1px;height:75px;background:rgba(0,30,0,0.45)"></div>
<svg style="left:392px;top:734px;" width="982" height="82" viewBox="0 0 982 82"><defs><path id="w7" d="M502 0l1.5 -16l2 15.5l2.5 -11.5l2 11.5l2.5 -10l2 10l2.5 -9l2 9l2.5 -10.5l2 10.5l2.5 -8.5l2 8.5l2.5 -8.5l2 8.5l2.5 -14.5l2 14.5l2 -11.5l2.5 11.5l2 -10.5l2.5 10.5l2 -14.5l2.5 14.5l2 -14.5l2.5 14.5l2 -9l2.5 9l2 -8.5l2.5 8.5l2 -10l2.5 10l2 -10l2.5 10l2 -10l2.5 10l2 -10l2.5 10l2 -11.5l2.5 11.5l2 -11l2.5 11l2 -9.5l2 9.5l2.5 -14.5l2 14.5l2.5 -11l2 11l2.5 -11l2 11l2.5 -11.5l2 11.5l2.5 -8.5l2 8.5l2.5 -11.5l2 11.5l2.5 -11.5l2 11.5l2.5 -8.5l2 8.5l2.5 -11l2 11l2.5 -8.5l2 8.5l2.5 -11.5l2 11.5l2.5 -9l2 9l2 -14.5l2.5 14.5l2 -11l2.5 11l2 -10l2.5 10l2 -9l2.5 9l2 -9l2.5 9l2 -9l2.5 9l2 -9l2.5 9l2 -11.5l2.5 11.5l2 -9.5l2.5 9.5l2 -9l2.5 9l2 -11l2.5 11l2 -8.5l2.5 8.5l2 -9l2 9l2.5 -11l2 11l2.5 -14.5l2 14.5l2.5 -8.5l2 8.5l2.5 -9l2 9l2.5 -9.5l2 9.5l2.5 -11.5l2 11.5l2.5 -10l2 10l2.5 -9l2 9l2.5 -11.5l2 11.5l2.5 -9l2 9l2.5 -11l2 11l2.5 -9l2 9l2 -11l2.5 11l2 -14.5l2.5 14.5l2 -8.5l2.5 8.5l2 -9l2.5 9l2 -9l2.5 9l2 -10.5l2.5 10.5l2 -9l2.5 9l2 -8.5l2.5 8.5l2 -10l2.5 10l2 -10.5l2.5 10.5l2 -11.5l2.5 11.5l2 -8.5l2.5 8.5l2 -14.5l2 14.5l2.5 -9l2 9l2.5 -10l2 10l2.5 -9.5l2 9.5l2.5 -11.5l2 11.5l2.5 -10.5l2 10.5l2.5 -14.5l2 14.5l2.5 -8.5l2 8.5l2.5 -10.5l2 10.5l2.5 -8.5l2 8.5l2.5 -10l2 10l2.5 -9.5l2 9.5l2.5 -8.5l2 8.5l2 -10.5l2.5 10.5l2 -10.5l2.5 10.5l2 -11l2.5 11l2 -9.5l2.5 9.5l2 -11.5l2.5 11.5l2 -9.5l2.5 9.5l2 -11l2.5 11l2 -10.5l2.5 10.5l2 -10.5l2.5 10.5l2 -8.5l2.5 8.5l2 -11.5l2.5 11.5l2 -10.5l2.5 10.5l2 -10.5l2 10.5l2.5 -10l2 10l2.5 -8.5l2 8.5l2.5 -8.5l2 8.5l2.5 -10l2 10l2.5 -10.5l2 10.5l2.5 -10.5l2 10.5l2.5 -14.5l2 14.5l2.5 -9.5l2 9.5l2.5 -9l2 9l2.5 -11.5l2 11.5l2.5 -10l2 10l2.5 -9.5l2 9.5l2 -9l2.5 9l2 -11l2.5 11l2 -11l2.5 11l2 -10.5l2.5 10.5l2 -9l2.5 9l2 -11l2.5 11l2 -10.5l2.5 10.5l2 -9.5l2.5 9.5l2 -10l2.5 10l2 -9l2.5 9l2 -10.5l2.5 10.5l2 -9.5l2.5 9.5l2 -11.5l2 11.5l2.5 -14.5l2 14.5l2.5 -14.5l2 14.5l2.5 -10.5l2 10.5l2.5 -9.5l2 9.5l2.5 -8.5l2 8.5l2.5 -14.5l2 14.5l2.5 -11l2 11l2.5 -14.5l2 14.5l2.5 -10.5l2 10.5l2.5 -10.5l2 10.5l2.5 -11l2 11l2.5 -10.5l2 10.5l2 -10l2.5 10l2 -8.5l2.5 8.5l2 -10.5l2.5 10.5l2 -9.5l2.5 9.5l2 -10.5l2.5 10.5l2 -10.5l2.5 10.5l2 -9.5l2.5 9.5l2 -14.5l2.5 14.5l2 -11.5l2.5 11.5l2 -9l2.5 9l2 -10.5l2.5 10.5l2 -9.5l2.5 9.5l2 -11l2 11l2.5 -11.5l2 11.5l2.5 -10.5l2 10.5l2.5 -10.5l2 10.5l2.5 -10.5l2 10.5l2.5 -9l2 9l2.5 -11.5l2 11.5l2.5 -10l2 10l2.5 -9.5l2 9.5l2.5 -11l2 11l2.5 -8.5l2 8.5l2.5 -10l2 10l2.5 -14.5l2 14.5l2 -14.5l2.5 14.5l2 -11l2.5 11l2 -9.5l2.5 9.5l2 -9l2.5 9l2 -10l2.5 10l2 -11l2.5 11l2 -11.5l2.5 11.5l2 -14.5l2.5 14.5l2 -9l2.5 9l2 -9.5l2.5 9.5l2 -10.5l2.5 10.5l2 -11l2.5 11l2 -9.5l2 9.5l2.5 -11l2 11l2.5 -9l2 9l2.5 -11.5l2 11.5l2.5 -10l2 10l2.5 -10l2 10l2.5 -14.5l2 14.5l2.5 -11.5l2 11.5l2.5 -9.5l2 9.5l2.5 -10l2 10l2.5 -14.5l2 14.5l2.5 -10l2 10l2.5 -11.5l2 11.5l2 -9.5l2.5 9.5l2 -9l2.5 9l2 -11l2.5 11l2 -10l2.5 10l2 -9l2.5 9l2 -11.5l2.5 11.5l2 -14.5l2.5 14.5l2 -9l2.5 9l2 -10.5l2.5 10.5l2 -9.5l2.5 9.5l2 -9l2.5 9l2 -9l2.5 9l0 1l-2.5 9.5l-2 -9.5l-2.5 9.5l-2 -9.5l-2.5 10.5l-2 -10.5l-2.5 11.5l-2 -11.5l-2.5 10l-2 -10l-2.5 16l-2 -16l-2.5 12.5l-2 -12.5l-2.5 10l-2 -10l-2.5 11l-2 -11l-2.5 12l-2 -12l-2.5 9.5l-2 -9.5l-2.5 10l-2 -10l-2 12.5l-2.5 -12.5l-2 11l-2.5 -11l-2 16l-2.5 -16l-2 11l-2.5 -11l-2 10.5l-2.5 -10.5l-2 12.5l-2.5 -12.5l-2 16l-2.5 -16l-2 11l-2.5 -11l-2 11l-2.5 -11l-2 12.5l-2.5 -12.5l-2 10l-2.5 -10l-2 12l-2.5 -12l-2 10l-2 -10l-2.5 12l-2 -12l-2.5 11.5l-2 -11.5l-2.5 10l-2 -10l-2.5 10l-2 -10l-2.5 16l-2 -16l-2.5 12.5l-2 -12.5l-2.5 12l-2 -12l-2.5 11l-2 -11l-2.5 9.5l-2 -9.5l-2.5 10.5l-2 -10.5l-2.5 12l-2 -12l-2.5 16l-2 -16l-2 16l-2.5 -16l-2 11l-2.5 -11l-2 9.5l-2.5 -9.5l-2 12l-2.5 -12l-2 10l-2.5 -10l-2 11l-2.5 -11l-2 12.5l-2.5 -12.5l-2 10l-2.5 -10l-2 11.5l-2.5 -11.5l-2 11.5l-2.5 -11.5l-2 11.5l-2.5 -11.5l-2 12.5l-2.5 -12.5l-2 12l-2 -12l-2.5 10.5l-2 -10.5l-2.5 11.5l-2 -11.5l-2.5 9.5l-2 -9.5l-2.5 12.5l-2 -12.5l-2.5 16l-2 -16l-2.5 10.5l-2 -10.5l-2.5 11l-2 -11l-2.5 11.5l-2 -11.5l-2.5 10l-2 -10l-2.5 11.5l-2 -11.5l-2.5 9l-2 -9l-2.5 11l-2 -11l-2 11.5l-2.5 -11.5l-2 12l-2.5 -12l-2 11.5l-2.5 -11.5l-2 11.5l-2.5 -11.5l-2 16l-2.5 -16l-2 12l-2.5 -12l-2 16l-2.5 -16l-2 9l-2.5 -9l-2 10l-2.5 -10l-2 11.5l-2.5 -11.5l-2 16l-2.5 -16l-2 16l-2.5 -16l-2 12.5l-2 -12.5l-2.5 10l-2 -10l-2.5 11.5l-2 -11.5l-2.5 10l-2 -10l-2.5 10.5l-2 -10.5l-2.5 10l-2 -10l-2.5 11.5l-2 -11.5l-2.5 12l-2 -12l-2.5 9.5l-2 -9.5l-2.5 11l-2 -11l-2.5 12l-2 -12l-2.5 12l-2 -12l-2.5 10l-2 -10l-2 10.5l-2.5 -10.5l-2 10.5l-2.5 -10.5l-2 12l-2.5 -12l-2 10l-2.5 -10l-2 10l-2.5 -10l-2 16l-2.5 -16l-2 11l-2.5 -11l-2 11.5l-2.5 -11.5l-2 11l-2.5 -11l-2 9l-2.5 -9l-2 9.5l-2.5 -9.5l-2 10.5l-2.5 -10.5l-2 11.5l-2 -11.5l-2.5 11.5l-2 -11.5l-2.5 12.5l-2 -12.5l-2.5 9.5l-2 -9.5l-2.5 11l-2 -11l-2.5 11.5l-2 -11.5l-2.5 12l-2 -12l-2.5 10.5l-2 -10.5l-2.5 12l-2 -12l-2.5 10.5l-2 -10.5l-2.5 12l-2 -12l-2.5 11.5l-2 -11.5l-2.5 11.5l-2 -11.5l-2 9.5l-2.5 -9.5l-2 10l-2.5 -10l-2 11l-2.5 -11l-2 9l-2.5 -9l-2 11.5l-2.5 -11.5l-2 9l-2.5 -9l-2 16l-2.5 -16l-2 11.5l-2.5 -11.5l-2 12.5l-2.5 -12.5l-2 10.5l-2.5 -10.5l-2 11l-2.5 -11l-2 9.5l-2.5 -9.5l-2 16l-2 -16l-2.5 9l-2 -9l-2.5 12.5l-2 -12.5l-2.5 11l-2 -11l-2.5 11l-2 -11l-2.5 9.5l-2 -9.5l-2.5 9.5l-2 -9.5l-2.5 11l-2 -11l-2.5 10l-2 -10l-2.5 10l-2 -10l-2.5 9.5l-2 -9.5l-2.5 16l-2 -16l-2.5 12l-2 -12l-2 10l-2.5 -10l-2 11.5l-2.5 -11.5l-2 10l-2.5 -10l-2 12l-2.5 -12l-2 10l-2.5 -10l-2 11l-2.5 -11l-2 12.5l-2.5 -12.5l-2 10.5l-2.5 -10.5l-2 10l-2.5 -10l-2 9.5l-2.5 -9.5l-2 16l-2.5 -16l-2 12l-2.5 -12l-2 10l-2 -10l-2.5 9.5l-2 -9.5l-2.5 12l-2 -12l-2.5 10l-2 -10l-2.5 10l-2 -10l-2.5 12.5l-2 -12.5l-2.5 10l-2 -10l-2.5 9.5l-2 -9.5l-2.5 9.5l-2 -9.5l-2.5 10l-2 -10l-2.5 11l-2 -11l-2.5 12l-2 -12l-2.5 16l-2 -16l-2 9.5l-2.5 -9.5l-2 12.5l-2.5 -12.5l-2 9.5l-2.5 -9.5l-2 12l-2.5 -12l-2 9.5l-2.5 -9.5l-2 12.5l-2.5 -12.5l-2 12l-2.5 -12l-2 9l-2.5 -9l-2 12.5l-2.5 -12.5l-2 12l-2.5 -12l-2 11.5l-2.5 -11.5l-2 16l-2.5 -16l-2 10l-2 -10l-2.5 12l-2 -12l-2.5 12.5l-2 -12.5l-2.5 10.5l-2 -10.5l-2.5 11l-2 -11l-2.5 11l-2 -11l-2.5 10.5l-2 -10.5l-2.5 9l-2 -9l-2.5 10l-2 -10l-2.5 16l-2 -16l-2.5 16l-2 -16l-2.5 11.5l-2 -11.5l-2.5 12.5l-2 -12.5l-2 16l-2.5 -16l-2 9.5l-2.5 -9.5l-2 9.5l-2.5 -9.5l-2 11.5l-2.5 -11.5l-2 10l-2.5 -10l-2 11l-2.5 -11l-2 12.5l-2.5 -12.5l-2 16.5l-1.5 -17Z"/></defs><path d="M2 22.3H990M2 60.3H990" stroke="#000" stroke-width="1.2"/><g fill="#1c3606" stroke="#000" stroke-width="0.9" stroke-linejoin="round"><use href="#w7" transform="translate(-392 22.3)"/><use href="#w7" transform="translate(-392 60.3)"/></g></svg>
<div class="t" style="left:394px;top:737px;padding:3.5px 4px 1px 2.5px;height:17px;background:rgba(92,184,0,0.82);font-size:12px;letter-spacing:-0.3px;word-spacing:1px;font-weight:bold;color:#101010">009 - <span style="letter-spacing:-1.133px">SEQ</span></div>
<div style="left:17px;top:816px;width:40px;height:81px;background:#5cb800"></div>
<svg style="left:18.2px;top:817.2px;" width="21" height="17" viewBox="0 0 21 17"><path d="M0.7 9.7H3.2L3.9 8L4.9 11.5L6.2 5.9L7.7 13.9L9.8 2.9L11.2 12.1L12.9 7L14 11.1L15.1 9L16 9.7H17.8" stroke="#fff" stroke-width="1.8" fill="none" stroke-linejoin="round" stroke-linecap="round"/></svg>
<div class="t" style="left:33px;top:821px;width:20px;text-align:right;font-size:9.5px;color:#2a5a00">9</div>
<div style="left:63px;top:818px;width:45px;height:17px;background:linear-gradient(#606366,#484b4e);border:1px solid #141618;border-radius:3.5px"></div>
<div style="left:85px;top:819px;width:1px;height:15px;background:#0e0f10"></div>
<svg style="left:64px;top:819px;" width="43" height="15" viewBox="0 0 43 15"><g fill="#000"><rect x="6.9" y="4.1" width="8" height="2"/><rect x="6.9" y="4.1" width="2.2" height="7.8"/><rect x="9.9" y="5" width="2.1" height="6.9"/><rect x="12.8" y="4.1" width="2.1" height="7.8"/><rect x="28" y="4.1" width="8" height="2"/><rect x="28" y="4.1" width="2.3" height="5.5"/><rect x="28" y="7.9" width="8" height="1.7"/><rect x="33.7" y="7.9" width="2.3" height="4"/><rect x="28" y="10.1" width="8" height="1.8"/></g></svg>
<div class="t" style="left:111.5px;top:820.3px;font-size:14px;font-weight:bold;color:#ffffff;letter-spacing:-0.5px;word-spacing:1.5px">010 - <span style="letter-spacing:-0.929px">SEQ (D)</span></div>
<div style="left:112px;top:839px;width:46px;height:15px;background:#4b4e52;border-radius:3px"></div>
<div style="left:162px;top:839px;width:49px;height:15px;background:#4b4e52;border-radius:3px"></div>
<div style="left:215px;top:839px;width:46px;height:15px;background:#4b4e52;border-radius:3px"></div>
<svg style="left:112px;top:839px;" width="150" height="15" viewBox="0 0 150 15"><circle cx="11" cy="7.5" r="4" fill="#000"/><path d="M33 5.5h2l3-2.5v9l-3-2.5h-2z" fill="#000"/><path d="M58 9.5 C57 3,64 3,64 6 L58 9 C58 12,62 12.5,64 11" stroke="#000" stroke-width="1.5" fill="none"/><circle cx="81" cy="7.5" r="2.6" stroke="#000" stroke-width="1.5" fill="none"/><circle cx="85" cy="7.5" r="2.6" stroke="#000" stroke-width="1.5" fill="none"/><path d="M109 11.5V4h4.5a2 2 0 0 1 0 4h-4.5M112 8l3 3.5" stroke="#000" stroke-width="2" fill="none"/><path d="M134.5 4v7.5h7V4M138 4v7" stroke="#000" stroke-width="2" fill="none"/></svg>
<div style="left:64px;top:858px;width:34px;height:34px;border:1px solid #2b2e31;border-radius:3px"></div>
<div style="left:17px;top:897px;width:364px;height:1px;background:#5b5e61"></div>
<div style="left:371px;top:861px;width:3px;height:6px;background:#151515"></div>
<div style="left:375px;top:861px;width:3px;height:6px;background:#151515"></div>
<div style="left:371px;top:867px;width:3px;height:29px;background:linear-gradient(#2ae8d0,#1ed8f2 40%)"></div>
<div style="left:375px;top:867px;width:3px;height:29px;background:linear-gradient(#2ae8d0,#1ed8f2 40%)"></div>
<div style="left:383px;top:897px;width:9px;height:1px;background:#3a3e42"></div>
<div style="left:392px;top:897px;width:1000px;height:1px;background:#4a535c"></div>
<div style="left:392px;top:817px;width:1000px;height:79px;background:#2a5a00"></div>
<div style="left:393px;top:818px;width:1000px;height:77px;background:#8cf030"></div>
<div style="left:394px;top:819px;width:1000px;height:75px;background:#5cb800"></div>
<div style="left:421.22px;top:819px;width:1px;height:75px;background:rgba(0,30,0,0.45)"></div>
<div style="left:450.44px;top:819px;width:1px;height:75px;background:rgba(0,30,0,0.45)"></div>
<div style="left:479.66px;top:819px;width:1px;height:75px;background:rgba(0,30,0,0.45)"></div>
<div style="left:508.88px;top:819px;width:1px;height:75px;background:rgba(0,30,0,0.45)"></div>
<div style="left:538.10px;top:819px;width:1px;height:75px;background:rgba(0,30,0,0.45)"></div>
<div style="left:567.32px;top:819px;width:1px;height:75px;background:rgba(0,30,0,0.45)"></div>
<div style="left:596.54px;top:819px;width:1px;height:75px;background:rgba(0,30,0,0.45)"></div>
<div style="left:625.76px;top:819px;width:1px;height:75px;background:rgba(0,30,0,0.45)"></div>
<div style="left:654.98px;top:819px;width:1px;height:75px;background:rgba(0,30,0,0.45)"></div>
<div style="left:684.20px;top:819px;width:1px;height:75px;background:rgba(0,30,0,0.45)"></div>
<div style="left:713.42px;top:819px;width:1px;height:75px;background:rgba(0,30,0,0.45)"></div>
<div style="left:742.64px;top:819px;width:1px;height:75px;background:rgba(0,30,0,0.45)"></div>
<div style="left:771.86px;top:819px;width:1px;height:75px;background:rgba(0,30,0,0.45)"></div>
<div style="left:801.08px;top:819px;width:1px;height:75px;background:rgba(0,30,0,0.45)"></div>
<div style="left:830.30px;top:819px;width:1px;height:75px;background:rgba(0,30,0,0.45)"></div>
<div style="left:859.52px;top:819px;width:1px;height:75px;background:rgba(0,30,0,0.45)"></div>
<div style="left:888.74px;top:819px;width:1px;height:75px;background:rgba(0,30,0,0.45)"></div>
<div style="left:917.96px;top:819px;width:1px;height:75px;background:rgba(0,30,0,0.45)"></div>
<div style="left:947.18px;top:819px;width:1px;height:75px;background:rgba(0,30,0,0.45)"></div>
<div style="left:976.40px;top:819px;width:1px;height:75px;background:rgba(0,30,0,0.45)"></div>
<div style="left:1005.62px;top:819px;width:1px;height:75px;background:rgba(0,30,0,0.45)"></div>
<div style="left:1034.84px;top:819px;width:1px;height:75px;background:rgba(0,30,0,0.45)"></div>
<div style="left:1064.06px;top:819px;width:1px;height:75px;background:rgba(0,30,0,0.45)"></div>
<div style="left:1093.28px;top:819px;width:1px;height:75px;background:rgba(0,30,0,0.45)"></div>
<div style="left:1122.50px;top:819px;width:1px;height:75px;background:rgba(0,30,0,0.45)"></div>
<div style="left:1151.72px;top:819px;width:1px;height:75px;background:rgba(0,30,0,0.45)"></div>
<div style="left:1180.94px;top:819px;width:1px;height:75px;background:rgba(0,30,0,0.45)"></div>
<div style="left:1210.16px;top:819px;width:1px;height:75px;background:rgba(0,30,0,0.45)"></div>
<div style="left:1239.38px;top:819px;width:1px;height:75px;background:rgba(0,30,0,0.45)"></div>
<div style="left:1268.60px;top:819px;width:1px;height:75px;background:rgba(0,30,0,0.45)"></div>
<div style="left:1297.82px;top:819px;width:1px;height:75px;background:rgba(0,30,0,0.45)"></div>
<div style="left:1327.04px;top:819px;width:1px;height:75px;background:rgba(0,30,0,0.45)"></div>
<div style="left:1356.26px;top:819px;width:1px;height:75px;background:rgba(0,30,0,0.45)"></div>
<svg style="left:392px;top:816px;" width="982" height="82" viewBox="0 0 982 82"><defs><path id="w8" d="M502 0l1.5 -5l2 4.5l2.5 -4.5l2 4.5l2.5 -4.5l2 4.5l2.5 -4l2 4l2.5 -4l2 4l2.5 -4l2 4l2.5 -4l2 4l2.5 -4.5l2 4.5l2 -4.5l2.5 4.5l2 -4.5l2.5 4.5l2 -4.5l2.5 4.5l2 -4.5l2.5 4.5l2 -4l2.5 4l2 -4.5l2.5 4.5l2 -4l2.5 4l2 -4.5l2.5 4.5l2 -4l2.5 4l2 -4.5l2.5 4.5l2 -4l2.5 4l2 -4.5l2.5 4.5l2 -4l2 4l2.5 -4.5l2 4.5l2.5 -4.5l2 4.5l2.5 -4l2 4l2.5 -4l2 4l2.5 -4.5l2 4.5l2.5 -4.5l2 4.5l2.5 -4l2 4l2.5 -4.5l2 4.5l2.5 -4.5l2 4.5l2.5 -4l2 4l2.5 -4.5l2 4.5l2.5 -4l2 4l2 -4l2.5 4l2 -4.5l2.5 4.5l2 -4l2.5 4l2 -4.5l2.5 4.5l2 -4l2.5 4l2 -4l2.5 4l2 -4.5l2.5 4.5l2 -4.5l2.5 4.5l2 -4.5l2.5 4.5l2 -4.5l2.5 4.5l2 -4.5l2.5 4.5l2 -4l2.5 4l2 -4l2 4l2.5 -4.5l2 4.5l2.5 -4.5l2 4.5l2.5 -4.5l2 4.5l2.5 -4.5l2 4.5l2.5 -4l2 4l2.5 -4l2 4l2.5 -4.5l2 4.5l2.5 -4.5l2 4.5l2.5 -4l2 4l2.5 -4l2 4l2.5 -4l2 4l2.5 -4.5l2 4.5l2 -4.5l2.5 4.5l2 -4.5l2.5 4.5l2 -4l2.5 4l2 -4.5l2.5 4.5l2 -4.5l2.5 4.5l2 -4.5l2.5 4.5l2 -4l2.5 4l2 -4.5l2.5 4.5l2 -4l2.5 4l2 -4.5l2.5 4.5l2 -4l2.5 4l2 -4.5l2.5 4.5l2 -4l2 4l2.5 -4.5l2 4.5l2.5 -4l2 4l2.5 -4l2 4l2.5 -4l2 4l2.5 -4.5l2 4.5l2.5 -4l2 4l2.5 -4.5l2 4.5l2.5 -4l2 4l2.5 -4l2 4l2.5 -4.5l2 4.5l2.5 -4.5l2 4.5l2.5 -4.5l2 4.5l2 -4.5l2.5 4.5l2 -4l2.5 4l2 -4.5l2.5 4.5l2 -4l2.5 4l2 -4l2.5 4l2 -4.5l2.5 4.5l2 -4.5l2.5 4.5l2 -4l2.5 4l2 -4l2.5 4l2 -4.5l2.5 4.5l2 -4l2.5 4l2 -4l2.5 4l2 -4l2 4l2.5 -4l2 4l2.5 -4.5l2 4.5l2.5 -4.5l2 4.5l2.5 -4.5l2 4.5l2.5 -4.5l2 4.5l2.5 -4l2 4l2.5 -4l2 4l2.5 -4.5l2 4.5l2.5 -4.5l2 4.5l2.5 -4.5l2 4.5l2.5 -4l2 4l2.5 -4.5l2 4.5l2 -4.5l2.5 4.5l2 -4.5l2.5 4.5l2 -4l2.5 4l2 -4.5l2.5 4.5l2 -4.5l2.5 4.5l2 -4l2.5 4l2 -4l2.5 4l2 -4.5l2.5 4.5l2 -4l2.5 4l2 -4.5l2.5 4.5l2 -4.5l2.5 4.5l2 -4.5l2.5 4.5l2 -4.5l2 4.5l2.5 -4l2 4l2.5 -4l2 4l2.5 -4l2 4l2.5 -4.5l2 4.5l2.5 -4.5l2 4.5l2.5 -4l2 4l2.5 -4.5l2 4.5l2.5 -4.5l2 4.5l2.5 -4l2 4l2.5 -4.5l2 4.5l2.5 -4.5l2 4.5l2.5 -4.5l2 4.5l2 -4.5l2.5 4.5l2 -4.5l2.5 4.5l2 -4.5l2.5 4.5l2 -4.5l2.5 4.5l2 -4.5l2.5 4.5l2 -4.5l2.5 4.5l2 -4.5l2.5 4.5l2 -4.5l2.5 4.5l2 -4.5l2.5 4.5l2 -4l2.5 4l2 -4l2.5 4l2 -4.5l2.5 4.5l2 -4.5l2 4.5l2.5 -4l2 4l2.5 -4.5l2 4.5l2.5 -4.5l2 4.5l2.5 -4.5l2 4.5l2.5 -4.5l2 4.5l2.5 -4.5l2 4.5l2.5 -4.5l2 4.5l2.5 -4.5l2 4.5l2.5 -4l2 4l2.5 -4l2 4l2.5 -4l2 4l2.5 -4l2 4l2 -4.5l2.5 4.5l2 -4.5l2.5 4.5l2 -4.5l2.5 4.5l2 -4.5l2.5 4.5l2 -4l2.5 4l2 -4.5l2.5 4.5l2 -4.5l2.5 4.5l2 -4l2.5 4l2 -4l2.5 4l2 -4.5l2.5 4.5l2 -4l2.5 4l2 -4.5l2.5 4.5l2 -4l2 4l2.5 -4l2 4l2.5 -4l2 4l2.5 -4.5l2 4.5l2.5 -4.5l2 4.5l2.5 -4.5l2 4.5l2.5 -4.5l2 4.5l2.5 -4l2 4l2.5 -4l2 4l2.5 -4.5l2 4.5l2.5 -4.5l2 4.5l2.5 -4l2 4l2.5 -4.5l2 4.5l2 -4l2.5 4l2 -4l2.5 4l2 -4l2.5 4l2 -4.5l2.5 4.5l2 -4l2.5 4l2 -4l2.5 4l2 -4l2.5 4l2 -4l2.5 4l2 -4.5l2.5 4.5l2 -4l2.5 4l2 -4.5l2.5 4.5l2 -4.5l2.5 4.5l0 1l-2.5 4.5l-2 -4.5l-2.5 5l-2 -5l-2.5 4.5l-2 -4.5l-2.5 4.5l-2 -4.5l-2.5 4.5l-2 -4.5l-2.5 4.5l-2 -4.5l-2.5 4.5l-2 -4.5l-2.5 4.5l-2 -4.5l-2.5 5l-2 -5l-2.5 4.5l-2 -4.5l-2.5 4.5l-2 -4.5l-2.5 4.5l-2 -4.5l-2 5l-2.5 -5l-2 4.5l-2.5 -4.5l-2 4.5l-2.5 -4.5l-2 4.5l-2.5 -4.5l-2 4.5l-2.5 -4.5l-2 4.5l-2.5 -4.5l-2 5l-2.5 -5l-2 5l-2.5 -5l-2 5l-2.5 -5l-2 5l-2.5 -5l-2 4.5l-2.5 -4.5l-2 4.5l-2.5 -4.5l-2 4.5l-2 -4.5l-2.5 5l-2 -5l-2.5 4.5l-2 -4.5l-2.5 4.5l-2 -4.5l-2.5 4.5l-2 -4.5l-2.5 4.5l-2 -4.5l-2.5 5l-2 -5l-2.5 4.5l-2 -4.5l-2.5 4.5l-2 -4.5l-2.5 4.5l-2 -4.5l-2.5 4.5l-2 -4.5l-2.5 5l-2 -5l-2.5 5l-2 -5l-2 4.5l-2.5 -4.5l-2 4.5l-2.5 -4.5l-2 4.5l-2.5 -4.5l-2 4.5l-2.5 -4.5l-2 5l-2.5 -5l-2 4.5l-2.5 -4.5l-2 5l-2.5 -5l-2 5l-2.5 -5l-2 5l-2.5 -5l-2 5l-2.5 -5l-2 5l-2.5 -5l-2 4.5l-2.5 -4.5l-2 4.5l-2 -4.5l-2.5 5l-2 -5l-2.5 4.5l-2 -4.5l-2.5 4.5l-2 -4.5l-2.5 4.5l-2 -4.5l-2.5 5l-2 -5l-2.5 5l-2 -5l-2.5 4.5l-2 -4.5l-2.5 4.5l-2 -4.5l-2.5 5l-2 -5l-2.5 5l-2 -5l-2.5 5l-2 -5l-2.5 4.5l-2 -4.5l-2 4.5l-2.5 -4.5l-2 5l-2.5 -5l-2 4.5l-2.5 -4.5l-2 4.5l-2.5 -4.5l-2 4.5l-2.5 -4.5l-2 5l-2.5 -5l-2 4.5l-2.5 -4.5l-2 5l-2.5 -5l-2 5l-2.5 -5l-2 4.5l-2.5 -4.5l-2 4.5l-2.5 -4.5l-2 4.5l-2.5 -4.5l-2 5l-2 -5l-2.5 5l-2 -5l-2.5 4.5l-2 -4.5l-2.5 5l-2 -5l-2.5 4.5l-2 -4.5l-2.5 5l-2 -5l-2.5 4.5l-2 -4.5l-2.5 4.5l-2 -4.5l-2.5 5l-2 -5l-2.5 5l-2 -5l-2.5 4.5l-2 -4.5l-2.5 4.5l-2 -4.5l-2.5 4.5l-2 -4.5l-2 4.5l-2.5 -4.5l-2 4.5l-2.5 -4.5l-2 5l-2.5 -5l-2 5l-2.5 -5l-2 5l-2.5 -5l-2 4.5l-2.5 -4.5l-2 4.5l-2.5 -4.5l-2 4.5l-2.5 -4.5l-2 5l-2.5 -5l-2 5l-2.5 -5l-2 4.5l-2.5 -4.5l-2 4.5l-2.5 -4.5l-2 4.5l-2 -4.5l-2.5 4.5l-2 -4.5l-2.5 4.5l-2 -4.5l-2.5 5l-2 -5l-2.5 4.5l-2 -4.5l-2.5 4.5l-2 -4.5l-2.5 5l-2 -5l-2.5 5l-2 -5l-2.5 4.5l-2 -4.5l-2.5 4.5l-2 -4.5l-2.5 5l-2 -5l-2.5 4.5l-2 -4.5l-2.5 5l-2 -5l-2 4.5l-2.5 -4.5l-2 5l-2.5 -5l-2 4.5l-2.5 -4.5l-2 4.5l-2.5 -4.5l-2 4.5l-2.5 -4.5l-2 4.5l-2.5 -4.5l-2 4.5l-2.5 -4.5l-2 5l-2.5 -5l-2 4.5l-2.5 -4.5l-2 4.5l-2.5 -4.5l-2 4.5l-2.5 -4.5l-2 5l-2.5 -5l-2 4.5l-2 -4.5l-2.5 4.5l-2 -4.5l-2.5 4.5l-2 -4.5l-2.5 5l-2 -5l-2.5 4.5l-2 -4.5l-2.5 4.5l-2 -4.5l-2.5 4.5l-2 -4.5l-2.5 4.5l-2 -4.5l-2.5 4.5l-2 -4.5l-2.5 5l-2 -5l-2.5 4.5l-2 -4.5l-2.5 4.5l-2 -4.5l-2.5 5l-2 -5l-2 4.5l-2.5 -4.5l-2 4.5l-2.5 -4.5l-2 4.5l-2.5 -4.5l-2 4.5l-2.5 -4.5l-2 5l-2.5 -5l-2 5l-2.5 -5l-2 4.5l-2.5 -4.5l-2 4.5l-2.5 -4.5l-2 5l-2.5 -5l-2 5l-2.5 -5l-2 5l-2.5 -5l-2 5l-2.5 -5l-2 4.5l-2 -4.5l-2.5 4.5l-2 -4.5l-2.5 4.5l-2 -4.5l-2.5 4.5l-2 -4.5l-2.5 4.5l-2 -4.5l-2.5 4.5l-2 -4.5l-2.5 5l-2 -5l-2.5 4.5l-2 -4.5l-2.5 4.5l-2 -4.5l-2.5 5l-2 -5l-2.5 4.5l-2 -4.5l-2.5 4.5l-2 -4.5l-2.5 4.5l-2 -4.5l-2 4.5l-2.5 -4.5l-2 4.5l-2.5 -4.5l-2 4.5l-2.5 -4.5l-2 5l-2.5 -5l-2 5l-2.5 -5l-2 4.5l-2.5 -4.5l-2 4.5l-2.5 -4.5l-2 5l-2.5 -5l-2 4.5l-2.5 -4.5l-2 4.5l-2.5 -4.5l-2 5l-2.5 -5l-2 4.5l-2.5 -4.5l-2 4.5l-2 -4.5l-2.5 5l-2 -5l-2.5 4.5l-2 -4.5l-2.5 5l-2 -5l-2.5 4.5l-2 -4.5l-2.5 5l-2 -5l-2.5 4.5l-2 -4.5l-2.5 4.5l-2 -4.5l-2.5 4.5l-2 -4.5l-2.5 5l-2 -5l-2.5 4.5l-2 -4.5l-2.5 4.5l-2 -4.5l-2.5 5l-2 -5l-2 5l-2.5 -5l-2 4.5l-2.5 -4.5l-2 4.5l-2.5 -4.5l-2 4.5l-2.5 -4.5l-2 4.5l-2.5 -4.5l-2 5l-2.5 -5l-2 5l-2.5 -5l-2 4.5l-1.5 -5Z"/></defs><path d="M2 22.3H990M2 60.3H990" stroke="#000" stroke-width="1.2"/><g fill="#1c3606" stroke="#000" stroke-width="0.9" stroke-linejoin="round"><use href="#w8" transform="translate(-392 22.3)"/><use href="#w8" transform="translate(-392 60.3)"/></g></svg>
<div class="t" style="left:394px;top:819px;padding:3.5px 4px 1px 2.5px;height:17px;background:rgba(92,184,0,0.82);font-size:12px;letter-spacing:-0.3px;word-spacing:1px;font-weight:bold;color:#101010">010 - <span style="letter-spacing:-0.800px">SEQ (D)</span></div>
<div style="left:17px;top:898px;width:40px;height:81px;background:#5cb800"></div>
<svg style="left:18.2px;top:899.2px;" width="21" height="17" viewBox="0 0 21 17"><path d="M0.7 9.7H3.2L3.9 8L4.9 11.5L6.2 5.9L7.7 13.9L9.8 2.9L11.2 12.1L12.9 7L14 11.1L15.1 9L16 9.7H17.8" stroke="#fff" stroke-width="1.8" fill="none" stroke-linejoin="round" stroke-linecap="round"/></svg>
<div class="t" style="left:33px;top:903px;width:20px;text-align:right;font-size:9.5px;color:#2a5a00">10</div>
<div style="left:63px;top:900px;width:45px;height:17px;background:linear-gradient(#606366,#484b4e);border:1px solid #141618;border-radius:3.5px"></div>
<div style="left:85px;top:901px;width:1px;height:15px;background:#0e0f10"></div>
<svg style="left:64px;top:901px;" width="43" height="15" viewBox="0 0 43 15"><g fill="#000"><rect x="6.9" y="4.1" width="8" height="2"/><rect x="6.9" y="4.1" width="2.2" height="7.8"/><rect x="9.9" y="5" width="2.1" height="6.9"/><rect x="12.8" y="4.1" width="2.1" height="7.8"/><rect x="28" y="4.1" width="8" height="2"/><rect x="28" y="4.1" width="2.3" height="5.5"/><rect x="28" y="7.9" width="8" height="1.7"/><rect x="33.7" y="7.9" width="2.3" height="4"/><rect x="28" y="10.1" width="8" height="1.8"/></g></svg>
<div class="t" style="left:111.5px;top:902.3px;font-size:14px;font-weight:bold;color:#ffffff;letter-spacing:-0.5px;word-spacing:1.5px">011 - <span style="letter-spacing:-0.380px">MAIN SYNTH</span></div>
<div style="left:112px;top:921px;width:46px;height:15px;background:#4b4e52;border-radius:3px"></div>
<div style="left:162px;top:921px;width:49px;height:15px;background:#4b4e52;border-radius:3px"></div>
<div style="left:215px;top:921px;width:46px;height:15px;background:#4b4e52;border-radius:3px"></div>
<svg style="left:112px;top:921px;" width="150" height="15" viewBox="0 0 150 15"><circle cx="11" cy="7.5" r="4" fill="#000"/><path d="M33 5.5h2l3-2.5v9l-3-2.5h-2z" fill="#000"/><path d="M58 9.5 C57 3,64 3,64 6 L58 9 C58 12,62 12.5,64 11" stroke="#000" stroke-width="1.5" fill="none"/><circle cx="81" cy="7.5" r="2.6" stroke="#000" stroke-width="1.5" fill="none"/><circle cx="85" cy="7.5" r="2.6" stroke="#000" stroke-width="1.5" fill="none"/><path d="M109 11.5V4h4.5a2 2 0 0 1 0 4h-4.5M112 8l3 3.5" stroke="#000" stroke-width="2" fill="none"/><path d="M134.5 4v7.5h7V4M138 4v7" stroke="#000" stroke-width="2" fill="none"/></svg>
<div style="left:64px;top:940px;width:34px;height:34px;border:1px solid #2b2e31;border-radius:3px"></div>
<div style="left:17px;top:979px;width:364px;height:1px;background:#5b5e61"></div>
<div style="left:371px;top:942px;width:3px;height:36px;background:linear-gradient(#2ae8d0,#1ed8f2 40%)"></div>
<div style="left:375px;top:944px;width:3px;height:34px;background:linear-gradient(#2ae8d0,#1ed8f2 40%)"></div>
<div style="left:383px;top:979px;width:9px;height:1px;background:#3a3e42"></div>
<div style="left:392px;top:979px;width:1000px;height:1px;background:#4a535c"></div>
<div style="left:392px;top:899px;width:1000px;height:79px;background:#2a5a00"></div>
<div style="left:393px;top:900px;width:1000px;height:77px;background:#8cf030"></div>
<div style="left:394px;top:901px;width:1000px;height:75px;background:#5cb800"></div>
<div style="left:421.22px;top:901px;width:1px;height:75px;background:rgba(0,30,0,0.45)"></div>
<div style="left:450.44px;top:901px;width:1px;height:75px;background:rgba(0,30,0,0.45)"></div>
<div style="left:479.66px;top:901px;width:1px;height:75px;background:rgba(0,30,0,0.45)"></div>
<div style="left:508.88px;top:901px;width:1px;height:75px;background:rgba(0,30,0,0.45)"></div>
<div style="left:538.10px;top:901px;width:1px;height:75px;background:rgba(0,30,0,0.45)"></div>
<div style="left:567.32px;top:901px;width:1px;height:75px;background:rgba(0,30,0,0.45)"></div>
<div style="left:596.54px;top:901px;width:1px;height:75px;background:rgba(0,30,0,0.45)"></div>
<div style="left:625.76px;top:901px;width:1px;height:75px;background:rgba(0,30,0,0.45)"></div>
<div style="left:654.98px;top:901px;width:1px;height:75px;background:rgba(0,30,0,0.45)"></div>
<div style="left:684.20px;top:901px;width:1px;height:75px;background:rgba(0,30,0,0.45)"></div>
<div style="left:713.42px;top:901px;width:1px;height:75px;background:rgba(0,30,0,0.45)"></div>
<div style="left:742.64px;top:901px;width:1px;height:75px;background:rgba(0,30,0,0.45)"></div>
<div style="left:771.86px;top:901px;width:1px;height:75px;background:rgba(0,30,0,0.45)"></div>
<div style="left:801.08px;top:901px;width:1px;height:75px;background:rgba(0,30,0,0.45)"></div>
<div style="left:830.30px;top:901px;width:1px;height:75px;background:rgba(0,30,0,0.45)"></div>
<div style="left:859.52px;top:901px;width:1px;height:75px;background:rgba(0,30,0,0.45)"></div>
<div style="left:888.74px;top:901px;width:1px;height:75px;background:rgba(0,30,0,0.45)"></div>
<div style="left:917.96px;top:901px;width:1px;height:75px;background:rgba(0,30,0,0.45)"></div>
<div style="left:947.18px;top:901px;width:1px;height:75px;background:rgba(0,30,0,0.45)"></div>
<div style="left:976.40px;top:901px;width:1px;height:75px;background:rgba(0,30,0,0.45)"></div>
<div style="left:1005.62px;top:901px;width:1px;height:75px;background:rgba(0,30,0,0.45)"></div>
<div style="left:1034.84px;top:901px;width:1px;height:75px;background:rgba(0,30,0,0.45)"></div>
<div style="left:1064.06px;top:901px;width:1px;height:75px;background:rgba(0,30,0,0.45)"></div>
<div style="left:1093.28px;top:901px;width:1px;height:75px;background:rgba(0,30,0,0.45)"></div>
<div style="left:1122.50px;top:901px;width:1px;height:75px;background:rgba(0,30,0,0.45)"></div>
<div style="left:1151.72px;top:901px;width:1px;height:75px;background:rgba(0,30,0,0.45)"></div>
<div style="left:1180.94px;top:901px;width:1px;height:75px;background:rgba(0,30,0,0.45)"></div>
<div style="left:1210.16px;top:901px;width:1px;height:75px;background:rgba(0,30,0,0.45)"></div>
<div style="left:1239.38px;top:901px;width:1px;height:75px;background:rgba(0,30,0,0.45)"></div>
<div style="left:1268.60px;top:901px;width:1px;height:75px;background:rgba(0,30,0,0.45)"></div>
<div style="left:1297.82px;top:901px;width:1px;height:75px;background:rgba(0,30,0,0.45)"></div>
<div style="left:1327.04px;top:901px;width:1px;height:75px;background:rgba(0,30,0,0.45)"></div>
<div style="left:1356.26px;top:901px;width:1px;height:75px;background:rgba(0,30,0,0.45)"></div>
<svg style="left:392px;top:898px;" width="982" height="82" viewBox="0 0 982 82"><defs><path id="w9" d="M664.5 0l.5 -3l1 -4l1 .5l1 .5l1 -1l1 .5l1 0l1 0l1 .5l1 -1l1 0l1 1.5l1 -.5l1 1.5l1 1.5l1 -3l1 0l1 -.5l1 0l1 -.5l1 -1l1 1l1 -.5l1 0l1 .5l1 .5l1 1l1 1l1 .5l1 -1l1 -1l1 -.5l1 0l1 0l1 -.5l1 -.5l1 1l1 -.5l1 1l1 -1l1 .5l1 -.5l1 1l1 -1l1 1l1 .5l1 -1l1 .5l1 1.5l1 .5l1 -1.5l1 1l1 -.5l1 -1l1 1l1 -1l1 -.5l1 0l1 0l1 .5l1 -.5l1 -1l1 1.5l1 0l1 .5l1 -1.5l1 1l1 -.5l1 1l1 -1l1 .5l1 -.5l1 1l1 .5l1 0l1 .5l1 0l1 .5l1 -1l1 -1l1 .5l1 0l1 -.5l1 0l1 -.5l1 -.5l1 2l1 0l1 -1l1 .5l1 0l1 2l1 -1.5l1 -.5l1 -1.5l1 1l1 -1l1 .5l1 0l1 .5l1 -.5l1 0l1 .5l1 1l1 0l1 .5l1 -1.5l1 .5l1 -1.5l1 1l1 0l1 0l1 -1l1 1l1 -.5l1 0l1 0l1 1.5l1 1l1 0l1 -.5l1 -1l1 -.5l1 -.5l1 -.5l1 1l1 -.5l1 0l1 -.5l1 1.5l1 -1l1 .5l1 1.5l1 1.5l1 -2.5l1 -.5l1 .5l1 -.5l1 -.5l1 1l1 -.5l1 -.5l1 0l1 .5l1 1l1 -1l1 1l1 2l1 -3l1 1l1 -1.5l1 0l1 .5l1 .5l1 -1l1 1l1 -1l1 0l1 .5l1 1l1 0l1 2l1 -2.5l1 -1.5l1 1l1 0l1 -1l1 -1l1 1.5l1 -1l1 1l1 -1l1 2l1 .5l1 -.5l1 1l1 .5l1 -1l1 -.5l1 0l1 0l1 -1l1 1.5l1 0l1 -1l1 0l1 -.5l1 .5l1 .5l1 -.5l1 0l1 .5l1 0l1 .5l1 .5l1 .5l1 -.5l1 0l1 -2.5l1 1l1 -1l1 .5l1 0l1 -1l1 0l1 0l1 .5l1 1l1 .5l1 1l1 1.5l1 -2.5l1 0l1 -.5l1 -.5l1 -.5l1 1.5l1 -1l1 -.5l1 1.5l1 -.5l1 .5l1 0l1 0l1 2.5l1 -1.5l1 -.5l1 0l1 -1l1 1l1 -.5l1 .5l1 -.5l1 .5l1 -1l1 -.5l1 0l1 1l1 -1l1 1l1 -.5l1 .5l1 .5l1 -.5l1 0l1 .5l1 -1l1 1.5l1 0l1 -1l1 .5l1 1.5l1 0l1 -2.5l1 -.5l1 .5l1 -.5l1 -.5l1 1l1 -1l1 -1l1 .5l1 0l1 1l1 -1.5l1 1.5l1 -1.5l1 1.5l1 .5l1 -.5l1 1.5l1 -1l1 1l1 .5l1 .5l1 -1.5l1 -.5l1 -.5l1 .5l1 -1l1 .5l1 -.5l1 -.5l1 1l1 -1l1 0l1 0l1 0l1 1.5l1 -1.5l1 0l1 .5l1 .5l1 1l1 -1.5l1 0l1 1l1 .5l1 0l1 1l1 1l1 .5l1 -1.5l1 0l1 0l1 -.5l1 -.5l1 .5l1 -1.5l1 .5l1 -.5l1 0l1 .5l1 0l1 1l1 -1l1 1l1 -.5l1 0l1 -.5l1 0l1 .5l1 .5l1 -1l1 0l1 1.5l1 .5l1 -.5l1 1l1 .5l1 -1.5l1 -1l1 .5l1 -1.5l1 1.5l1 -2l1 1.5l1 0l1 -.5l1 0l1 0l1 .5l1 -1l1 .5l1 -.5l1 .5l1 1.5l1 0l1 0l1 -.5l1 1l1 -.5l1 -.5l1 -1l1 .5l1 -.5l1 .5l1 0l1 0l1 -1l1 .5l1 .5l1 -1.5l1 .5l1 1l1 -.5l1 -.5l1 -.5l1 1l1 .5l1 -1l1 0l1 0l1 1l1 0l1 0l1 1l1 -.5l1 2l1 -1.5l1 -.5l1 .5l1 -1.5l1 1l1 -1l1 1l1 -1l1 .5l1 -.5l1 -.5l1 .5l1 0l1 0l1 .5l1 -1l1 0l1 1l1 0l1 0l1 0l1 .5l1 .5l1 -.5l1 .5l1 .5l1 0l1 1l1 -1.5l1 -1l1 -1l1 1l1 -1l1 -.5l1 1.5l1 0l1 0l1 -1l1 1.5l1 -.5l1 1.5l1 -.5l1 0l1 -.5l1 -1.5l1 1l1 -1l1 0l1 .5l1 -1l1 1l1 -1.5l1 0l1 .5l1 0l1 0l1 0l1 1l1 1l1 -1l1 .5l1 1l1 1l1 -1l1 -.5l1 -.5l1 -.5l1 0l1 1l1 0l1 -1.5l1 1l1 0l1 -1l1 .5l1 -.5l1 0l1 1l1 .5l1 -1l1 -.5l1 0l1 .5l1 1l1 -.5l1 1l1 0l1 -.5l1 .5l1 .5l1 .5l1 -1l1 0l1 -1.5l1 -.5l1 .5l1 -.5l1 0l1 1l1 -1l1 1l1 -.5l1 -.5l1 1l1 .5l1 -.5l1 0l1 -.5l1 0l1 1.5l1 0l1 0l1 -.5l1 .5l1 -1.5l1 .5l1 0l1 0l1 -.5l1 -.5l1 1l1 0l1 -1l1 .5l1 2l1 1l1 -3l1 0l1 0l1 .5l1 -1.5l1 1l1 -.5l1 0l1 -.5l1 0l1 .5l1 2l1 -1l1 1l1 -1l1 .5l1 0l1 -2l1 1.5l1 -1l1 0l1 -.5l1 1l1 -.5l1 1.5l1 -1l1 1.5l1 1l1 -2l1 -1l1 0l1 .5l1 -1.5l1 1.5l1 0l1 -1.5l1 .5l1 1l1 .5l1 -.5l1 1l1 .5l1 -1l1 -1l1 1l1 0l1 -1.5l1 0l1 .5l1 -.5l1 0l1 2l1 -1.5l1 2l1 -.5l1 1.5l1 -2l1 .5l1 -.5l1 0l1 -.5l1 1l1 -1.5l1 1l1 -1l1 1.5l1 -.5l1 .5l1 -.5l1 -.5l1 .5l1 0l1 -1l1 1.5l1 .5l1 0l1 0l1 -2.5l1 0l1 -.5l1 0l1 -2l1 0l1 -.5l1 1.5l1 0l1 .5l1 -.5l1 1l1 0l1 2l1 -2.5l1 1l1 -2l1 .5l1 0l1 .5l1 -1l1 -.5l1 2l1 .5l1 0l1 -.5l1 1.5l1 1l1 0l1 0l1 0l1 -1l1 0l1 1l1 -1.5l1 1l1 0l1 -1l1 .5l1 0l1 -.5l1 1l1 .5l1 -.5l1 -1l1 1l1 -.5l1 0l1 -.5l1 1l1 1l1 .5l1 -1l1 0l1 .5l1 -.5l1 -1.5l1 0l1 -1l1 -1l1 0l1 -1l1 0l1 0l1 0l1 .5l1 0l1 -.5l1 1l1 0l1 .5l1 -1l1 .5l1 2l1 0l1 1.5l1 0l1 .5l1 -1l1 .5l1 -1.5l1 1l1 -1l1 -.5l1 .5l1 1l1 -.5l1 .5l1 0l1 .5l1 .5l1 0l1 -.5l1 0l1 -.5l1 -1l1 .5l1 -.5l1 -.5l1 1.5l1 -1l1 -.5l1 0l1 0l1 1l1 .5l1 -.5l1 0l1 0l1 1l1 1l1 .5l1 -2l1 1.5l1 -.5l1 -.5l1 0l1 -.5l1 0l1 -.5l1 0l1 -.5l1 -.5l1 1l1 -.5l1 1l1 0l1 -1l1 0l0 14l-1 -.5l-1 -1l-1 0l-1 1l-1 -.5l-1 1l-1 -.5l-1 -.5l-1 0l-1 -.5l-1 -.5l-1 0l-1 0l-1 -.5l-1 -.5l-1 1.5l-1 -2l-1 0l-1 1.5l-1 1l-1 0l-1 0l-1 -.5l-1 .5l-1 1l-1 0l-1 0l-1 -.5l-1 -1l-1 1.5l-1 0l-1 -1l-1 .5l-1 -1l-1 -.5l-1 0l-1 -.5l-1 -.5l-1 .5l-1 1l-1 0l-1 .5l-1 -.5l-1 1l-1 .5l-1 -.5l-1 -1l-1 1l-1 -1.5l-1 .5l-1 -1.5l-1 1l-1 0l-1 1.5l-1 0l-1 2l-1 .5l-1 -1l-1 .5l-1 0l-1 1l-1 0l-1 0l-1 .5l-1 0l-1 -.5l-1 0l-1 -.5l-1 0l-1 -1l-1 -1.5l-1 0l-1 -2l-1 -.5l-1 1l-1 -.5l-1 -.5l-1 0l-1 1.5l-1 1l-1 -.5l-1 0l-1 -.5l-1 1l-1 -1l-1 -.5l-1 .5l-1 1.5l-1 -1l-1 0l-1 .5l-1 -1l-1 0l-1 1l-1 -1.5l-1 1l-1 0l-1 -1l-1 0l-1 0l-1 0l-1 .5l-1 2l-1 -.5l-1 .5l-1 0l-1 2l-1 -.5l-1 -1l-1 1l-1 0l-1 0l-1 -2l-1 1l-1 -2.5l-1 2.5l-1 -.5l-1 1l-1 0l-1 0l-1 0l-1 2l-1 -.5l-1 -.5l-1 -2l-1 0l-1 -.5l-1 0l-1 -3l-1 0l-1 .5l-1 .5l-1 1.5l-1 -1l-1 0l-1 .5l-1 -.5l-1 -.5l-1 .5l-1 -.5l-1 1.5l-1 -1l-1 1l-1 -1.5l-1 1l-1 -.5l-1 0l-1 -.5l-1 0l-1 -1.5l-1 1.5l-1 -.5l-1 2l-1 -1.5l-1 2l-1 0l-1 -.5l-1 .5l-1 0l-1 -1.5l-1 0l-1 1l-1 -1l-1 -1l-1 .5l-1 1l-1 -1l-1 1l-1 1.5l-1 0l-1 -1.5l-1 0l-1 1.5l-1 -1.5l-1 .5l-1 0l-1 -1l-1 -2l-1 1l-1 1.5l-1 -1l-1 1.5l-1 -.5l-1 1l-1 -.5l-1 0l-1 -1l-1 1.5l-1 -2l-1 -.5l-1 1l-1 -1l-1 1l-1 -1l-1 2l-1 .5l-1 0l-1 -.5l-1 0l-1 -.5l-1 1l-1 -1.5l-1 .5l-1 0l-1 -.5l-1 -2.5l-1 1l-1 2l-1 .5l-1 -1l-1 0l-1 1l-1 -.5l-1 -.5l-1 0l-1 0l-1 .5l-1 -1.5l-1 0l-1 -.5l-1 .5l-1 -.5l-1 2l-1 0l-1 -1l-1 .5l-1 -.5l-1 .5l-1 1l-1 -.5l-1 -.5l-1 1l-1 -1l-1 1l-1 0l-1 -.5l-1 .5l-1 -.5l-1 -1.5l-1 0l-1 -1l-1 .5l-1 .5l-1 .5l-1 -.5l-1 0l-1 1l-1 -1l-1 1.5l-1 .5l-1 0l-1 -.5l-1 -1l-1 0l-1 1.5l-1 .5l-1 -1l-1 .5l-1 -1l-1 0l-1 1l-1 -1.5l-1 0l-1 1l-1 0l-1 -.5l-1 -.5l-1 -1l-1 -.5l-1 1l-1 1l-1 .5l-1 -1l-1 1l-1 1l-1 0l-1 0l-1 0l-1 .5l-1 0l-1 -1.5l-1 1l-1 -1l-1 .5l-1 0l-1 -1l-1 1l-1 -1.5l-1 -.5l-1 0l-1 -.5l-1 1.5l-1 -.5l-1 1.5l-1 -1l-1 0l-1 0l-1 1.5l-1 -.5l-1 -1.5l-1 1.5l-1 -1l-1 -1.5l-1 -1l-1 1l-1 -.5l-1 1l-1 .5l-1 -.5l-1 .5l-1 .5l-1 0l-1 0l-1 -.5l-1 1.5l-1 0l-1 -1l-1 .5l-1 0l-1 0l-1 .5l-1 -.5l-1 -.5l-1 .5l-1 -1l-1 1l-1 -1l-1 1l-1 -1.5l-1 .5l-1 -.5l-1 -2l-1 2.5l-1 -1l-1 1l-1 .5l-1 0l-1 1l-1 0l-1 0l-1 -1.5l-1 1l-1 1l-1 -.5l-1 -.5l-1 -.5l-1 1l-1 .5l-1 -1.5l-1 .5l-1 .5l-1 -1l-1 0l-1 0l-1 .5l-1 -.5l-1 .5l-1 -1l-1 -.5l-1 -.5l-1 1l-1 -.5l-1 0l-1 0l-1 1.5l-1 .5l-1 -.5l-1 .5l-1 -1l-1 0l-1 .5l-1 0l-1 -.5l-1 0l-1 1.5l-1 -2l-1 1.5l-1 -1.5l-1 .5l-1 -1l-1 -1.5l-1 0l-1 1.5l-1 -.5l-1 0l-1 2l-1 0l-1 -1l-1 .5l-1 .5l-1 0l-1 -.5l-1 0l-1 -.5l-1 1l-1 -1l-1 1l-1 0l-1 .5l-1 0l-1 -.5l-1 .5l-1 -1.5l-1 .5l-1 -.5l-1 -.5l-1 0l-1 0l-1 -1.5l-1 .5l-1 .5l-1 1.5l-1 0l-1 .5l-1 1l-1 0l-1 -1.5l-1 1l-1 .5l-1 .5l-1 .5l-1 -2l-1 1.5l-1 .5l-1 -.5l-1 .5l-1 -1.5l-1 1l-1 -.5l-1 -.5l-1 .5l-1 -1l-1 .5l-1 -.5l-1 -.5l-1 -1.5l-1 0l-1 1l-1 1l-1 -1l-1 1.5l-1 -.5l-1 1l-1 1l-1 -1.5l-1 1.5l-1 -1.5l-1 1l-1 .5l-1 0l-1 -1l-1 -1l-1 1l-1 -.5l-1 -.5l-1 .5l-1 -.5l-1 -3l-1 0l-1 2l-1 .5l-1 -1l-1 0l-1 1.5l-1 -1.5l-1 1l-1 0l-1 -.5l-1 .5l-1 .5l-1 -.5l-1 1l-1 -1l-1 1l-1 0l-1 -.5l-1 -1l-1 .5l-1 -.5l-1 .5l-1 -.5l-1 1l-1 -1.5l-1 0l-1 -.5l-1 -1.5l-1 2.5l-1 .5l-1 0l-1 .5l-1 -.5l-1 1.5l-1 -.5l-1 -1l-1 2l-1 -1l-1 -.5l-1 -1l-1 .5l-1 -2.5l-1 1.5l-1 1l-1 .5l-1 1l-1 .5l-1 .5l-1 0l-1 -1l-1 -.5l-1 .5l-1 -1l-1 1l-1 -2.5l-1 0l-1 -.5l-1 .5l-1 .5l-1 .5l-1 0l-1 0l-1 .5l-1 -1l-1 1l-1 .5l-1 -.5l-1 0l-1 -1l-1 0l-1 1.5l-1 -1l-1 0l-1 -.5l-1 -.5l-1 -.5l-1 0l-1 1.5l-1 -.5l-1 .5l-1 2l-1 -1l-1 1l-1 -1l-1 1.5l-1 -.5l-1 -1.5l-1 0l-1 1l-1 -1.5l-1 -3l-1 2.5l-1 0l-1 1l-1 .5l-1 0l-1 -1l-1 1l-1 -1l-1 .5l-1 .5l-1 0l-1 -1.5l-1 1l-1 -3l-1 1.5l-1 1.5l-1 -1l-1 1l-1 .5l-1 0l-1 -.5l-1 -.5l-1 1l-1 -.5l-1 -.5l-1 0l-1 0l-1 -2.5l-1 1l-1 2l-1 .5l-1 -1l-1 1.5l-1 -.5l-1 0l-1 -.5l-1 1l-1 -.5l-1 -1l-1 0l-1 -1l-1 -1l-1 .5l-1 1l-1 1.5l-1 .5l-1 -.5l-1 -.5l-1 1l-1 -1l-1 0l-1 0l-1 1l-1 -1.5l-1 0l-1 -1l-1 .5l-1 0l-1 1l-1 .5l-1 0l-1 -.5l-1 .5l-1 .5l-1 .5l-1 -1.5l-1 1l-1 -2l-1 0l-1 -2l-1 2l-1 .5l-1 0l-1 -.5l-1 0l-1 2l-1 0l-1 -1l-1 0l-1 -.5l-1 0l-1 .5l-1 -1l-1 -1.5l-1 1l-1 0l-1 .5l-1 0l-1 .5l-1 1l-1 -.5l-1 .5l-1 -1l-1 1l-1 -.5l-1 1l-1 -1.5l-1 .5l-1 0l-1 1.5l-1 -1l-1 -.5l-1 .5l-1 0l-1 0l-1 -.5l-1 -1l-1 1l-1 -1l-1 -.5l-1 1l-1 -2l-1 1l-1 1.5l-1 .5l-1 -1l-1 .5l-1 1l-1 -1l-1 1l-1 -.5l-1 .5l-1 -1l-1 1l-1 -.5l-1 1l-1 0l-1 -1l-1 0l-1 0l-1 -.5l-1 -1l-1 -1l-1 .5l-1 1l-1 1l-1 1l-1 0l-1 0l-1 -.5l-1 1l-1 -1l-1 -.5l-1 0l-1 -.5l-1 0l-1 -3l-1 1.5l-1 1.5l-1 -.5l-1 1.5l-1 0l-1 -1l-1 .5l-1 0l-1 0l-1 .5l-1 -1l-1 .5l-1 .5l-1 -4.5l-.5 -3Z"/></defs><path d="M2 22.3H990M2 60.3H990" stroke="#000" stroke-width="1.2"/><g fill="#1c3606" stroke="#000" stroke-width="0.9" stroke-linejoin="round"><use href="#w9" transform="translate(-392 22.3)"/><use href="#w9" transform="translate(-392 60.3)"/></g></svg>
<div class="t" style="left:394px;top:901px;padding:3.5px 4px 1px 2.5px;height:17px;background:rgba(92,184,0,0.82);font-size:12px;letter-spacing:-0.3px;word-spacing:1px;font-weight:bold;color:#101010">011 - <span style="letter-spacing:-0.290px">MAIN SYNTH</span></div>
<div style="left:17px;top:980px;width:40px;height:81px;background:#cc5500"></div>
<svg style="left:18.2px;top:981.2px;" width="21" height="17" viewBox="0 0 21 17"><path d="M0.7 9.7H3.2L3.9 8L4.9 11.5L6.2 5.9L7.7 13.9L9.8 2.9L11.2 12.1L12.9 7L14 11.1L15.1 9L16 9.7H17.8" stroke="#fff" stroke-width="1.8" fill="none" stroke-linejoin="round" stroke-linecap="round"/></svg>
<div class="t" style="left:33px;top:985px;width:20px;text-align:right;font-size:9.5px;color:#6a2a00">11</div>
<div style="left:63px;top:982px;width:45px;height:17px;background:linear-gradient(#606366,#484b4e);border:1px solid #141618;border-radius:3.5px"></div>
<div style="left:85px;top:983px;width:1px;height:15px;background:#0e0f10"></div>
<svg style="left:64px;top:983px;" width="43" height="15" viewBox="0 0 43 15"><g fill="#000"><rect x="6.9" y="4.1" width="8" height="2"/><rect x="6.9" y="4.1" width="2.2" height="7.8"/><rect x="9.9" y="5" width="2.1" height="6.9"/><rect x="12.8" y="4.1" width="2.1" height="7.8"/><rect x="28" y="4.1" width="8" height="2"/><rect x="28" y="4.1" width="2.3" height="5.5"/><rect x="28" y="7.9" width="8" height="1.7"/><rect x="33.7" y="7.9" width="2.3" height="4"/><rect x="28" y="10.1" width="8" height="1.8"/></g></svg>
<div class="t" style="left:111.5px;top:984.3px;font-size:14px;font-weight:bold;color:#ffffff;letter-spacing:-0.5px;word-spacing:1.5px">012 - <span style="letter-spacing:-1.083px">FRENCH HORNS</span></div>
<div style="left:112px;top:1003px;width:46px;height:15px;background:#4b4e52;border-radius:3px"></div>
<div style="left:162px;top:1003px;width:49px;height:15px;background:#4b4e52;border-radius:3px"></div>
<div style="left:215px;top:1003px;width:46px;height:15px;background:#4b4e52;border-radius:3px"></div>
<svg style="left:112px;top:1003px;" width="150" height="15" viewBox="0 0 150 15"><circle cx="11" cy="7.5" r="4" fill="#000"/><path d="M33 5.5h2l3-2.5v9l-3-2.5h-2z" fill="#000"/><path d="M58 9.5 C57 3,64 3,64 6 L58 9 C58 12,62 12.5,64 11" stroke="#000" stroke-width="1.5" fill="none"/><circle cx="81" cy="7.5" r="2.6" stroke="#000" stroke-width="1.5" fill="none"/><circle cx="85" cy="7.5" r="2.6" stroke="#000" stroke-width="1.5" fill="none"/><path d="M109 11.5V4h4.5a2 2 0 0 1 0 4h-4.5M112 8l3 3.5" stroke="#000" stroke-width="2" fill="none"/><path d="M134.5 4v7.5h7V4M138 4v7" stroke="#000" stroke-width="2" fill="none"/></svg>
<div style="left:64px;top:1022px;width:34px;height:34px;border:1px solid #2b2e31;border-radius:3px"></div>
<div style="left:17px;top:1061px;width:364px;height:1px;background:#5b5e61"></div>
<div style="left:371px;top:1026px;width:3px;height:6px;background:#151515"></div>
<div style="left:375px;top:1026px;width:3px;height:5px;background:#151515"></div>
<div style="left:371px;top:1032px;width:3px;height:28px;background:linear-gradient(#2ae8d0,#1ed8f2 40%)"></div>
<div style="left:375px;top:1031px;width:3px;height:29px;background:linear-gradient(#2ae8d0,#1ed8f2 40%)"></div>
<div style="left:383px;top:1061px;width:9px;height:1px;background:#3a3e42"></div>
<div style="left:392px;top:1061px;width:1000px;height:1px;background:#4a535c"></div>
<div style="left:392px;top:981px;width:1000px;height:79px;background:#6a2a00"></div>
<div style="left:393px;top:982px;width:1000px;height:77px;background:#ff7a1e"></div>
<div style="left:394px;top:983px;width:1000px;height:75px;background:#cc5500"></div>
<div style="left:421.22px;top:983px;width:1px;height:75px;background:rgba(60,20,0,0.45)"></div>
<div style="left:450.44px;top:983px;width:1px;height:75px;background:rgba(60,20,0,0.45)"></div>
<div style="left:479.66px;top:983px;width:1px;height:75px;background:rgba(60,20,0,0.45)"></div>
<div style="left:508.88px;top:983px;width:1px;height:75px;background:rgba(60,20,0,0.45)"></div>
<div style="left:538.10px;top:983px;width:1px;height:75px;background:rgba(60,20,0,0.45)"></div>
<div style="left:567.32px;top:983px;width:1px;height:75px;background:rgba(60,20,0,0.45)"></div>
<div style="left:596.54px;top:983px;width:1px;height:75px;background:rgba(60,20,0,0.45)"></div>
<div style="left:625.76px;top:983px;width:1px;height:75px;background:rgba(60,20,0,0.45)"></div>
<div style="left:654.98px;top:983px;width:1px;height:75px;background:rgba(60,20,0,0.45)"></div>
<div style="left:684.20px;top:983px;width:1px;height:75px;background:rgba(60,20,0,0.45)"></div>
<div style="left:713.42px;top:983px;width:1px;height:75px;background:rgba(60,20,0,0.45)"></div>
<div style="left:742.64px;top:983px;width:1px;height:75px;background:rgba(60,20,0,0.45)"></div>
<div style="left:771.86px;top:983px;width:1px;height:75px;background:rgba(60,20,0,0.45)"></div>
<div style="left:801.08px;top:983px;width:1px;height:75px;background:rgba(60,20,0,0.45)"></div>
<div style="left:830.30px;top:983px;width:1px;height:75px;background:rgba(60,20,0,0.45)"></div>
<div style="left:859.52px;top:983px;width:1px;height:75px;background:rgba(60,20,0,0.45)"></div>
<div style="left:888.74px;top:983px;width:1px;height:75px;background:rgba(60,20,0,0.45)"></div>
<div style="left:917.96px;top:983px;width:1px;height:75px;background:rgba(60,20,0,0.45)"></div>
<div style="left:947.18px;top:983px;width:1px;height:75px;background:rgba(60,20,0,0.45)"></div>
<div style="left:976.40px;top:983px;width:1px;height:75px;background:rgba(60,20,0,0.45)"></div>
<div style="left:1005.62px;top:983px;width:1px;height:75px;background:rgba(60,20,0,0.45)"></div>
<div style="left:1034.84px;top:983px;width:1px;height:75px;background:rgba(60,20,0,0.45)"></div>
<div style="left:1064.06px;top:983px;width:1px;height:75px;background:rgba(60,20,0,0.45)"></div>
<div style="left:1093.28px;top:983px;width:1px;height:75px;background:rgba(60,20,0,0.45)"></div>
<div style="left:1122.50px;top:983px;width:1px;height:75px;background:rgba(60,20,0,0.45)"></div>
<div style="left:1151.72px;top:983px;width:1px;height:75px;background:rgba(60,20,0,0.45)"></div>
<div style="left:1180.94px;top:983px;width:1px;height:75px;background:rgba(60,20,0,0.45)"></div>
<div style="left:1210.16px;top:983px;width:1px;height:75px;background:rgba(60,20,0,0.45)"></div>
<div style="left:1239.38px;top:983px;width:1px;height:75px;background:rgba(60,20,0,0.45)"></div>
<div style="left:1268.60px;top:983px;width:1px;height:75px;background:rgba(60,20,0,0.45)"></div>
<div style="left:1297.82px;top:983px;width:1px;height:75px;background:rgba(60,20,0,0.45)"></div>
<div style="left:1327.04px;top:983px;width:1px;height:75px;background:rgba(60,20,0,0.45)"></div>
<div style="left:1356.26px;top:983px;width:1px;height:75px;background:rgba(60,20,0,0.45)"></div>
<svg style="left:392px;top:980px;" width="982" height="82" viewBox="0 0 982 82"><defs><path id="w10" d="M664 0l.5 -2.5l1 -4.5l1.5 -1l1 .5l1.5 -1l1 3l1 1l1.5 1l1 1l1.5 -4.5l1 -2l1 2l1.5 -.5l1 1l1.5 1l1 2l1 .5l1.5 -4l1 -1.5l1.5 .5l1 0l1 .5l1.5 -.5l1 .5l1.5 .5l1 -.5l1 1l1.5 -.5l1 .5l1.5 0l1 .5l1 .5l1.5 1.5l1 1l1.5 -2.5l1 -1.5l1 2l1.5 -.5l1 1l1.5 1.5l1 -4.5l1 -1l1.5 0l1 0l1.5 .5l1 0l1 .5l1.5 -.5l1 .5l1.5 -.5l1 1l1 0l1.5 0l1 .5l1.5 -.5l1 1l1 -.5l1.5 0l1 1l1.5 0l1 0l1 1.5l1.5 1.5l1 -4l1.5 -.5l1 0l1 .5l1.5 0l1 1l1.5 -.5l1 0l1 1l1.5 1l1 0l1.5 1.5l1 -4l1 -2l1.5 1l1 0l1.5 1l1 0l1 3l1.5 1l1 -3.5l1.5 -1.5l1 .5l1 -.5l1.5 1l1 0l1.5 .5l1 0l1 0l1.5 1l1 -.5l1.5 -.5l1 .5l1 1l1.5 0l1 1l1.5 .5l1 -2l1 -1l1.5 -.5l1 1l1.5 0l1 -.5l1 0l1.5 .5l1 -.5l1.5 0l1 1l1 .5l1.5 -.5l1 0l1.5 .5l1 -.5l1 .5l1.5 .5l1 -.5l1.5 .5l1 0l1 1l1.5 .5l1 -4l1.5 -1.5l1 1l1 .5l1.5 1l1 .5l1.5 1l1 1.5l1 -2.5l1.5 -.5l1 .5l1.5 0l1 1l1 .5l1.5 .5l1 0l1.5 -3l1 -2l1 1.5l1.5 .5l1 -.5l1.5 1.5l1 -.5l1 1l1.5 1.5l1 0l1.5 -3.5l1 -3l1 1.5l1.5 0l1 .5l1.5 .5l1 0l1 1l1.5 -.5l1 1l1.5 1.5l1 1.5l1 -3.5l1.5 -1.5l1 1l1.5 .5l1 1l1 .5l1.5 1l1 1l1.5 -3.5l1 -1.5l1 2l1.5 0l1 1l1.5 2l1 -1.5l1 -.5l1.5 1l1 -.5l1.5 .5l1 -.5l1 1l1.5 0l1 -4.5l1.5 -1.5l1 0l1 .5l1.5 .5l1 .5l1.5 0l1 0l1 1l1.5 0l1 -.5l1.5 1l1 0l1 0l1.5 .5l1 1.5l1.5 1.5l1 -2l1 -1l1.5 -.5l1 0l1.5 1l1 0l1 0l1.5 -.5l1 1l1.5 -.5l1 0l1 0l1.5 0l1 .5l1.5 -.5l1 1l1 0l1.5 0l1 .5l1.5 0l1 0l1 0l1.5 1l1 -2l1.5 -1.5l1 1.5l1 0l1.5 1.5l1 0l1.5 -3.5l1 -1l1 1.5l1.5 -.5l1 .5l1.5 1l1 0l1 .5l1.5 1.5l1 0l1.5 -1l1 -.5l1 -.5l1.5 1.5l1 -.5l1.5 .5l1 0l1 .5l1.5 .5l1 0l1.5 -3l1 -1.5l1 .5l1.5 .5l1 0l1.5 1l1 -1l1 1.5l1.5 0l1 0l1.5 1l1 1l1 -2l1.5 -.5l1 .5l1.5 .5l1 -.5l1 .5l1.5 1l1 -.5l1.5 1l1 0l1 -1.5l1.5 -1.5l1 1l1.5 .5l1 .5l1 0l1.5 0l1 .5l1.5 .5l1 -.5l1 -4.5l1.5 -2l1 1.5l1.5 -.5l1 1l1 -1l1.5 .5l1 0l1.5 1l1 0l1 -.5l1.5 .5l1 0l1.5 .5l1 -.5l1 1l1.5 0l1 0l1.5 .5l1 -.5l1 0l1.5 2.5l1 1l1.5 -2.5l1 -.5l1 1l1.5 .5l1 1l1.5 0l1 -2.5l1 -.5l1.5 .5l1 -.5l1.5 .5l1 .5l1 0l1.5 0l1 .5l1.5 1l1 0l1 1l1.5 -3.5l1 -1.5l1.5 1l1 1l1 -.5l1.5 1l1 2l1.5 0l1 -3l1 -1l1.5 .5l1 -.5l1.5 0l1 .5l1 0l1.5 0l1 1l1.5 -1l1 .5l1 0l1.5 1l1 0l1.5 -.5l1 .5l1 0l1.5 0l1 1l1.5 -1l1 .5l1 .5l1.5 1l1 -2l1.5 -1.5l1 1l1 .5l1.5 1l1 .5l1.5 .5l1 .5l1 -3l1.5 -1l1 1.5l1.5 .5l1 0l1 0l1.5 2l1 0l1.5 -3.5l1 -2.5l1 1l1.5 0l1 .5l1.5 .5l1 0l1 0l1.5 0l1 0l1.5 .5l1 0l1 1l1.5 0l1 0l1.5 1l1 1.5l1 -1.5l1.5 -.5l1 0l1.5 .5l1 -.5l1 .5l1.5 .5l1 0l1.5 1l1 0l1 -2l1.5 -.5l1 .5l1.5 -.5l1 1l1 .5l1.5 -.5l1 0l1.5 .5l1 1l1 0l1.5 0l1 -2.5l1.5 -1l1 0l1 .5l1.5 0l1 -.5l1.5 .5l1 .5l1 .5l1.5 -1l1 .5l1.5 0l1 .5l1 -.5l1.5 0l1 1l1.5 0l1 0l1 .5l1.5 -1l1 1l1.5 0l1 1l1 -3.5l1.5 -2l1 1l1.5 .5l1 0l1 1l1.5 0l1 1l1.5 2l1 0l1 -3l1.5 -1l1 1.5l1.5 -.5l1 .5l1 1.5l1.5 0l1 1l1.5 -4l1 -2l1 1.5l1.5 0l1 0l1.5 1l1 0l1 0l1.5 .5l1 .5l1.5 1.5l1 .5l1 -2l1.5 -2l1 1l1.5 1l1 0l1 .5l1.5 1.5l1 .5l1.5 -3l1 0l1 .5l1.5 0l1 .5l1.5 0l1 .5l1 -.5l1.5 0l1 1l1.5 1l1 0l1 -3.5l1.5 -2l1 1l1.5 0l1 .5l1 .5l1.5 .5l1 -.5l1.5 1l1 .5l1 1l1.5 .5l1 -3.5l1.5 -1l1 0l1 0l1.5 .5l1 0l1.5 .5l1 0l1 .5l1.5 0l1 -.5l1.5 .5l1 1l1 -1l1.5 0l1 1l1.5 0l1 -1l1 -2l1.5 0l1 -1l1.5 -.5l1 -1l1 .5l1.5 0l1 -.5l1.5 0l1 -.5l1 1l1.5 -1l1 .5l1.5 0l1 0l1 -.5l1.5 1.5l1 -.5l1.5 0l1 1.5l1 1l1.5 0l1 2l1.5 .5l1 2l1 -2l1.5 -1l1 .5l1.5 0l1 1l1 -.5l1.5 .5l1 0l1.5 0l1 -.5l1 1l1.5 -.5l1 0l1.5 0l1 1l1 .5l1.5 .5l1 -3.5l1.5 -1.5l1 1.5l1 -.5l1.5 .5l1 0l1.5 -.5l1 .5l1 .5l1.5 -.5l1 0l1.5 0l1 1l1 .5l1.5 -1l1 .5l1.5 0l1 0l1 0l1.5 0l1 1.5l1.5 0l1 .5l1 -2l1.5 -1l1 .5l1.5 0l1 .5l1 0l1.5 .5l1 1l1.5 .5l1 0l1 -2l1.5 -1l1 .5l1.5 .5l1 .5l1 0l1.5 .5l0 8.5l-1.5 .5l-1 0l-1 .5l-1.5 .5l-1 .5l-1.5 -1l-1 -2l-1 0l-1.5 .5l-1 1l-1.5 0l-1 .5l-1 .5l-1.5 0l-1 .5l-1.5 -1l-1 -2.5l-1 .5l-1.5 .5l-1 1l-1.5 .5l-1 0l-1 0l-1.5 -.5l-1 1l-1.5 -1l-1 .5l-1 1l-1.5 0l-1 0l-1.5 -.5l-1 .5l-1 .5l-1.5 -.5l-1 0l-1.5 .5l-1 -.5l-1 1.5l-1.5 -1.5l-1 -4l-1.5 .5l-1 1l-1 1l-1.5 0l-1 0l-1.5 -1l-1 1.5l-1 -1l-1.5 .5l-1 0l-1.5 .5l-1 -.5l-1 1l-1.5 0l-1 .5l-1.5 -1l-1 -2.5l-1 2.5l-1.5 .5l-1 2l-1.5 0l-1 1.5l-1 1l-1.5 .5l-1 -.5l-1.5 1l-1 0l-1 -.5l-1.5 0l-1 .5l-1.5 -.5l-1 1l-1 -.5l-1.5 0l-1 -1l-1.5 .5l-1 .5l-1 -1l-1.5 -1l-1 -1l-1.5 0l-1 -2l-1 -1l-1.5 0l-1 1l-1.5 0l-1 -1l-1 1l-1.5 .5l-1 -.5l-1.5 -.5l-1 1l-1 0l-1.5 .5l-1 0l-1.5 .5l-1 .5l-1 -.5l-1.5 -1l-1 -4l-1.5 .5l-1 1.5l-1 .5l-1.5 1l-1 -.5l-1.5 .5l-1 .5l-1 .5l-1.5 0l-1 1.5l-1.5 -2.5l-1 -4l-1 0l-1.5 1l-1 1.5l-1.5 0l-1 -.5l-1 0l-1.5 .5l-1 0l-1.5 .5l-1 .5l-1 -.5l-1.5 -3l-1 .5l-1.5 2l-1 .5l-1 0l-1.5 1l-1 1l-1.5 -2l-1 -2.5l-1 .5l-1.5 1.5l-1 1l-1.5 .5l-1 0l-1 0l-1.5 1l-1 0l-1.5 0l-1 1.5l-1 -2l-1.5 -4.5l-1 1.5l-1.5 0l-1 1.5l-1 .5l-1.5 -.5l-1 1.5l-1.5 -1l-1 -3.5l-1 .5l-1.5 2l-1 1l-1.5 0l-1 1l-1 0l-1.5 1l-1 .5l-1.5 -2l-1 -4l-1 1l-1.5 0l-1 1l-1.5 -.5l-1 .5l-1 0l-1.5 -.5l-1 1.5l-1.5 0l-1 -1l-1 1l-1.5 0l-1 0l-1.5 -.5l-1 .5l-1 .5l-1.5 .5l-1 -.5l-1.5 0l-1 .5l-1 0l-1.5 -1l-1 -2.5l-1.5 0l-1 0l-1 .5l-1.5 1l-1 0l-1.5 -.5l-1 0l-1 1.5l-1.5 -.5l-1 .5l-1.5 -.5l-1 -2.5l-1 0l-1.5 1.5l-1 0l-1.5 .5l-1 0l-1 0l-1.5 .5l-1 -.5l-1.5 0l-1 -1.5l-1 1l-1.5 1.5l-1 0l-1.5 0l-1 1l-1 0l-1.5 .5l-1 0l-1.5 0l-1 0l-1 0l-1.5 .5l-1 1l-1.5 -.5l-1 1l-1 -2.5l-1.5 -4l-1 .5l-1.5 1.5l-1 .5l-1 0l-1.5 .5l-1 1.5l-1.5 -1l-1 -3l-1 0l-1.5 1l-1 .5l-1.5 1l-1 .5l-1 1l-1.5 -1.5l-1 -2l-1.5 .5l-1 .5l-1 1l-1.5 -1l-1 1l-1.5 0l-1 0l-1 0l-1.5 0l-1 -.5l-1.5 1.5l-1 0l-1 .5l-1.5 -1l-1 1l-1.5 0l-1 0l-1 .5l-1.5 0l-1 -.5l-1.5 .5l-1 -1l-1 -3.5l-1.5 .5l-1 2l-1.5 .5l-1 0l-1 1l-1.5 1l-1 -1.5l-1.5 -4l-1 1l-1 0l-1.5 1.5l-1 .5l-1.5 0l-1 0l-1 .5l-1.5 .5l-1 -.5l-1.5 .5l-1 -.5l-1 -3l-1.5 0l-1 1l-1.5 1l-1 1l-1 -.5l-1.5 -2.5l-1 .5l-1.5 3l-1 0l-1 -.5l-1.5 .5l-1 0l-1.5 0l-1 1l-1 0l-1.5 0l-1 .5l-1.5 0l-1 -.5l-1 .5l-1.5 .5l-1 .5l-1.5 0l-1 -.5l-1 .5l-1.5 -.5l-1 1.5l-1.5 -2l-1 -4.5l-1 -1l-1.5 1l-1 0l-1.5 0l-1 0l-1 1l-1.5 .5l-1 .5l-1.5 -1.5l-1 -1.5l-1 0l-1.5 1.5l-1 -.5l-1.5 1l-1 .5l-1 -.5l-1.5 0l-1 .5l-1.5 -.5l-1 -2l-1 1.5l-1.5 1l-1 0l-1.5 0l-1 1.5l-1 -1l-1.5 1l-1 0l-1.5 .5l-1 .5l-1 -1.5l-1.5 -3.5l-1 0l-1.5 .5l-1 1l-1 -.5l-1.5 1l-1 -.5l-1.5 1l-1 0l-1 -.5l-1.5 -1l-1 0l-1.5 1.5l-1 .5l-1 0l-1.5 1l-1 1l-1.5 -1l-1 1.5l-1 -1l-1.5 -3.5l-1 -.5l-1.5 2l-1 -.5l-1 2l-1.5 -1.5l-1 -2.5l-1.5 1l-1 .5l-1 0l-1.5 0l-1 .5l-1.5 0l-1 0l-1 .5l-1.5 0l-1 .5l-1.5 0l-1 0l-1 0l-1.5 -.5l-1 .5l-1.5 0l-1 0l-1 0l-1.5 .5l-1 .5l-1.5 -.5l-1 -1l-1 -2.5l-1.5 2l-1 1.5l-1.5 .5l-1 0l-1 0l-1.5 1l-1 -.5l-1.5 0l-1 1.5l-1 -.5l-1.5 .5l-1 .5l-1.5 0l-1 .5l-1 0l-1.5 -1.5l-1 -5l-1.5 .5l-1 .5l-1 0l-1.5 .5l-1 -.5l-1.5 1l-1 -.5l-1 -1.5l-1.5 1.5l-1 1.5l-1.5 0l-1 2l-1 -2l-1.5 -3l-1 .5l-1.5 1.5l-1 .5l-1 1l-1.5 .5l-1 1l-1.5 -1.5l-1 -4l-1 1.5l-1.5 2l-1 1l-1.5 -.5l-1 1.5l-1 -.5l-1.5 .5l-1 1l-1.5 -.5l-1 1.5l-1 -3l-1.5 -4l-1 .5l-1.5 1.5l-1 1l-1 -.5l-1.5 1.5l-1 -.5l-1.5 .5l-1 1.5l-1 -2l-1.5 -3l-1 -.5l-1.5 1l-1 0l-1 1.5l-1.5 0l-1 .5l-1.5 -1l-1 -2.5l-1 2l-1.5 1l-1 .5l-1.5 1l-1 .5l-1 1l-1.5 -1.5l-1 -4.5l-1.5 1l-1 1l-1 -.5l-1.5 1l-1 -.5l-1.5 .5l-1 .5l-1 -.5l-1.5 .5l-1 -.5l-1.5 0l-1 .5l-1 1l-1.5 0l-1 -.5l-1.5 .5l-1 0l-1 -.5l-1.5 0l-1 1l-1.5 -.5l-1 -1l-1 -2.5l-1.5 1l-1 1l-1.5 0l-1 1l-1 0l-1.5 -.5l-1 0l-1.5 1l-1 0l-1 0l-1.5 .5l-1 0l-1.5 1l-1 -.5l-1 .5l-1.5 -1.5l-1 -4l-1.5 1.5l-1 3l-1 0l-1.5 1l-1 0l-1.5 1l-1 -2l-1 -4.5l-1.5 1.5l-1 .5l-1.5 .5l-1 1.5l-1 0l-1.5 -.5l-1 1l-1.5 0l-1 .5l-1 0l-1.5 -.5l-1 -4.5l-1.5 1.5l-1 2l-1 -.5l-1.5 .5l-1 1l-1.5 0l-1 -.5l-1 1l-1.5 -.5l-1 .5l-1.5 0l-1 .5l-1 .5l-1.5 -.5l-1 .5l-1.5 -.5l-1 .5l-1 0l-1.5 .5l-1 .5l-1.5 -.5l-1 -1l-1 -4.5l-1.5 1l-1 1.5l-1.5 -.5l-1 2.5l-1 -2l-1.5 -2.5l-1 .5l-1.5 2l-1 .5l-1 .5l-1.5 0l-1 .5l-1.5 -.5l-1 1l-1 -.5l-1.5 .5l-1 1l-1.5 -1l-1 1l-1 0l-1.5 0l-1 -1.5l-1.5 -4l-1 0l-1 2.5l-1.5 1l-1 1l-1.5 -.5l-1 2l-1 -2l-1.5 -5l-1 1l-1.5 1.5l-1 1l-1 3l-1.5 -.5l-1 0l-1.5 -1l-1 -5l-.5 -2.5Z"/></defs><path d="M2 22.3H990M2 60.3H990" stroke="#000" stroke-width="1.2"/><g fill="#451a04" stroke="#000" stroke-width="0.9" stroke-linejoin="round"><use href="#w10" transform="translate(-392 22.3)"/><use href="#w10" transform="translate(-392 60.3)"/></g></svg>
<div class="t" style="left:394px;top:983px;padding:3.5px 4px 1px 2.5px;height:17px;background:rgba(204,85,0,0.82);font-size:12px;letter-spacing:-0.3px;word-spacing:1px;font-weight:bold;color:#f8ece0">012 - <span style="letter-spacing:-0.983px">FRENCH HORNS</span></div>
<div style="left:17px;top:1062px;width:40px;height:81px;background:#cc5500"></div>
<svg style="left:18.2px;top:1063.2px;" width="21" height="17" viewBox="0 0 21 17"><path d="M0.7 9.7H3.2L3.9 8L4.9 11.5L6.2 5.9L7.7 13.9L9.8 2.9L11.2 12.1L12.9 7L14 11.1L15.1 9L16 9.7H17.8" stroke="#fff" stroke-width="1.8" fill="none" stroke-linejoin="round" stroke-linecap="round"/></svg>
<div class="t" style="left:33px;top:1067px;width:20px;text-align:right;font-size:9.5px;color:#6a2a00">12</div>
<div style="left:63px;top:1064px;width:45px;height:17px;background:linear-gradient(#606366,#484b4e);border:1px solid #141618;border-radius:3.5px"></div>
<div style="left:85px;top:1065px;width:1px;height:15px;background:#0e0f10"></div>
<svg style="left:64px;top:1065px;" width="43" height="15" viewBox="0 0 43 15"><g fill="#000"><rect x="6.9" y="4.1" width="8" height="2"/><rect x="6.9" y="4.1" width="2.2" height="7.8"/><rect x="9.9" y="5" width="2.1" height="6.9"/><rect x="12.8" y="4.1" width="2.1" height="7.8"/><rect x="28" y="4.1" width="8" height="2"/><rect x="28" y="4.1" width="2.3" height="5.5"/><rect x="28" y="7.9" width="8" height="1.7"/><rect x="33.7" y="7.9" width="2.3" height="4"/><rect x="28" y="10.1" width="8" height="1.8"/></g></svg>
<div class="t" style="left:111.5px;top:1066.3px;font-size:14px;font-weight:bold;color:#ffffff;letter-spacing:-0.5px;word-spacing:1.5px">013 - <span style="letter-spacing:-1.107px">FRENCH HORNS 2</span></div>
<div style="left:112px;top:1085px;width:46px;height:15px;background:#4b4e52;border-radius:3px"></div>
<div style="left:162px;top:1085px;width:49px;height:15px;background:#4b4e52;border-radius:3px"></div>
<div style="left:215px;top:1085px;width:46px;height:15px;background:#4b4e52;border-radius:3px"></div>
<svg style="left:112px;top:1085px;" width="150" height="15" viewBox="0 0 150 15"><circle cx="11" cy="7.5" r="4" fill="#000"/><path d="M33 5.5h2l3-2.5v9l-3-2.5h-2z" fill="#000"/><path d="M58 9.5 C57 3,64 3,64 6 L58 9 C58 12,62 12.5,64 11" stroke="#000" stroke-width="1.5" fill="none"/><circle cx="81" cy="7.5" r="2.6" stroke="#000" stroke-width="1.5" fill="none"/><circle cx="85" cy="7.5" r="2.6" stroke="#000" stroke-width="1.5" fill="none"/><path d="M109 11.5V4h4.5a2 2 0 0 1 0 4h-4.5M112 8l3 3.5" stroke="#000" stroke-width="2" fill="none"/><path d="M134.5 4v7.5h7V4M138 4v7" stroke="#000" stroke-width="2" fill="none"/></svg>
<div style="left:64px;top:1104px;width:34px;height:34px;border:1px solid #2b2e31;border-radius:3px"></div>
<div style="left:17px;top:1143px;width:364px;height:1px;background:#5b5e61"></div>
<div style="left:371px;top:1118px;width:3px;height:24px;background:linear-gradient(#2ae8d0,#1ed8f2 40%)"></div>
<div style="left:375px;top:1113px;width:3px;height:29px;background:linear-gradient(#2ae8d0,#1ed8f2 40%)"></div>
<div style="left:383px;top:1143px;width:9px;height:1px;background:#3a3e42"></div>
<div style="left:392px;top:1143px;width:1000px;height:1px;background:#4a535c"></div>
<div style="left:392px;top:1063px;width:1000px;height:79px;background:#6a2a00"></div>
<div style="left:393px;top:1064px;width:1000px;height:77px;background:#ff7a1e"></div>
<div style="left:394px;top:1065px;width:1000px;height:75px;background:#cc5500"></div>
<div style="left:421.22px;top:1065px;width:1px;height:75px;background:rgba(60,20,0,0.45)"></div>
<div style="left:450.44px;top:1065px;width:1px;height:75px;background:rgba(60,20,0,0.45)"></div>
<div style="left:479.66px;top:1065px;width:1px;height:75px;background:rgba(60,20,0,0.45)"></div>
<div style="left:508.88px;top:1065px;width:1px;height:75px;background:rgba(60,20,0,0.45)"></div>
<div style="left:538.10px;top:1065px;width:1px;height:75px;background:rgba(60,20,0,0.45)"></div>
<div style="left:567.32px;top:1065px;width:1px;height:75px;background:rgba(60,20,0,0.45)"></div>
<div style="left:596.54px;top:1065px;width:1px;height:75px;background:rgba(60,20,0,0.45)"></div>
<div style="left:625.76px;top:1065px;width:1px;height:75px;background:rgba(60,20,0,0.45)"></div>
<div style="left:654.98px;top:1065px;width:1px;height:75px;background:rgba(60,20,0,0.45)"></div>
<div style="left:684.20px;top:1065px;width:1px;height:75px;background:rgba(60,20,0,0.45)"></div>
<div style="left:713.42px;top:1065px;width:1px;height:75px;background:rgba(60,20,0,0.45)"></div>
<div style="left:742.64px;top:1065px;width:1px;height:75px;background:rgba(60,20,0,0.45)"></div>
<div style="left:771.86px;top:1065px;width:1px;height:75px;background:rgba(60,20,0,0.45)"></div>
<div style="left:801.08px;top:1065px;width:1px;height:75px;background:rgba(60,20,0,0.45)"></div>
<div style="left:830.30px;top:1065px;width:1px;height:75px;background:rgba(60,20,0,0.45)"></div>
<div style="left:859.52px;top:1065px;width:1px;height:75px;background:rgba(60,20,0,0.45)"></div>
<div style="left:888.74px;top:1065px;width:1px;height:75px;background:rgba(60,20,0,0.45)"></div>
<div style="left:917.96px;top:1065px;width:1px;height:75px;background:rgba(60,20,0,0.45)"></div>
<div style="left:947.18px;top:1065px;width:1px;height:75px;background:rgba(60,20,0,0.45)"></div>
<div style="left:976.40px;top:1065px;width:1px;height:75px;background:rgba(60,20,0,0.45)"></div>
<div style="left:1005.62px;top:1065px;width:1px;height:75px;background:rgba(60,20,0,0.45)"></div>
<div style="left:1034.84px;top:1065px;width:1px;height:75px;background:rgba(60,20,0,0.45)"></div>
<div style="left:1064.06px;top:1065px;width:1px;height:75px;background:rgba(60,20,0,0.45)"></div>
<div style="left:1093.28px;top:1065px;width:1px;height:75px;background:rgba(60,20,0,0.45)"></div>
<div style="left:1122.50px;top:1065px;width:1px;height:75px;background:rgba(60,20,0,0.45)"></div>
<div style="left:1151.72px;top:1065px;width:1px;height:75px;background:rgba(60,20,0,0.45)"></div>
<div style="left:1180.94px;top:1065px;width:1px;height:75px;background:rgba(60,20,0,0.45)"></div>
<div style="left:1210.16px;top:1065px;width:1px;height:75px;background:rgba(60,20,0,0.45)"></div>
<div style="left:1239.38px;top:1065px;width:1px;height:75px;background:rgba(60,20,0,0.45)"></div>
<div style="left:1268.60px;top:1065px;width:1px;height:75px;background:rgba(60,20,0,0.45)"></div>
<div style="left:1297.82px;top:1065px;width:1px;height:75px;background:rgba(60,20,0,0.45)"></div>
<div style="left:1327.04px;top:1065px;width:1px;height:75px;background:rgba(60,20,0,0.45)"></div>
<div style="left:1356.26px;top:1065px;width:1px;height:75px;background:rgba(60,20,0,0.45)"></div>
<svg style="left:392px;top:1062px;" width="982" height="82" viewBox="0 0 982 82"><defs><path id="w11" d="M664 0l.5 -1.5l1 -3l1.5 0l1 0l1.5 -.5l1 2.5l1 0l1.5 1l1 -.5l1.5 -1l1 -1l1 .5l1.5 .5l1 .5l1.5 1l1 -1l1 0l1.5 -.5l1 .5l1.5 -.5l1 .5l1 0l1.5 .5l1 0l1.5 0l1 .5l1 -.5l1.5 -1.5l1 -.5l1.5 .5l1 .5l1 0l1.5 0l1 0l1.5 .5l1 -.5l1 .5l1.5 1l1 -.5l1.5 -1.5l1 -1l1 1l1.5 -.5l1 .5l1.5 .5l1 0l1 .5l1.5 .5l1 0l1.5 -2l1 -.5l1 0l1.5 .5l1 -.5l1.5 .5l1 -.5l1 .5l1.5 0l1 .5l1.5 -.5l1 .5l1 0l1.5 0l1 0l1.5 0l1 0l1 .5l1.5 0l1 0l1.5 0l1 .5l1 1l1.5 -2l1 -1l1.5 .5l1 -.5l1 .5l1.5 0l1 0l1.5 .5l1 0l1 -.5l1.5 0l1 .5l1.5 .5l1 -.5l1 0l1.5 1.5l1 .5l1.5 -2l1 -.5l1 0l1.5 0l1 0l1.5 0l1 0l1 0l1.5 .5l1 0l1.5 0l1 0l1 -.5l1.5 .5l1 0l1.5 .5l1 0l1 0l1.5 0l1 0l1.5 .5l1 .5l1 .5l1.5 -2.5l1 -1.5l1.5 .5l1 .5l1 0l1.5 0l1 1l1.5 -.5l1 .5l1 .5l1.5 .5l1 .5l1.5 -1.5l1 -.5l1 1l1.5 0l1 1l1.5 .5l1 -1.5l1 -1.5l1.5 1l1 .5l1.5 .5l1 .5l1 -2l1.5 -1l1 1l1.5 .5l1 0l1 .5l1.5 .5l1 1l1.5 -1l1 0l1 -.5l1.5 0l1 .5l1.5 0l1 0l1 0l1.5 .5l1 0l1.5 0l1 0l1 -.5l1.5 .5l1 0l1.5 .5l1 0l1 -1.5l1.5 -1l1 1l1.5 0l1 0l1 0l1.5 .5l1 -.5l1.5 .5l1 .5l1 0l1.5 .5l1 -1.5l1.5 -1l1 1l1 0l1.5 -.5l1 .5l1.5 0l1 0l1 0l1.5 .5l1 -.5l1.5 0l1 .5l1 0l1.5 0l1 -.5l1.5 .5l1 0l1 0l1.5 .5l1 -.5l1.5 .5l1 0l1 -1l1.5 -.5l1 1l1.5 0l1 1l1 -.5l1.5 -1.5l1 0l1.5 0l1 0l1 0l1.5 1l1 0l1.5 .5l1 .5l1 0l1.5 -1.5l1 -1l1.5 0l1 .5l1 .5l1.5 0l1 0l1.5 .5l1 -.5l1 .5l1.5 .5l1 .5l1.5 -1l1 0l1 0l1.5 0l1 .5l1.5 -.5l1 0l1 .5l1.5 0l1 0l1.5 0l1 .5l1 -2l1.5 -1l1 0l1.5 .5l1 .5l1 -.5l1.5 0l1 1l1.5 -.5l1 .5l1 1.5l1.5 -.5l1 -1l1.5 -1l1 0l1 .5l1.5 0l1 0l1.5 .5l1 0l1 0l1.5 .5l1 .5l1.5 0l1 -1l1 -.5l1.5 0l1 .5l1.5 -.5l1 .5l1 0l1.5 0l1 .5l1.5 0l1 0l1 -.5l1.5 .5l1 .5l1.5 -.5l1 .5l1 .5l1.5 -2l1 -1l1.5 .5l1 1l1 .5l1.5 1l1 -1.5l1.5 -1l1 .5l1 0l1.5 .5l1 0l1.5 0l1 0l1 .5l1.5 .5l1 0l1.5 .5l1 -1l1 -1l1.5 0l1 .5l1.5 .5l1 0l1 0l1.5 0l1 .5l1.5 .5l1 -2l1 -1l1.5 .5l1 0l1.5 0l1 .5l1 0l1.5 0l1 .5l1.5 0l1 -.5l1 .5l1.5 0l1 0l1.5 0l1 1l1 0l1.5 -2l1 -1.5l1.5 .5l1 0l1 0l1.5 .5l1 0l1.5 0l1 .5l1 -.5l1.5 .5l1 0l1.5 -.5l1 1l1 -.5l1.5 0l1 .5l1.5 0l1 0l1 0l1.5 .5l1 .5l1.5 .5l1 -1l1 -1l1.5 1l1 0l1.5 .5l1 0l1 1l1.5 0l1 -1.5l1.5 -1l1 1l1 .5l1.5 .5l1 .5l1.5 -1.5l1 -1l1 .5l1.5 0l1 0l1.5 .5l1 -.5l1 .5l1.5 -.5l1 .5l1.5 .5l1 -.5l1 0l1.5 .5l1 -.5l1.5 1l1 .5l1 -1.5l1.5 -1l1 1l1.5 .5l1 .5l1 .5l1.5 -2l1 -1l1.5 1l1 0l1 1l1.5 1l1 -1.5l1.5 -1.5l1 1l1 0l1.5 0l1 0l1.5 0l1 .5l1 0l1.5 0l1 1l1.5 .5l1 -1.5l1 -.5l1.5 0l1 0l1.5 0l1 .5l1 0l1.5 -.5l1 0l1.5 .5l1 0l1 .5l1.5 0l1 0l1.5 -.5l1 1l1 .5l1.5 -2.5l1 -1l1.5 1.5l1 0l1 1l1.5 1l1 -1.5l1.5 -.5l1 .5l1 -.5l1.5 .5l1 -.5l1.5 .5l1 0l1 -.5l1.5 .5l1 0l1.5 0l1 .5l1 0l1.5 -.5l1 1l1.5 -1l1 .5l1 0l1.5 .5l1 0l1.5 0l1 0l1 -.5l1.5 -.5l1 .5l1.5 0l1 .5l1 -.5l1.5 .5l1 0l1.5 0l1 0l1 -1.5l1.5 -.5l1 0l1.5 1l1 -.5l1 .5l1.5 0l1 .5l1.5 0l1 .5l1 .5l1.5 0l1 -2.5l1.5 -.5l1 .5l1 0l1.5 .5l1 -.5l1.5 .5l1 0l1 0l1.5 .5l1 1l1.5 .5l1 -2l1 -.5l1.5 0l1 0l1.5 0l1 0l1 .5l1.5 0l1 0l1.5 -.5l1 .5l1 0l1.5 .5l1 0l1.5 -.5l1 .5l1 0l1.5 0l1 0l1.5 0l1 .5l1 .5l1.5 .5l1 -2.5l1.5 -1l1 1l1 1l1.5 .5l1 0l1.5 -2l1 -1l1 1l1.5 0l1 -.5l1.5 -.5l1 -.5l1 0l1.5 0l1 0l1.5 -.5l1 0l1 0l1.5 0l1 .5l1.5 0l1 0l1 0l1.5 -.5l1 .5l1.5 0l1 1l1 0l1.5 0l1 0l1.5 0l1 .5l1 .5l1.5 0l1 0l1.5 0l1 .5l1 -.5l1.5 .5l1 0l1.5 0l1 0l1 1l1.5 1l1 -2l1.5 -.5l1 .5l1 0l1.5 .5l1 0l1.5 0l1 .5l1 .5l1.5 0l1 -2l1.5 -.5l1 0l1 .5l1.5 0l1 0l1.5 .5l1 -.5l1 .5l1.5 .5l1 1l1.5 0l1 -1l1 -1.5l1.5 .5l1 .5l1.5 0l1 .5l1 .5l1.5 .5l1 -1l1.5 -.5l1 .5l1 -.5l1.5 .5l1 0l1.5 0l1 .5l1 -.5l1.5 .5l1 1l1.5 0l1 -1.5l1 -1.5l1.5 1l0 7l-1.5 1.5l-1 -1.5l-1 -2l-1.5 .5l-1 1l-1.5 0l-1 -.5l-1 .5l-1.5 0l-1 .5l-1.5 .5l-1 -.5l-1 .5l-1.5 -.5l-1 -1.5l-1.5 .5l-1 .5l-1 .5l-1.5 .5l-1 .5l-1.5 .5l-1 -1.5l-1 -1.5l-1.5 0l-1 1.5l-1.5 0l-1 .5l-1 -.5l-1.5 .5l-1 .5l-1.5 0l-1 0l-1 .5l-1.5 -.5l-1 -2.5l-1.5 0l-1 1l-1 .5l-1.5 -.5l-1 .5l-1.5 0l-1 .5l-1 .5l-1.5 -1l-1 -2l-1.5 1l-1 1.5l-1 -.5l-1.5 0l-1 .5l-1.5 0l-1 0l-1 .5l-1.5 0l-1 0l-1.5 0l-1 .5l-1 0l-1.5 0l-1 0l-1.5 .5l-1 0l-1 1l-1.5 -.5l-1 1l-1.5 -.5l-1 0l-1 0l-1.5 0l-1 .5l-1.5 0l-1 0l-1 0l-1.5 -.5l-1 0l-1.5 0l-1 0l-1 -.5l-1.5 -.5l-1 -.5l-1.5 0l-1 .5l-1 -.5l-1.5 -2.5l-1 .5l-1.5 .5l-1 1l-1 1l-1.5 -1l-1 -2.5l-1.5 0l-1 1l-1 0l-1.5 .5l-1 0l-1.5 0l-1 -.5l-1 .5l-1.5 0l-1 0l-1.5 0l-1 0l-1 .5l-1.5 0l-1 0l-1.5 0l-1 .5l-1 0l-1.5 0l-1 0l-1.5 0l-1 -1l-1 -2l-1.5 .5l-1 1l-1.5 .5l-1 .5l-1 0l-1.5 0l-1 0l-1.5 0l-1 .5l-1 .5l-1.5 -.5l-1 -3l-1.5 .5l-1 .5l-1 .5l-1.5 0l-1 .5l-1.5 -.5l-1 1l-1 -.5l-1.5 .5l-1 .5l-1.5 -1l-1 -1.5l-1 0l-1.5 0l-1 0l-1.5 1l-1 -.5l-1 .5l-1.5 -.5l-1 .5l-1.5 0l-1 -1l-1 0l-1.5 .5l-1 0l-1.5 0l-1 0l-1 .5l-1.5 -.5l-1 .5l-1.5 -.5l-1 0l-1 1l-1.5 -.5l-1 0l-1.5 .5l-1 -.5l-1 .5l-1.5 0l-1 0l-1.5 .5l-1 -.5l-1 0l-1.5 -.5l-1 -1.5l-1.5 1.5l-1 1l-1 0l-1.5 1.5l-1 -1.5l-1.5 -2l-1 .5l-1 .5l-1.5 -.5l-1 0l-1.5 .5l-1 .5l-1 0l-1.5 0l-1 0l-1.5 -.5l-1 .5l-1 0l-1.5 0l-1 .5l-1.5 0l-1 -.5l-1 -1.5l-1.5 0l-1 1l-1.5 0l-1 .5l-1 0l-1.5 .5l-1 0l-1.5 -.5l-1 .5l-1 1l-1.5 -1.5l-1 -1.5l-1.5 .5l-1 1.5l-1 0l-1.5 1l-1 -1l-1.5 -2.5l-1 .5l-1 .5l-1.5 1l-1 .5l-1.5 -1l-1 -1.5l-1 .5l-1.5 1l-1 0l-1.5 0l-1 .5l-1 -1l-1.5 1l-1 0l-1.5 -.5l-1 1l-1 -.5l-1.5 0l-1 0l-1.5 0l-1 .5l-1 -1l-1.5 -1.5l-1 1l-1.5 0l-1 .5l-1 1l-1.5 -.5l-1 -2l-1.5 .5l-1 .5l-1 .5l-1.5 0l-1 .5l-1.5 .5l-1 -1l-1 -1l-1.5 .5l-1 .5l-1.5 .5l-1 .5l-1 -.5l-1.5 .5l-1 0l-1.5 .5l-1 -.5l-1 .5l-1.5 0l-1 0l-1.5 0l-1 0l-1 0l-1.5 .5l-1 0l-1.5 .5l-1 -.5l-1 .5l-1.5 .5l-1 -1.5l-1.5 -2.5l-1 0l-1 1l-1.5 .5l-1 0l-1.5 -.5l-1 .5l-1 0l-1.5 -.5l-1 .5l-1.5 .5l-1 0l-1 0l-1.5 .5l-1 -.5l-1.5 .5l-1 -1l-1 -2l-1.5 .5l-1 .5l-1.5 .5l-1 -.5l-1 0l-1.5 .5l-1 .5l-1.5 .5l-1 -1l-1 -1.5l-1.5 1l-1 0l-1.5 0l-1 .5l-1 0l-1.5 0l-1 .5l-1.5 .5l-1 0l-1 .5l-1.5 -1.5l-1 -1l-1.5 .5l-1 .5l-1 1l-1.5 .5l-1 -.5l-1.5 -2l-1 .5l-1 0l-1.5 0l-1 .5l-1.5 0l-1 -.5l-1 .5l-1.5 0l-1 .5l-1.5 -.5l-1 0l-1 .5l-1.5 0l-1 .5l-1.5 0l-1 -.5l-1 -1.5l-1.5 0l-1 1l-1.5 .5l-1 -.5l-1 .5l-1.5 0l-1 .5l-1.5 -.5l-1 1l-1 -.5l-1.5 -.5l-1 -1.5l-1.5 0l-1 1.5l-1 .5l-1.5 -.5l-1 .5l-1.5 0l-1 0l-1 .5l-1.5 .5l-1 0l-1.5 -1l-1 -2.5l-1 .5l-1.5 0l-1 0l-1.5 0l-1 .5l-1 0l-1.5 0l-1 0l-1.5 .5l-1 0l-1 -.5l-1.5 -1l-1 .5l-1.5 1l-1 0l-1 -.5l-1.5 .5l-1 0l-1.5 .5l-1 .5l-1 0l-1.5 .5l-1 -1.5l-1.5 -1.5l-1 0l-1 1l-1.5 .5l-1 0l-1.5 .5l-1 0l-1 .5l-1.5 0l-1 0l-1.5 -2l-1 0l-1 .5l-1.5 .5l-1 .5l-1.5 0l-1 -1.5l-1 0l-1.5 .5l-1 0l-1.5 0l-1 0l-1 .5l-1.5 0l-1 -.5l-1.5 .5l-1 0l-1 .5l-1.5 -.5l-1 0l-1.5 .5l-1 -.5l-1 .5l-1.5 -.5l-1 .5l-1.5 0l-1 0l-1 .5l-1.5 -1l-1 -1.5l-1.5 .5l-1 0l-1 .5l-1.5 .5l-1 -.5l-1.5 .5l-1 0l-1 .5l-1.5 -.5l-1 1l-1.5 -1l-1 -1.5l-1 0l-1.5 .5l-1 0l-1.5 .5l-1 -.5l-1 .5l-1.5 0l-1 0l-1.5 .5l-1 -.5l-1 .5l-1.5 0l-1 .5l-1.5 0l-1 -.5l-1 0l-1.5 -1l-1 .5l-1.5 .5l-1 .5l-1 .5l-1.5 .5l-1 .5l-1.5 -1l-1 -2l-1 .5l-1.5 .5l-1 1l-1.5 .5l-1 -1l-1 -2l-1.5 .5l-1 1.5l-1.5 -.5l-1 1l-1 0l-1.5 -2l-1 .5l-1.5 1l-1 .5l-1 .5l-1.5 -.5l-1 .5l-1.5 .5l-1 0l-1 .5l-1.5 .5l-1 -1.5l-1.5 -3l-1 .5l-1 1l-1.5 0l-1 .5l-1.5 0l-1 -.5l-1 0l-1.5 .5l-1 0l-1.5 .5l-1 0l-1 -.5l-1.5 0l-1 .5l-1.5 .5l-1 0l-1 0l-1.5 -.5l-1 0l-1.5 .5l-1 0l-1 -1l-1.5 -2l-1 .5l-1.5 1.5l-1 0l-1 -.5l-1.5 .5l-1 .5l-1.5 0l-1 0l-1 0l-1.5 .5l-1 -.5l-1.5 0l-1 1l-1 -.5l-1.5 .5l-1 -1l-1.5 -2.5l-1 1l-1 1l-1.5 -.5l-1 0l-1.5 .5l-1 0l-1 .5l-1.5 -.5l-1 .5l-1.5 -.5l-1 .5l-1 0l-1.5 0l-1 0l-1.5 0l-1 1l-1 -.5l-1.5 .5l-1 -.5l-1.5 .5l-1 0l-1 -1l-1.5 -2l-1 0l-1.5 1l-1 .5l-1 -.5l-1.5 .5l-1 .5l-1.5 0l-1 1l-1 -1l-1.5 -2l-1 0l-1.5 .5l-1 .5l-1 0l-1.5 0l-1 .5l-1.5 0l-1 0l-1 .5l-1.5 .5l-1 -1l-1.5 -1.5l-1 -.5l-1 .5l-1.5 .5l-1 0l-1.5 .5l-1 0l-1 0l-1.5 0l-1 0l-1.5 0l-1 -.5l-1 -.5l-1.5 .5l-1 .5l-1.5 .5l-1 .5l-1 -1l-1.5 -1l-1 0l-1.5 1l-1 -.5l-1 3l-1.5 -.5l-1 0l-1.5 0l-1 -3.5l-.5 -1.5Z"/></defs><path d="M2 22.3H990M2 60.3H990" stroke="#000" stroke-width="1.2"/><g fill="#451a04" stroke="#000" stroke-width="0.9" stroke-linejoin="round"><use href="#w11" transform="translate(-392 22.3)"/><use href="#w11" transform="translate(-392 60.3)"/></g></svg>
<div class="t" style="left:394px;top:1065px;padding:3.5px 4px 1px 2.5px;height:17px;background:rgba(204,85,0,0.82);font-size:12px;letter-spacing:-0.3px;word-spacing:1px;font-weight:bold;color:#f8ece0">013 - <span style="letter-spacing:-1.000px">FRENCH HORNS 2</span></div>
<div style="left:17px;top:1144px;width:40px;height:81px;background:#cc5500"></div>
<svg style="left:18.2px;top:1145.2px;" width="21" height="17" viewBox="0 0 21 17"><path d="M0.7 9.7H3.2L3.9 8L4.9 11.5L6.2 5.9L7.7 13.9L9.8 2.9L11.2 12.1L12.9 7L14 11.1L15.1 9L16 9.7H17.8" stroke="#fff" stroke-width="1.8" fill="none" stroke-linejoin="round" stroke-linecap="round"/></svg>
<div class="t" style="left:33px;top:1149px;width:20px;text-align:right;font-size:9.5px;color:#6a2a00">13</div>
<div style="left:63px;top:1146px;width:45px;height:17px;background:linear-gradient(#606366,#484b4e);border:1px solid #141618;border-radius:3.5px"></div>
<div style="left:85px;top:1147px;width:1px;height:15px;background:#0e0f10"></div>
<svg style="left:64px;top:1147px;" width="43" height="15" viewBox="0 0 43 15"><g fill="#000"><rect x="6.9" y="4.1" width="8" height="2"/><rect x="6.9" y="4.1" width="2.2" height="7.8"/><rect x="9.9" y="5" width="2.1" height="6.9"/><rect x="12.8" y="4.1" width="2.1" height="7.8"/><rect x="28" y="4.1" width="8" height="2"/><rect x="28" y="4.1" width="2.3" height="5.5"/><rect x="28" y="7.9" width="8" height="1.7"/><rect x="33.7" y="7.9" width="2.3" height="4"/><rect x="28" y="10.1" width="8" height="1.8"/></g></svg>
<div class="t" style="left:111.5px;top:1148.3px;font-size:14px;font-weight:bold;color:#ffffff;letter-spacing:-0.5px;word-spacing:1.5px">014 - <span style="letter-spacing:-0.857px">TRUMPET</span></div>
<div style="left:112px;top:1167px;width:46px;height:15px;background:#4b4e52;border-radius:3px"></div>
<div style="left:162px;top:1167px;width:49px;height:15px;background:#4b4e52;border-radius:3px"></div>
<div style="left:215px;top:1167px;width:46px;height:15px;background:#4b4e52;border-radius:3px"></div>
<svg style="left:112px;top:1167px;" width="150" height="15" viewBox="0 0 150 15"><circle cx="11" cy="7.5" r="4" fill="#000"/><path d="M33 5.5h2l3-2.5v9l-3-2.5h-2z" fill="#000"/><path d="M58 9.5 C57 3,64 3,64 6 L58 9 C58 12,62 12.5,64 11" stroke="#000" stroke-width="1.5" fill="none"/><circle cx="81" cy="7.5" r="2.6" stroke="#000" stroke-width="1.5" fill="none"/><circle cx="85" cy="7.5" r="2.6" stroke="#000" stroke-width="1.5" fill="none"/><path d="M109 11.5V4h4.5a2 2 0 0 1 0 4h-4.5M112 8l3 3.5" stroke="#000" stroke-width="2" fill="none"/><path d="M134.5 4v7.5h7V4M138 4v7" stroke="#000" stroke-width="2" fill="none"/></svg>
<div style="left:64px;top:1186px;width:34px;height:34px;border:1px solid #2b2e31;border-radius:3px"></div>
<div style="left:17px;top:1225px;width:364px;height:1px;background:#5b5e61"></div>
<div style="left:371px;top:1180px;width:3px;height:44px;background:linear-gradient(#2ae8d0,#1ed8f2 40%)"></div>
<div style="left:375px;top:1179px;width:3px;height:45px;background:linear-gradient(#2ae8d0,#1ed8f2 40%)"></div>
<div style="left:383px;top:1225px;width:9px;height:1px;background:#3a3e42"></div>
<div style="left:392px;top:1225px;width:1000px;height:1px;background:#4a535c"></div>
<div style="left:392px;top:1145px;width:1000px;height:79px;background:#6a2a00"></div>
<div style="left:393px;top:1146px;width:1000px;height:77px;background:#ff7a1e"></div>
<div style="left:394px;top:1147px;width:1000px;height:75px;background:#cc5500"></div>
<div style="left:421.22px;top:1147px;width:1px;height:75px;background:rgba(60,20,0,0.45)"></div>
<div style="left:450.44px;top:1147px;width:1px;height:75px;background:rgba(60,20,0,0.45)"></div>
<div style="left:479.66px;top:1147px;width:1px;height:75px;background:rgba(60,20,0,0.45)"></div>
<div style="left:508.88px;top:1147px;width:1px;height:75px;background:rgba(60,20,0,0.45)"></div>
<div style="left:538.10px;top:1147px;width:1px;height:75px;background:rgba(60,20,0,0.45)"></div>
<div style="left:567.32px;top:1147px;width:1px;height:75px;background:rgba(60,20,0,0.45)"></div>
<div style="left:596.54px;top:1147px;width:1px;height:75px;background:rgba(60,20,0,0.45)"></div>
<div style="left:625.76px;top:1147px;width:1px;height:75px;background:rgba(60,20,0,0.45)"></div>
<div style="left:654.98px;top:1147px;width:1px;height:75px;background:rgba(60,20,0,0.45)"></div>
<div style="left:684.20px;top:1147px;width:1px;height:75px;background:rgba(60,20,0,0.45)"></div>
<div style="left:713.42px;top:1147px;width:1px;height:75px;background:rgba(60,20,0,0.45)"></div>
<div style="left:742.64px;top:1147px;width:1px;height:75px;background:rgba(60,20,0,0.45)"></div>
<div style="left:771.86px;top:1147px;width:1px;height:75px;background:rgba(60,20,0,0.45)"></div>
<div style="left:801.08px;top:1147px;width:1px;height:75px;background:rgba(60,20,0,0.45)"></div>
<div style="left:830.30px;top:1147px;width:1px;height:75px;background:rgba(60,20,0,0.45)"></div>
<div style="left:859.52px;top:1147px;width:1px;height:75px;background:rgba(60,20,0,0.45)"></div>
<div style="left:888.74px;top:1147px;width:1px;height:75px;background:rgba(60,20,0,0.45)"></div>
<div style="left:917.96px;top:1147px;width:1px;height:75px;background:rgba(60,20,0,0.45)"></div>
<div style="left:947.18px;top:1147px;width:1px;height:75px;background:rgba(60,20,0,0.45)"></div>
<div style="left:976.40px;top:1147px;width:1px;height:75px;background:rgba(60,20,0,0.45)"></div>
<div style="left:1005.62px;top:1147px;width:1px;height:75px;background:rgba(60,20,0,0.45)"></div>
<div style="left:1034.84px;top:1147px;width:1px;height:75px;background:rgba(60,20,0,0.45)"></div>
<div style="left:1064.06px;top:1147px;width:1px;height:75px;background:rgba(60,20,0,0.45)"></div>
<div style="left:1093.28px;top:1147px;width:1px;height:75px;background:rgba(60,20,0,0.45)"></div>
<div style="left:1122.50px;top:1147px;width:1px;height:75px;background:rgba(60,20,0,0.45)"></div>
<div style="left:1151.72px;top:1147px;width:1px;height:75px;background:rgba(60,20,0,0.45)"></div>
<div style="left:1180.94px;top:1147px;width:1px;height:75px;background:rgba(60,20,0,0.45)"></div>
<div style="left:1210.16px;top:1147px;width:1px;height:75px;background:rgba(60,20,0,0.45)"></div>
<div style="left:1239.38px;top:1147px;width:1px;height:75px;background:rgba(60,20,0,0.45)"></div>
<div style="left:1268.60px;top:1147px;width:1px;height:75px;background:rgba(60,20,0,0.45)"></div>
<div style="left:1297.82px;top:1147px;width:1px;height:75px;background:rgba(60,20,0,0.45)"></div>
<div style="left:1327.04px;top:1147px;width:1px;height:75px;background:rgba(60,20,0,0.45)"></div>
<div style="left:1356.26px;top:1147px;width:1px;height:75px;background:rgba(60,20,0,0.45)"></div>
<svg style="left:392px;top:1144px;" width="982" height="82" viewBox="0 0 982 82"><defs><path id="w12" d="M991.5 0l.5 -4l1.5 -6l1 -1.5l1.5 1l1 .5l1.5 -.5l1.5 -1l1 0l1.5 3.5l1 -.5l1.5 1l1.5 2l1 -.5l1.5 -1.5l1 -.5l1.5 .5l1.5 .5l1 -1l1.5 0l1 .5l1.5 -.5l1.5 .5l1 0l1.5 3l1 -2l1.5 -1l1.5 -1.5l1 -.5l1.5 4.5l1 -3.5l1.5 .5l1.5 -1.5l1 -.5l1.5 1l1 -1l1.5 .5l1.5 .5l1 -.5l1.5 .5l1 .5l1.5 1.5l1.5 -1l1 -.5l1.5 0l1 .5l1.5 0l1.5 -.5l1 .5l1.5 1.5l1 0l1.5 -2.5l1.5 .5l1 0l1.5 3l1 -2.5l1.5 0l1.5 -1.5l1 1.5l1.5 -1l1 -.5l1.5 1l1.5 -.5l1 1l1.5 3l1 -2.5l1.5 .5l1.5 -.5l1 -1.5l1.5 4l1 -3.5l1.5 -1l1.5 -1l1 -.5l1.5 4l1 -.5l1.5 .5l1.5 -1l1 0l1.5 0l1 -.5l1.5 1.5l1.5 -1l1 -.5l1.5 1l1 1l1.5 2l1.5 -3l1 -1.5l1.5 1.5l1 -1l1.5 -.5l1.5 -1l1 0l1.5 .5l1 0l1.5 .5l1.5 .5l1 2.5l1.5 -2.5l1 -1.5l1.5 .5l1.5 -.5l1 -.5l1.5 0l1 -.5l1.5 .5l1.5 1l1 .5l1.5 -1l1 2.5l1.5 -1l1.5 .5l1 -2l1.5 1l1 -1l1.5 1l1.5 0l1 2.5l1.5 -1l1 0l1.5 -1.5l1.5 0l1 -.5l1.5 1.5l1 -1l1.5 -.5l1.5 2l1 2l1.5 -1.5l1 -1l1.5 0l1.5 0l1 0l1.5 0l1 -.5l1.5 3l1.5 -2l1 -.5l1.5 0l1 -1l1.5 1.5l1.5 0l1 2l1.5 0l1 -1l1.5 -1.5l1.5 -.5l1 -.5l1.5 1.5l1 0l1.5 .5l1.5 -1l1 3l1.5 -4l1 -1l1.5 1l1.5 0l1 -1.5l1.5 0l1 .5l1.5 2.5l1.5 1l1 -1l1.5 -1l1 0l1.5 .5l1.5 0l1 3l1.5 -3.5l1 -.5l1.5 0l1.5 -.5l1 -1l1.5 1l1 -.5l1.5 1.5l1.5 -1.5l1 3l1.5 -1.5l1 0l1.5 1l1.5 -1l1 -.5l1.5 -1l1 2.5l1.5 2l1.5 -2l1 1l1.5 -2l1 .5l1.5 1l1.5 -1l1 .5l1.5 2.5l1 -2.5l1.5 0l1.5 -.5l1 .5l1.5 -.5l1 .5l1.5 -7.5l1.5 4.5l1 -3l1.5 -2l1 6l1.5 0l1.5 -6l1 1.5l1.5 -1l1 8l1.5 -4.5l1.5 -1l1 -2.5l1.5 .5l1 2l1.5 1l1.5 -4l1 3l1.5 -1l1 -1l1.5 5l1.5 1.5l1 -7l1.5 0l1 4l1.5 1.5l1.5 1l1 -3.5l1.5 -4l1 3.5l1.5 .5l1.5 3.5l1 -4l1.5 -1.5l1 3l1.5 -.5l1.5 3l1 -4l1.5 1.5l1 -3.5l1.5 4l1.5 -1l1 2l1.5 -1l1 0l1.5 -4.5l1.5 1.5l1 3.5l1.5 1l1 -5l1.5 3.5l1.5 -3l1 4.5l1.5 5l1 1l1.5 .5l1.5 .5l1 .5l1.5 .5l1 0l1.5 .5l1.5 0l1 0l1.5 0l1 0l1.5 0l1.5 0l1 0l1.5 0l1 0l1.5 0l1.5 0l1 0l1.5 0l1 0l1.5 0l1.5 0l1 0l1.5 0l1 0l1.5 0l1.5 0l1 0l1.5 0l1 0l1.5 0l1.5 0l1 0l1.5 0l1 0l1.5 0l1.5 0l1 0l1.5 0l1 0l1.5 0l0 1.5l-1.5 0l-1 0l-1.5 0l-1 0l-1.5 0l-1.5 0l-1 0l-1.5 0l-1 0l-1.5 0l-1.5 0l-1 0l-1.5 0l-1 0l-1.5 0l-1.5 0l-1 0l-1.5 0l-1 0l-1.5 0l-1.5 0l-1 0l-1.5 0l-1 0l-1.5 0l-1.5 0l-1 0l-1.5 0l-1 0l-1.5 0l-1.5 0l-1 0l-1.5 0l-1 0l-1.5 0l-1.5 0l-1 0l-1.5 .5l-1 .5l-1.5 .5l-1.5 1l-1 1l-1.5 5l-1 5l-1.5 -3.5l-1.5 4.5l-1 -5.5l-1.5 .5l-1 4l-1.5 1.5l-1.5 -4.5l-1 0l-1.5 -1l-1 2l-1.5 -1l-1.5 4l-1 -3.5l-1.5 1.5l-1 -4.5l-1.5 3.5l-1.5 -.5l-1 3l-1.5 -1.5l-1 -4l-1.5 3.5l-1.5 .5l-1 3.5l-1.5 -4l-1 -4l-1.5 1l-1.5 1.5l-1 5l-1.5 0l-1 -8l-1.5 2l-1.5 5.5l-1 -1.5l-1.5 -1l-1 3l-1.5 -4l-1.5 1l-1 2l-1.5 .5l-1 -2.5l-1.5 -1l-1.5 -4.5l-1 8l-1.5 -1l-1 2l-1.5 -6.5l-1.5 -.5l-1 6.5l-1.5 -2l-1 -3.5l-1.5 5.5l-1.5 -8.5l-1 .5l-1.5 -.5l-1 .5l-1.5 0l-1.5 -.5l-1 -2.5l-1.5 2.5l-1 .5l-1.5 -1l-1.5 1l-1 .5l-1.5 -2l-1 1l-1.5 -2l-1.5 2.5l-1 2l-1.5 -1l-1 -.5l-1.5 -.5l-1.5 1l-1 -.5l-1.5 -1.5l-1 3l-1.5 -1.5l-1.5 2l-1 -1l-1.5 1.5l-1 -1l-1.5 -1l-1.5 0l-1 -.5l-1.5 -3.5l-1 3l-1.5 0l-1.5 .5l-1 .5l-1.5 -1.5l-1 -1l-1.5 1l-1.5 3l-1 0l-1.5 0l-1 -1l-1.5 -.5l-1.5 1l-1 -1l-1.5 -4.5l-1 3.5l-1.5 -1l-1.5 .5l-1 0l-1.5 1.5l-1 -.5l-1.5 -.5l-1.5 -1.5l-1 -1l-1.5 0l-1 2.5l-1.5 0l-1.5 1l-1 -.5l-1.5 -.5l-1 -.5l-1.5 -2l-1.5 3l-1 -.5l-1.5 0l-1 0l-1.5 0l-1.5 .5l-1 -1.5l-1.5 -1.5l-1 2l-1.5 2l-1.5 0l-1 -1.5l-1.5 2l-1 -.5l-1.5 -.5l-1.5 -1.5l-1 0l-1.5 -1l-1 3l-1.5 0l-1.5 .5l-1 -.5l-1.5 1l-1 -2l-1.5 0l-1.5 -1l-1 2.5l-1.5 -.5l-1 0l-1.5 1l-1.5 1l-1 -1l-1.5 .5l-1 -.5l-1.5 -1l-1.5 .5l-1 -1l-1.5 -3l-1 2.5l-1.5 1l-1.5 .5l-1 -.5l-1.5 .5l-1 0l-1.5 -.5l-1.5 -.5l-1 -1.5l-1.5 1.5l-1 -1.5l-1.5 -3l-1.5 2l-1 1l-1.5 1l-1 -.5l-1.5 -1l-1.5 2l-1 -1l-1.5 0l-1 0l-1.5 -1l-1.5 .5l-1 -.5l-1.5 4l-1 0l-1.5 -1.5l-1.5 -1l-1 -3.5l-1.5 4l-1 -1.5l-1.5 -.5l-1.5 .5l-1 -2.5l-1.5 3.5l-1 1l-1.5 -.5l-1.5 1l-1 -1l-1.5 -.5l-1 1l-1.5 -1l-1.5 0l-1 -3.5l-1.5 4l-1 0l-1.5 0l-1.5 -2.5l-1 0l-1.5 1.5l-1 1l-1.5 -1l-1.5 0l-1 1l-1.5 -.5l-1 -.5l-1.5 -1l-1.5 2l-1 0l-1.5 .5l-1 -.5l-1.5 .5l-1.5 1l-1 -1l-1.5 1l-1 -.5l-1.5 -1.5l-1.5 0l-1 -3.5l-1.5 4.5l-1 0l-1.5 -2l-1.5 -1l-1 -2l-1.5 3l-1 0l-1.5 1l-1.5 -1l-1 1l-1.5 -.5l-1 -.5l-1.5 0l-1.5 .5l-1 -.5l-1.5 -1.5l-1 -.5l-1.5 2.5l-1.5 .5l-1 -.5l-1.5 3.5l-1 .5l-1.5 -1.5l-1.5 0l-1 0l-1.5 1.5l-1 -2l-1.5 -6l-.5 -4.5Z"/></defs><path d="M2 22.3H990M2 60.3H990" stroke="#000" stroke-width="1.2"/><g fill="#451a04" stroke="#000" stroke-width="0.9" stroke-linejoin="round"><use href="#w12" transform="translate(-392 22.3)"/><use href="#w12" transform="translate(-392 60.3)"/></g></svg>
<div class="t" style="left:394px;top:1147px;padding:3.5px 4px 1px 2.5px;height:17px;background:rgba(204,85,0,0.82);font-size:12px;letter-spacing:-0.3px;word-spacing:1px;font-weight:bold;color:#f8ece0">014 - <span style="letter-spacing:-0.800px">TRUMPET</span></div>
<div style="left:17px;top:1226px;width:40px;height:81px;background:#cc5500"></div>
<svg style="left:18.2px;top:1227.2px;" width="21" height="17" viewBox="0 0 21 17"><path d="M0.7 9.7H3.2L3.9 8L4.9 11.5L6.2 5.9L7.7 13.9L9.8 2.9L11.2 12.1L12.9 7L14 11.1L15.1 9L16 9.7H17.8" stroke="#fff" stroke-width="1.8" fill="none" stroke-linejoin="round" stroke-linecap="round"/></svg>
<div class="t" style="left:33px;top:1231px;width:20px;text-align:right;font-size:9.5px;color:#6a2a00">14</div>
<div style="left:63px;top:1228px;width:45px;height:17px;background:linear-gradient(#606366,#484b4e);border:1px solid #141618;border-radius:3.5px"></div>
<div style="left:85px;top:1229px;width:1px;height:15px;background:#0e0f10"></div>
<svg style="left:64px;top:1229px;" width="43" height="15" viewBox="0 0 43 15"><g fill="#000"><rect x="6.9" y="4.1" width="8" height="2"/><rect x="6.9" y="4.1" width="2.2" height="7.8"/><rect x="9.9" y="5" width="2.1" height="6.9"/><rect x="12.8" y="4.1" width="2.1" height="7.8"/><rect x="28" y="4.1" width="8" height="2"/><rect x="28" y="4.1" width="2.3" height="5.5"/><rect x="28" y="7.9" width="8" height="1.7"/><rect x="33.7" y="7.9" width="2.3" height="4"/><rect x="28" y="10.1" width="8" height="1.8"/></g></svg>
<div class="t" style="left:111.5px;top:1230.3px;font-size:14px;font-weight:bold;color:#ffffff;letter-spacing:-0.5px;word-spacing:1.5px">015 - <span style="letter-spacing:-0.889px">TRUMPET 2</span></div>
<div style="left:112px;top:1249px;width:46px;height:15px;background:#4b4e52;border-radius:3px"></div>
<div style="left:162px;top:1249px;width:49px;height:15px;background:#4b4e52;border-radius:3px"></div>
<div style="left:215px;top:1249px;width:46px;height:15px;background:#4b4e52;border-radius:3px"></div>
<svg style="left:112px;top:1249px;" width="150" height="15" viewBox="0 0 150 15"><circle cx="11" cy="7.5" r="4" fill="#000"/><path d="M33 5.5h2l3-2.5v9l-3-2.5h-2z" fill="#000"/><path d="M58 9.5 C57 3,64 3,64 6 L58 9 C58 12,62 12.5,64 11" stroke="#000" stroke-width="1.5" fill="none"/><circle cx="81" cy="7.5" r="2.6" stroke="#000" stroke-width="1.5" fill="none"/><circle cx="85" cy="7.5" r="2.6" stroke="#000" stroke-width="1.5" fill="none"/><path d="M109 11.5V4h4.5a2 2 0 0 1 0 4h-4.5M112 8l3 3.5" stroke="#000" stroke-width="2" fill="none"/><path d="M134.5 4v7.5h7V4M138 4v7" stroke="#000" stroke-width="2" fill="none"/></svg>
<div style="left:64px;top:1268px;width:34px;height:34px;border:1px solid #2b2e31;border-radius:3px"></div>
<div style="left:17px;top:1307px;width:364px;height:1px;background:#5b5e61"></div>
<div style="left:371px;top:1281px;width:3px;height:25px;background:linear-gradient(#2ae8d0,#1ed8f2 40%)"></div>
<div style="left:375px;top:1280px;width:3px;height:26px;background:linear-gradient(#2ae8d0,#1ed8f2 40%)"></div>
<div style="left:383px;top:1307px;width:9px;height:1px;background:#3a3e42"></div>
<div style="left:392px;top:1307px;width:1000px;height:1px;background:#4a535c"></div>
<div style="left:392px;top:1227px;width:1000px;height:79px;background:#6a2a00"></div>
<div style="left:393px;top:1228px;width:1000px;height:77px;background:#ff7a1e"></div>
<div style="left:394px;top:1229px;width:1000px;height:75px;background:#cc5500"></div>
<div style="left:421.22px;top:1229px;width:1px;height:75px;background:rgba(60,20,0,0.45)"></div>
<div style="left:450.44px;top:1229px;width:1px;height:75px;background:rgba(60,20,0,0.45)"></div>
<div style="left:479.66px;top:1229px;width:1px;height:75px;background:rgba(60,20,0,0.45)"></div>
<div style="left:508.88px;top:1229px;width:1px;height:75px;background:rgba(60,20,0,0.45)"></div>
<div style="left:538.10px;top:1229px;width:1px;height:75px;background:rgba(60,20,0,0.45)"></div>
<div style="left:567.32px;top:1229px;width:1px;height:75px;background:rgba(60,20,0,0.45)"></div>
<div style="left:596.54px;top:1229px;width:1px;height:75px;background:rgba(60,20,0,0.45)"></div>
<div style="left:625.76px;top:1229px;width:1px;height:75px;background:rgba(60,20,0,0.45)"></div>
<div style="left:654.98px;top:1229px;width:1px;height:75px;background:rgba(60,20,0,0.45)"></div>
<div style="left:684.20px;top:1229px;width:1px;height:75px;background:rgba(60,20,0,0.45)"></div>
<div style="left:713.42px;top:1229px;width:1px;height:75px;background:rgba(60,20,0,0.45)"></div>
<div style="left:742.64px;top:1229px;width:1px;height:75px;background:rgba(60,20,0,0.45)"></div>
<div style="left:771.86px;top:1229px;width:1px;height:75px;background:rgba(60,20,0,0.45)"></div>
<div style="left:801.08px;top:1229px;width:1px;height:75px;background:rgba(60,20,0,0.45)"></div>
<div style="left:830.30px;top:1229px;width:1px;height:75px;background:rgba(60,20,0,0.45)"></div>
<div style="left:859.52px;top:1229px;width:1px;height:75px;background:rgba(60,20,0,0.45)"></div>
<div style="left:888.74px;top:1229px;width:1px;height:75px;background:rgba(60,20,0,0.45)"></div>
<div style="left:917.96px;top:1229px;width:1px;height:75px;background:rgba(60,20,0,0.45)"></div>
<div style="left:947.18px;top:1229px;width:1px;height:75px;background:rgba(60,20,0,0.45)"></div>
<div style="left:976.40px;top:1229px;width:1px;height:75px;background:rgba(60,20,0,0.45)"></div>
<div style="left:1005.62px;top:1229px;width:1px;height:75px;background:rgba(60,20,0,0.45)"></div>
<div style="left:1034.84px;top:1229px;width:1px;height:75px;background:rgba(60,20,0,0.45)"></div>
<div style="left:1064.06px;top:1229px;width:1px;height:75px;background:rgba(60,20,0,0.45)"></div>
<div style="left:1093.28px;top:1229px;width:1px;height:75px;background:rgba(60,20,0,0.45)"></div>
<div style="left:1122.50px;top:1229px;width:1px;height:75px;background:rgba(60,20,0,0.45)"></div>
<div style="left:1151.72px;top:1229px;width:1px;height:75px;background:rgba(60,20,0,0.45)"></div>
<div style="left:1180.94px;top:1229px;width:1px;height:75px;background:rgba(60,20,0,0.45)"></div>
<div style="left:1210.16px;top:1229px;width:1px;height:75px;background:rgba(60,20,0,0.45)"></div>
<div style="left:1239.38px;top:1229px;width:1px;height:75px;background:rgba(60,20,0,0.45)"></div>
<div style="left:1268.60px;top:1229px;width:1px;height:75px;background:rgba(60,20,0,0.45)"></div>
<div style="left:1297.82px;top:1229px;width:1px;height:75px;background:rgba(60,20,0,0.45)"></div>
<div style="left:1327.04px;top:1229px;width:1px;height:75px;background:rgba(60,20,0,0.45)"></div>
<div style="left:1356.26px;top:1229px;width:1px;height:75px;background:rgba(60,20,0,0.45)"></div>
<svg style="left:392px;top:1226px;" width="982" height="82" viewBox="0 0 982 82"><defs><path id="w13" d="M991.5 0l.5 -2l1.5 -3.5l1 .5l1.5 0l1 0l1.5 -.5l1.5 .5l1 -.5l1.5 0l1 .5l1.5 0l1.5 0l1 1l1.5 .5l1 0l1.5 0l1.5 0l1 -1l1.5 .5l1 0l1.5 .5l1.5 -.5l1 0l1.5 .5l1 1l1.5 -1.5l1.5 -.5l1 -.5l1.5 -.5l1 2l1.5 -1l1.5 0l1 0l1.5 -.5l1 0l1.5 .5l1.5 -.5l1 1l1.5 -.5l1 -.5l1.5 .5l1.5 0l1 0l1.5 -1l1 .5l1.5 2l1.5 -.5l1 .5l1.5 -.5l1 -.5l1.5 0l1.5 0l1 0l1.5 1.5l1 -1.5l1.5 -1l1.5 .5l1 -.5l1.5 0l1 .5l1.5 0l1.5 1l1 -.5l1.5 0l1 .5l1.5 -1l1.5 .5l1 0l1.5 0l1 .5l1.5 .5l1.5 0l1 -1l1.5 .5l1 -1l1.5 0l1.5 .5l1 .5l1.5 0l1 .5l1.5 -1l1.5 .5l1 -1l1.5 .5l1 -.5l1.5 .5l1.5 -.5l1 .5l1.5 0l1 1.5l1.5 -1l1.5 -.5l1 -.5l1.5 1l1 .5l1.5 -1.5l1.5 0l1 0l1.5 -.5l1 -.5l1.5 0l1.5 2.5l1 0l1.5 -1l1 1l1.5 -1l1.5 .5l1 -.5l1.5 .5l1 0l1.5 -.5l1.5 1.5l1 -.5l1.5 0l1 -.5l1.5 -1l1.5 1l1 -1l1.5 1l1 1l1.5 -1.5l1.5 0l1 0l1.5 -1l1 .5l1.5 0l1.5 1l1 .5l1.5 0l1 -1l1.5 -.5l1.5 .5l1 0l1.5 0l1 1.5l1.5 -1.5l1.5 0l1 -.5l1.5 0l1 -.5l1.5 .5l1.5 1l1 -1l1.5 -.5l1 .5l1.5 0l1.5 -.5l1 0l1.5 .5l1 1.5l1.5 -1l1.5 0l1 0l1.5 -.5l1 .5l1.5 -1l1.5 .5l1 .5l1.5 -.5l1 .5l1.5 -.5l1.5 1.5l1 -2l1.5 0l1 -.5l1.5 .5l1.5 1.5l1 0l1.5 -1l1 .5l1.5 -.5l1.5 0l1 0l1.5 1l1 -.5l1.5 .5l1.5 0l1 -.5l1.5 -.5l1 0l1.5 .5l1.5 1l1 -.5l1.5 0l1 .5l1.5 -1l1.5 .5l1 0l1.5 -.5l1 -.5l1.5 1l1.5 -.5l1 .5l1.5 .5l1 0l1.5 -.5l1.5 0l1 -.5l1.5 -1.5l1 1.5l1.5 -3l1.5 -1l1 1l1.5 1l1 0l1.5 2.5l1.5 -2l1 -1.5l1.5 1.5l1 1l1.5 -.5l1.5 -1l1 .5l1.5 -.5l1 2l1.5 -1.5l1.5 -2l1 2.5l1.5 -2.5l1 1.5l1.5 1l1.5 -1l1 .5l1.5 -1l1 -1.5l1.5 3l1.5 -1.5l1 -.5l1.5 1.5l1 -1l1.5 -.5l1.5 2l1 -1l1.5 -1.5l1 1.5l1.5 0l1.5 2.5l1 -1l1.5 -1.5l1 -1.5l1.5 1l1.5 .5l1 2l1.5 -4l1 2l1.5 -1.5l1.5 2l1 .5l1.5 -1.5l1 1.5l1.5 -1l1.5 -.5l1 .5l1.5 4l1 .5l1.5 .5l1.5 0l1 .5l1.5 0l1 0l1.5 0l1.5 0l1 0l1.5 0l1 0l1.5 0l1.5 0l1 0l1.5 0l1 0l1.5 0l1.5 0l1 0l1.5 0l1 0l1.5 0l1.5 0l1 0l1.5 0l1 0l1.5 0l1.5 0l1 0l1.5 0l1 0l1.5 0l1.5 0l1 0l1.5 0l1 0l1.5 0l1.5 0l1 0l1.5 0l1 0l1.5 0l0 1l-1.5 0l-1 0l-1.5 0l-1 0l-1.5 0l-1.5 0l-1 0l-1.5 0l-1 0l-1.5 0l-1.5 0l-1 0l-1.5 0l-1 0l-1.5 0l-1.5 0l-1 0l-1.5 0l-1 0l-1.5 0l-1.5 0l-1 0l-1.5 0l-1 0l-1.5 0l-1.5 0l-1 0l-1.5 0l-1 0l-1.5 0l-1.5 0l-1 0l-1.5 0l-1 0l-1.5 0l-1.5 0l-1 0l-1.5 .5l-1 0l-1.5 .5l-1.5 0l-1 1l-1.5 4l-1 .5l-1.5 -.5l-1.5 -1l-1 1.5l-1.5 -1.5l-1 .5l-1.5 2l-1.5 -1.5l-1 2l-1.5 -4.5l-1 2l-1.5 1l-1.5 1.5l-1 -2l-1.5 -1.5l-1 -1l-1.5 2l-1.5 .5l-1 1.5l-1.5 -1.5l-1 -1l-1.5 2l-1.5 -.5l-1 -1l-1.5 1.5l-1 -.5l-1.5 -2l-1.5 3.5l-1 -1.5l-1.5 -1l-1 .5l-1.5 -1l-1.5 1l-1 1.5l-1.5 -2.5l-1 2.5l-1.5 -2.5l-1.5 -1l-1 2l-1.5 -.5l-1 .5l-1.5 -1l-1.5 -.5l-1 1l-1.5 1.5l-1 -1.5l-1.5 -2l-1.5 2.5l-1 0l-1.5 1l-1 1l-1.5 -1l-1.5 -3l-1 1.5l-1.5 -2l-1 0l-1.5 0l-1.5 -1l-1 0l-1.5 1l-1 0l-1.5 0l-1.5 .5l-1 0l-1.5 -.5l-1 0l-1.5 0l-1.5 -.5l-1 .5l-1.5 -.5l-1 0l-1.5 1l-1.5 .5l-1 -.5l-1.5 0l-1 -.5l-1.5 0l-1.5 0l-1 -.5l-1.5 1.5l-1 0l-1.5 0l-1.5 -.5l-1 .5l-1.5 -1l-1 -.5l-1.5 2l-1.5 .5l-1 -.5l-1.5 -.5l-1 -2l-1.5 1.5l-1.5 -.5l-1 .5l-1.5 0l-1 .5l-1.5 .5l-1.5 -1l-1 .5l-1.5 -1l-1 0l-1.5 .5l-1.5 -1l-1 1.5l-1.5 .5l-1 0l-1.5 -.5l-1.5 0l-1 0l-1.5 0l-1 -1l-1.5 .5l-1.5 .5l-1 0l-1.5 0l-1 -.5l-1.5 -.5l-1.5 -1l-1 1l-1.5 0l-1 0l-1.5 .5l-1.5 -.5l-1 -1l-1.5 .5l-1 .5l-1.5 .5l-1.5 .5l-1 .5l-1.5 -1l-1 0l-1.5 -.5l-1.5 -1.5l-1 1l-1.5 1l-1 -.5l-1.5 .5l-1.5 -.5l-1 -.5l-1.5 0l-1 -.5l-1.5 1.5l-1.5 -1l-1 .5l-1.5 .5l-1 -.5l-1.5 .5l-1.5 -1l-1 .5l-1.5 -.5l-1 0l-1.5 2l-1.5 .5l-1 -.5l-1.5 -.5l-1 0l-1.5 0l-1.5 -2l-1 .5l-1.5 1l-1 0l-1.5 -1l-1.5 -.5l-1 1.5l-1.5 -.5l-1 .5l-1.5 -.5l-1.5 1l-1 -.5l-1.5 0l-1 -.5l-1.5 0l-1.5 -.5l-1 .5l-1.5 0l-1 0l-1.5 .5l-1.5 0l-1 -.5l-1.5 .5l-1 -1l-1.5 -.5l-1.5 .5l-1 1l-1.5 0l-1 0l-1.5 0l-1.5 -.5l-1 .5l-1.5 -.5l-1 0l-1.5 1l-1.5 0l-1 .5l-1.5 -.5l-1 0l-1.5 .5l-1.5 -1l-1 -1.5l-1.5 1l-1 0l-1.5 .5l-1.5 0l-1 -1l-1.5 0l-1 0l-1.5 0l-1.5 2l-1 .5l-1.5 -1l-1 0l-1.5 -.5l-1.5 .5l-1 -.5l-1.5 0l-1 1l-1.5 -.5l-1.5 .5l-1 0l-1.5 -.5l-1 -.5l-1.5 0l-1.5 -1l-1 2.5l-1.5 -.5l-1 -.5l-1.5 -.5l-1.5 -1.5l-1 1l-1.5 .5l-1 -.5l-1.5 0l-1.5 0l-1 0l-1.5 .5l-1 -.5l-1.5 -.5l-1.5 .5l-1 -.5l-1.5 1l-1 1l-1.5 0l-1.5 0l-1 .5l-1.5 0l-1 -.5l-1.5 .5l-1.5 -.5l-1 0l-1.5 0l-1 0l-1.5 -3l-.5 -2.5Z"/></defs><path d="M2 22.3H990M2 60.3H990" stroke="#000" stroke-width="1.2"/><g fill="#451a04" stroke="#000" stroke-width="0.9" stroke-linejoin="round"><use href="#w13" transform="translate(-392 22.3)"/><use href="#w13" transform="translate(-392 60.3)"/></g></svg>
<div class="t" style="left:394px;top:1229px;padding:3.5px 4px 1px 2.5px;height:17px;background:rgba(204,85,0,0.82);font-size:12px;letter-spacing:-0.3px;word-spacing:1px;font-weight:bold;color:#f8ece0">015 - <span style="letter-spacing:-0.767px">TRUMPET 2</span></div>
<div style="left:17px;top:1307px;width:352px;height:3px;background:#222528"></div>
<div style="left:392px;top:1306px;width:1000px;height:3px;background:#27303a"></div>
<div style="left:383px;top:1310px;width:1000px;height:12px;background:#464a4e;border-radius:3px 0 0 3px"></div>
<svg style="left:386px;top:1311px;" width="12" height="10" viewBox="0 0 12 10"><path d="M7 1.5 L3.5 5 L7 8.5" stroke="#fff" stroke-width="1.8" fill="none"/></svg>
<div style="left:402px;top:1312px;width:28px;height:8px;background:#f4f4f4;border-radius:4px"></div>
<div style="left:381px;top:115px;width:2px;height:1207px;background:#7d7e80"></div>
<svg style="left:343px;top:1311px;" width="10" height="6" viewBox="0 0 10 6"><path d="M0 0H10L5 5Z" fill="#808080"/></svg>
<svg style="left:362px;top:1308px;" width="13" height="12" viewBox="0 0 13 12"><circle cx="6.5" cy="6" r="5.2" stroke="#7a7a7a" stroke-width="2.2" fill="none" stroke-dasharray="1.6 1.12"/><circle cx="6.5" cy="6" r="3.2" stroke="#7a7a7a" stroke-width="2.4" fill="none"/></svg>
<div style="left:24.5px;top:1314.5px;width:4px;height:1.2px;background:#cfcfcf"></div>
<div style="left:1137px;top:115px;width:1px;height:1195px;background:#f0f0f0"></div>
<div style="left:1138px;top:115px;width:2px;height:1195px;background:#3a3a3a"></div>
<div style="left:1140px;top:115px;width:1px;height:1195px;background:#f0f0f0"></div>
<div style="left:381px;top:707px;width:2px;height:4px;background:#f0f0f0"></div>
<div style="left:381px;top:713px;width:2px;height:4px;background:#f0f0f0"></div>
<div style="left:381px;top:719px;width:2px;height:4px;background:#f0f0f0"></div>
<div style="left:381px;top:725px;width:2px;height:4px;background:#f0f0f0"></div>
<div style="left:0px;top:1332px;width:1374px;height:39px;background:#23262a"></div>
<div style="left:0px;top:1371px;width:1374px;height:3px;background:#1a1c1e"></div>
<div style="left:0px;top:1371.5px;width:165px;height:2.5px;background:#f4f4f4"></div>
<div style="left:314px;top:1372px;width:48px;height:2px;background:#5a5c60"></div>
<div style="left:-5px;top:1339px;width:22px;height:25px;background:#1a1c1e;border:1px solid #55575b;border-radius:3px"></div>
<svg style="left:0px;top:1346px;" width="12" height="10" viewBox="0 0 12 10"><path d="M1 1h9l-4.5 8z" fill="#f2f2f2"/></svg>
<div style="left:19px;top:1346px;width:2.6px;height:2.6px;background:#c0c0c0"></div>
<div style="left:19px;top:1350.5px;width:2.6px;height:2.6px;background:#c0c0c0"></div>
<div style="left:19px;top:1355px;width:2.6px;height:2.6px;background:#c0c0c0"></div>
<div style="left:28px;top:1339px;width:37px;height:25px;background:#5e5f63;border:1px solid #808185;border-radius:3px"></div>
<div class="t" style="left:37.5px;top:1345px;font-size:14.5px;color:#f0f0f0;letter-spacing:-2px;-webkit-text-stroke:0.2px #5e5f63">AQ</div>
<div style="left:511px;top:1339px;width:140px;height:12px;background:#25282c;border:1px solid #5a5c60;border-radius:2px"></div>
<div style="left:511px;top:1351px;width:140px;height:12px;background:#25282c;border:1px solid #5a5c60;border-radius:2px"></div>
<div style="left:548px;top:1343px;width:1px;height:5px;background:#55575b"></div>
<div style="left:548px;top:1355px;width:1px;height:5px;background:#55575b"></div>
<div style="left:581px;top:1343px;width:1px;height:5px;background:#55575b"></div>
<div style="left:581px;top:1355px;width:1px;height:5px;background:#55575b"></div>
<div style="left:615px;top:1343px;width:1px;height:5px;background:#55575b"></div>
<div style="left:615px;top:1355px;width:1px;height:5px;background:#55575b"></div>
<div style="left:514px;top:1342px;width:3px;height:6px;background:#d8d8d8;border-radius:1px"></div>
<div style="left:514px;top:1354px;width:1px;height:6px;background:#d8d8d8"></div>
<div style="left:654px;top:1339px;width:13px;height:12px;border:1px solid #5a5c60;border-radius:2px"></div>
<div style="left:654px;top:1351px;width:13px;height:12px;border:1px solid #5a5c60;border-radius:2px"></div>
<div style="left:681px;top:1339px;width:150px;height:25px;background:#1a1c1e;border:1px solid #55575b;border-radius:3px"></div>
<div style="left:682px;top:1340px;width:24px;height:23px;background:#5e5f63;border-radius:2px 0 0 2px"></div>
<svg style="left:682px;top:1340px;" width="24" height="23" viewBox="0 0 24 23"><path d="M7 6H16L7 15Z" fill="#f2f2f2"/><path d="M7 6V17" stroke="#f2f2f2" stroke-width="1.5"/></svg>
<div class="t" style="left:706px;top:1344px;width:117.5px;text-align:right;font-size:15px;color:#e8e8e8">1.&nbsp;&nbsp;1.&nbsp;&nbsp;1.&nbsp;&nbsp;&nbsp;&nbsp;0</div>
<div style="left:841px;top:1339px;width:150px;height:25px;background:#1a1c1e;border:1px solid #55575b;border-radius:3px"></div>
<div style="left:842px;top:1340px;width:24px;height:23px;background:#5e5f63;border-radius:2px 0 0 2px"></div>
<svg style="left:842px;top:1340px;" width="24" height="23" viewBox="0 0 24 23"><path d="M17 6H8L17 15Z" fill="#f2f2f2"/><path d="M17 6V17" stroke="#f2f2f2" stroke-width="1.5"/></svg>
<div class="t" style="left:866px;top:1344px;width:119px;text-align:right;font-size:15px;color:#e8e8e8">30.&nbsp;&nbsp;4.&nbsp;&nbsp;1.&nbsp;&nbsp;33</div>
<div style="left:996px;top:1339px;width:74px;height:25px;background:#5e5f63;border:1px solid #808185;border-radius:3px"></div>
<svg style="left:996px;top:1339px;" width="74" height="25" viewBox="0 0 74 25"><rect x="8" y="11" width="9" height="7" fill="#f2f2f2"/><path d="M10 11V8.5a2.5 2.5 0 0 1 5 0V11" stroke="#f2f2f2" stroke-width="1.5" fill="none"/><path d="M33 8h8l-4 5z" fill="#f2f2f2"/><circle cx="37" cy="16" r="1.6" fill="#f2f2f2"/><circle cx="62" cy="8" r="1.6" fill="#f2f2f2"/><path d="M58 17h8l-4-5z" fill="#f2f2f2"/></svg>
<div style="left:1072px;top:1343px;width:3px;height:3px;background:#c0c0c0"></div>
<div style="left:1072px;top:1348px;width:3px;height:3px;background:#c0c0c0"></div>
<div style="left:1072px;top:1353px;width:3px;height:3px;background:#c0c0c0"></div>
<div style="left:1082px;top:1336px;width:200px;height:32px;background:#737373;border:2px solid #c9c9c9;border-radius:4px"></div>
<div style="left:1182px;top:1338px;width:50px;height:28px;background:#3cd63c"></div>
<svg style="left:1084px;top:1338px;" width="196" height="28" viewBox="0 0 196 28"><path d="M14 17 H25 C29 17,29 10,25 10 C22 10,19 13,14 17" stroke="#fff" stroke-width="1.6" fill="none"/><rect x="69" y="9" width="10" height="10" stroke="#fff" stroke-width="1.8" fill="none"/><path d="M120 7.5 L131 14 L120 20.5 Z" stroke="#000" stroke-width="2" fill="none" stroke-linejoin="miter"/><circle cx="174" cy="14" r="5.5" stroke="#fff" stroke-width="1.8" fill="none"/></svg>
<div style="left:1285px;top:1343px;width:3px;height:3px;background:#c0c0c0"></div>
<div style="left:1285px;top:1348px;width:3px;height:3px;background:#c0c0c0"></div>
<div style="left:1285px;top:1353px;width:3px;height:3px;background:#c0c0c0"></div>
<div style="left:1293px;top:1339px;width:38px;height:25px;background:#5e5f63;border:1px solid #6a6b6f;border-radius:3px"></div>
<svg style="left:1293px;top:1339px;" width="38" height="25" viewBox="0 0 38 25"><circle cx="17" cy="12.5" r="3" fill="#8a8b8e"/><path d="M20 5.5 C26 8,26 17,20 19.5 C23 16,23 9,20 5.5Z" fill="#8a8b8e"/></svg>
<div style="left:1336px;top:1339px;width:60px;height:25px;background:#1a1c1e;border:1px solid #55575b;border-radius:3px"></div>
<div style="left:1360px;top:1340px;width:1px;height:23px;background:#55575b"></div>
<svg style="left:1340px;top:1341px;" width="18" height="20" viewBox="0 0 18 20"><path d="M12 3 V14" stroke="#f2f2f2" stroke-width="1.6"/><ellipse cx="9" cy="14.5" rx="3.6" ry="2.6" fill="#f2f2f2"/></svg>
</body></html>
